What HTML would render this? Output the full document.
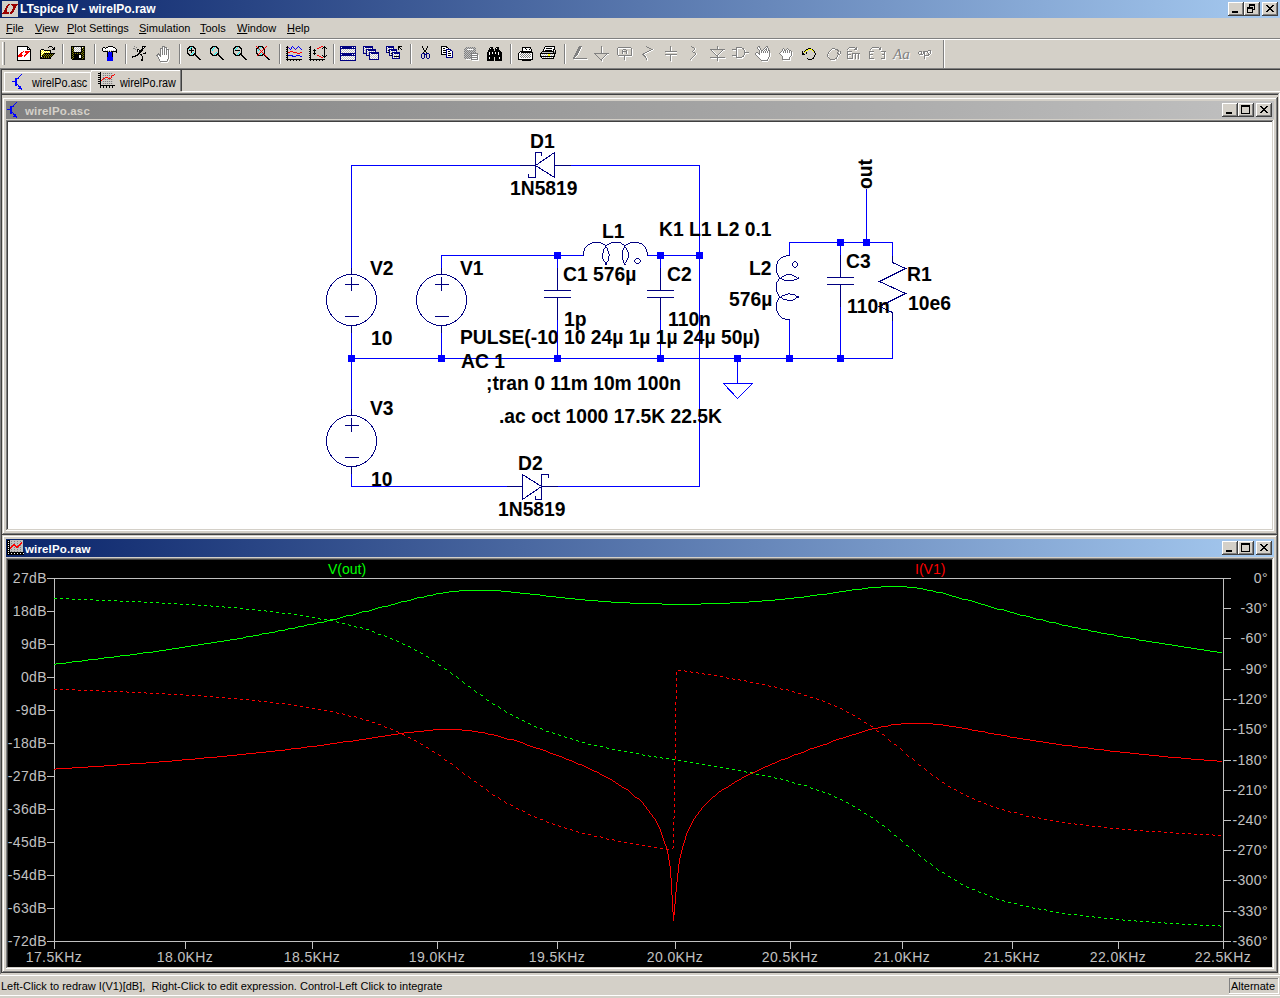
<!DOCTYPE html><html><head><meta charset="utf-8"><style>
html,body{margin:0;padding:0;width:1280px;height:998px;overflow:hidden;background:#D4D0C8;font-family:"Liberation Sans", sans-serif;}
.t{position:absolute;white-space:pre;line-height:1;font-family:"Liberation Sans", sans-serif;}
svg{overflow:visible}
</style></head><body><div style="position:absolute;left:0px;top:0px;width:1280px;height:18px;background:linear-gradient(to right,#0A246A,#A6CAF0);"></div>
<svg style="position:absolute;left:2px;top:1px" width="16" height="16" shape-rendering="crispEdges"><rect width="16" height="16" fill="#D4D0C8"/><path d="M6 3h1v1h-1zM7 3h1v1h-1zM9 3h1v1h-1zM10 3h1v1h-1zM11 3h1v1h-1zM12 3h1v1h-1zM13 3h1v1h-1zM14 3h1v1h-1zM15 3h1v1h-1zM5 4h1v1h-1zM6 4h1v1h-1zM10 4h1v1h-1zM11 4h1v1h-1zM12 4h1v1h-1zM13 4h1v1h-1zM14 4h1v1h-1zM4 5h1v1h-1zM5 5h1v1h-1zM11 5h1v1h-1zM12 5h1v1h-1zM13 5h1v1h-1zM4 6h1v1h-1zM5 6h1v1h-1zM11 6h1v1h-1zM12 6h1v1h-1zM13 6h1v1h-1zM3 7h1v1h-1zM4 7h1v1h-1zM11 7h1v1h-1zM12 7h1v1h-1zM3 8h1v1h-1zM4 8h1v1h-1zM10 8h1v1h-1zM11 8h1v1h-1zM12 8h1v1h-1zM2 9h1v1h-1zM3 9h1v1h-1zM4 9h1v1h-1zM10 9h1v1h-1zM11 9h1v1h-1zM2 10h1v1h-1zM3 10h1v1h-1zM4 10h1v1h-1zM9 10h1v1h-1zM10 10h1v1h-1zM11 10h1v1h-1zM1 11h1v1h-1zM2 11h1v1h-1zM3 11h1v1h-1zM4 11h1v1h-1zM5 11h1v1h-1zM6 11h1v1h-1zM8 11h1v1h-1zM9 11h1v1h-1zM10 11h1v1h-1zM0 12h1v1h-1zM1 12h1v1h-1zM2 12h1v1h-1zM3 12h1v1h-1zM4 12h1v1h-1zM5 12h1v1h-1zM6 12h1v1h-1zM8 12h1v1h-1zM9 12h1v1h-1z" fill="#9A0000"/></svg>
<div class="t" style="left:20px;top:3px;font-size:12px;color:#fff;font-weight:bold;">LTspice IV - wirelPo.raw</div>
<div style="position:absolute;left:1228px;top:2px;width:16px;height:14px;background:#D4D0C8;"></div>
<div style="position:absolute;left:1228px;top:2px;width:16px;height:1px;background:#fff;"></div>
<div style="position:absolute;left:1228px;top:2px;width:1px;height:14px;background:#fff;"></div>
<div style="position:absolute;left:1228px;top:15px;width:16px;height:1px;background:#404040;"></div>
<div style="position:absolute;left:1243px;top:2px;width:1px;height:14px;background:#404040;"></div>
<div style="position:absolute;left:1229px;top:14px;width:14px;height:1px;background:#808080;"></div>
<div style="position:absolute;left:1242px;top:3px;width:1px;height:12px;background:#808080;"></div>
<div style="position:absolute;left:1232px;top:11px;width:6px;height:2px;background:#000;"></div>
<div style="position:absolute;left:1244px;top:2px;width:16px;height:14px;background:#D4D0C8;"></div>
<div style="position:absolute;left:1244px;top:2px;width:16px;height:1px;background:#fff;"></div>
<div style="position:absolute;left:1244px;top:2px;width:1px;height:14px;background:#fff;"></div>
<div style="position:absolute;left:1244px;top:15px;width:16px;height:1px;background:#404040;"></div>
<div style="position:absolute;left:1259px;top:2px;width:1px;height:14px;background:#404040;"></div>
<div style="position:absolute;left:1245px;top:14px;width:14px;height:1px;background:#808080;"></div>
<div style="position:absolute;left:1258px;top:3px;width:1px;height:12px;background:#808080;"></div>
<div style="position:absolute;left:1249px;top:4px;width:6px;height:6px;background:none;border:1px solid #000;border-top-width:2px;box-sizing:border-box"></div>
<div style="position:absolute;left:1247px;top:7px;width:6px;height:6px;background:#D4D0C8;border:1px solid #000;border-top-width:2px;box-sizing:border-box"></div>
<div style="position:absolute;left:1262px;top:2px;width:16px;height:14px;background:#D4D0C8;"></div>
<div style="position:absolute;left:1262px;top:2px;width:16px;height:1px;background:#fff;"></div>
<div style="position:absolute;left:1262px;top:2px;width:1px;height:14px;background:#fff;"></div>
<div style="position:absolute;left:1262px;top:15px;width:16px;height:1px;background:#404040;"></div>
<div style="position:absolute;left:1277px;top:2px;width:1px;height:14px;background:#404040;"></div>
<div style="position:absolute;left:1263px;top:14px;width:14px;height:1px;background:#808080;"></div>
<div style="position:absolute;left:1276px;top:3px;width:1px;height:12px;background:#808080;"></div>
<svg style="position:absolute;left:1266px;top:5px" width="8" height="7" shape-rendering="crispEdges"><path d="M0 0h1v1h-1zM1 0h1v1h-1zM6 0h1v1h-1zM7 0h1v1h-1zM1 1h1v1h-1zM2 1h1v1h-1zM5 1h1v1h-1zM6 1h1v1h-1zM2 2h1v1h-1zM3 2h1v1h-1zM4 2h1v1h-1zM5 2h1v1h-1zM3 3h1v1h-1zM4 3h1v1h-1zM2 4h1v1h-1zM3 4h1v1h-1zM4 4h1v1h-1zM5 4h1v1h-1zM1 5h1v1h-1zM2 5h1v1h-1zM5 5h1v1h-1zM6 5h1v1h-1zM0 6h1v1h-1zM1 6h1v1h-1zM6 6h1v1h-1zM7 6h1v1h-1z" fill="#000"/></svg>
<div class="t" style="left:6px;top:23px;font-size:11px;color:#000;font-weight:normal;"><u>F</u>ile</div>
<div class="t" style="left:35px;top:23px;font-size:11px;color:#000;font-weight:normal;"><u>V</u>iew</div>
<div class="t" style="left:67px;top:23px;font-size:11px;color:#000;font-weight:normal;"><u>P</u>lot Settings</div>
<div class="t" style="left:139px;top:23px;font-size:11px;color:#000;font-weight:normal;"><u>S</u>imulation</div>
<div class="t" style="left:200px;top:23px;font-size:11px;color:#000;font-weight:normal;"><u>T</u>ools</div>
<div class="t" style="left:237px;top:23px;font-size:11px;color:#000;font-weight:normal;"><u>W</u>indow</div>
<div class="t" style="left:287px;top:23px;font-size:11px;color:#000;font-weight:normal;"><u>H</u>elp</div>
<div style="position:absolute;left:0px;top:38px;width:1280px;height:1px;background:#808080;"></div>
<div style="position:absolute;left:0px;top:39px;width:1280px;height:1px;background:#fff;"></div>
<div style="position:absolute;left:2px;top:42px;width:1px;height:23px;background:#fff;"></div>
<div style="position:absolute;left:4px;top:42px;width:1px;height:23px;background:#808080;"></div>
<div style="position:absolute;left:62px;top:44px;width:1px;height:20px;background:#808080;"></div>
<div style="position:absolute;left:63px;top:44px;width:1px;height:20px;background:#fff;"></div>
<div style="position:absolute;left:94px;top:44px;width:1px;height:20px;background:#808080;"></div>
<div style="position:absolute;left:95px;top:44px;width:1px;height:20px;background:#fff;"></div>
<div style="position:absolute;left:125px;top:44px;width:1px;height:20px;background:#808080;"></div>
<div style="position:absolute;left:126px;top:44px;width:1px;height:20px;background:#fff;"></div>
<div style="position:absolute;left:179px;top:44px;width:1px;height:20px;background:#808080;"></div>
<div style="position:absolute;left:180px;top:44px;width:1px;height:20px;background:#fff;"></div>
<div style="position:absolute;left:279px;top:44px;width:1px;height:20px;background:#808080;"></div>
<div style="position:absolute;left:280px;top:44px;width:1px;height:20px;background:#fff;"></div>
<div style="position:absolute;left:333px;top:44px;width:1px;height:20px;background:#808080;"></div>
<div style="position:absolute;left:334px;top:44px;width:1px;height:20px;background:#fff;"></div>
<div style="position:absolute;left:410px;top:44px;width:1px;height:20px;background:#808080;"></div>
<div style="position:absolute;left:411px;top:44px;width:1px;height:20px;background:#fff;"></div>
<div style="position:absolute;left:510px;top:44px;width:1px;height:20px;background:#808080;"></div>
<div style="position:absolute;left:511px;top:44px;width:1px;height:20px;background:#fff;"></div>
<div style="position:absolute;left:564px;top:44px;width:1px;height:20px;background:#808080;"></div>
<div style="position:absolute;left:565px;top:44px;width:1px;height:20px;background:#fff;"></div>
<div style="position:absolute;left:943px;top:40px;width:1px;height:28px;background:#808080;"></div>
<div style="position:absolute;left:944px;top:40px;width:1px;height:28px;background:#fff;"></div>
<svg style="position:absolute;left:0;top:0" width="1280" height="70" shape-rendering="crispEdges"><path d="M17 46h1v1h-1zM18 46h1v1h-1zM19 46h1v1h-1zM20 46h1v1h-1zM21 46h1v1h-1zM22 46h1v1h-1zM23 46h1v1h-1zM24 46h1v1h-1zM25 46h1v1h-1zM26 46h1v1h-1zM27 46h1v1h-1zM17 47h1v1h-1zM27 47h1v1h-1zM28 47h1v1h-1zM17 48h1v1h-1zM27 48h1v1h-1zM29 48h1v1h-1zM17 49h1v1h-1zM27 49h1v1h-1zM28 49h1v1h-1zM29 49h1v1h-1zM30 49h1v1h-1zM17 50h1v1h-1zM30 50h1v1h-1zM17 51h1v1h-1zM30 51h1v1h-1zM17 52h1v1h-1zM30 52h1v1h-1zM17 53h1v1h-1zM30 53h1v1h-1zM17 54h1v1h-1zM30 54h1v1h-1zM17 55h1v1h-1zM30 55h1v1h-1zM17 56h1v1h-1zM30 56h1v1h-1zM17 57h1v1h-1zM30 57h1v1h-1zM17 58h1v1h-1zM30 58h1v1h-1zM17 59h1v1h-1zM30 59h1v1h-1zM17 60h1v1h-1zM18 60h1v1h-1zM19 60h1v1h-1zM20 60h1v1h-1zM21 60h1v1h-1zM22 60h1v1h-1zM23 60h1v1h-1zM24 60h1v1h-1zM25 60h1v1h-1zM26 60h1v1h-1zM27 60h1v1h-1zM28 60h1v1h-1zM29 60h1v1h-1zM30 60h1v1h-1z" fill="#000000"/></svg>
<svg style="position:absolute;left:0;top:0" width="1280" height="70" shape-rendering="crispEdges"><path d="M18 47h1v1h-1zM19 47h1v1h-1zM20 47h1v1h-1zM21 47h1v1h-1zM22 47h1v1h-1zM23 47h1v1h-1zM24 47h1v1h-1zM25 47h1v1h-1zM26 47h1v1h-1zM18 48h1v1h-1zM19 48h1v1h-1zM20 48h1v1h-1zM21 48h1v1h-1zM22 48h1v1h-1zM23 48h1v1h-1zM24 48h1v1h-1zM25 48h1v1h-1zM26 48h1v1h-1zM28 48h1v1h-1zM18 49h1v1h-1zM19 49h1v1h-1zM20 49h1v1h-1zM21 49h1v1h-1zM22 49h1v1h-1zM23 49h1v1h-1zM24 49h1v1h-1zM25 49h1v1h-1zM26 49h1v1h-1zM18 50h1v1h-1zM19 50h1v1h-1zM20 50h1v1h-1zM21 50h1v1h-1zM22 50h1v1h-1zM23 50h1v1h-1zM24 50h1v1h-1zM25 50h1v1h-1zM26 50h1v1h-1zM27 50h1v1h-1zM28 50h1v1h-1zM29 50h1v1h-1zM18 51h1v1h-1zM19 51h1v1h-1zM20 51h1v1h-1zM21 51h1v1h-1zM22 51h1v1h-1zM24 51h1v1h-1zM18 52h1v1h-1zM19 52h1v1h-1zM20 52h1v1h-1zM23 52h1v1h-1zM24 52h1v1h-1zM29 52h1v1h-1zM18 53h1v1h-1zM19 53h1v1h-1zM22 53h1v1h-1zM23 53h1v1h-1zM24 53h1v1h-1zM25 53h1v1h-1zM28 53h1v1h-1zM29 53h1v1h-1zM18 54h1v1h-1zM22 54h1v1h-1zM23 54h1v1h-1zM24 54h1v1h-1zM27 54h1v1h-1zM28 54h1v1h-1zM29 54h1v1h-1zM23 55h1v1h-1zM26 55h1v1h-1zM27 55h1v1h-1zM28 55h1v1h-1zM29 55h1v1h-1zM22 56h1v1h-1zM23 56h1v1h-1zM25 56h1v1h-1zM26 56h1v1h-1zM27 56h1v1h-1zM28 56h1v1h-1zM29 56h1v1h-1zM18 57h1v1h-1zM19 57h1v1h-1zM20 57h1v1h-1zM21 57h1v1h-1zM22 57h1v1h-1zM23 57h1v1h-1zM24 57h1v1h-1zM25 57h1v1h-1zM26 57h1v1h-1zM27 57h1v1h-1zM28 57h1v1h-1zM29 57h1v1h-1zM18 58h1v1h-1zM19 58h1v1h-1zM20 58h1v1h-1zM21 58h1v1h-1zM22 58h1v1h-1zM23 58h1v1h-1zM24 58h1v1h-1zM25 58h1v1h-1zM26 58h1v1h-1zM27 58h1v1h-1zM28 58h1v1h-1zM29 58h1v1h-1zM18 59h1v1h-1zM19 59h1v1h-1zM20 59h1v1h-1zM21 59h1v1h-1zM22 59h1v1h-1zM23 59h1v1h-1zM24 59h1v1h-1zM25 59h1v1h-1zM26 59h1v1h-1zM27 59h1v1h-1zM28 59h1v1h-1zM29 59h1v1h-1z" fill="#FFFFFF"/></svg>
<svg style="position:absolute;left:0;top:0" width="1280" height="70" shape-rendering="crispEdges"><path d="M23 51h1v1h-1zM25 51h1v1h-1zM26 51h1v1h-1zM27 51h1v1h-1zM28 51h1v1h-1zM29 51h1v1h-1zM21 52h1v1h-1zM22 52h1v1h-1zM25 52h1v1h-1zM26 52h1v1h-1zM27 52h1v1h-1zM28 52h1v1h-1zM20 53h1v1h-1zM21 53h1v1h-1zM26 53h1v1h-1zM27 53h1v1h-1zM19 54h1v1h-1zM20 54h1v1h-1zM21 54h1v1h-1zM25 54h1v1h-1zM26 54h1v1h-1zM18 55h1v1h-1zM19 55h1v1h-1zM20 55h1v1h-1zM21 55h1v1h-1zM22 55h1v1h-1zM24 55h1v1h-1zM25 55h1v1h-1zM18 56h1v1h-1zM19 56h1v1h-1zM20 56h1v1h-1zM21 56h1v1h-1zM24 56h1v1h-1z" fill="#FF0000"/></svg>
<svg style="position:absolute;left:0;top:0" width="1280" height="70" shape-rendering="crispEdges"><path d="M49 46h1v1h-1zM50 46h1v1h-1zM51 46h1v1h-1zM48 47h1v1h-1zM52 47h1v1h-1zM54 47h1v1h-1zM53 48h1v1h-1zM54 48h1v1h-1zM41 49h1v1h-1zM42 49h1v1h-1zM43 49h1v1h-1zM52 49h1v1h-1zM53 49h1v1h-1zM54 49h1v1h-1zM40 50h1v1h-1zM44 50h1v1h-1zM45 50h1v1h-1zM46 50h1v1h-1zM47 50h1v1h-1zM48 50h1v1h-1zM49 50h1v1h-1zM50 50h1v1h-1zM40 51h1v1h-1zM50 51h1v1h-1zM40 52h1v1h-1zM50 52h1v1h-1zM40 53h1v1h-1zM44 53h1v1h-1zM45 53h1v1h-1zM46 53h1v1h-1zM47 53h1v1h-1zM48 53h1v1h-1zM49 53h1v1h-1zM50 53h1v1h-1zM51 53h1v1h-1zM52 53h1v1h-1zM53 53h1v1h-1zM54 53h1v1h-1zM40 54h1v1h-1zM43 54h1v1h-1zM45 54h1v1h-1zM47 54h1v1h-1zM49 54h1v1h-1zM51 54h1v1h-1zM53 54h1v1h-1zM40 55h1v1h-1zM42 55h1v1h-1zM44 55h1v1h-1zM46 55h1v1h-1zM48 55h1v1h-1zM50 55h1v1h-1zM52 55h1v1h-1zM40 56h1v1h-1zM42 56h1v1h-1zM43 56h1v1h-1zM45 56h1v1h-1zM47 56h1v1h-1zM49 56h1v1h-1zM51 56h1v1h-1zM40 57h1v1h-1zM41 57h1v1h-1zM43 57h1v1h-1zM45 57h1v1h-1zM47 57h1v1h-1zM49 57h1v1h-1zM50 57h1v1h-1zM40 58h1v1h-1zM41 58h1v1h-1zM42 58h1v1h-1zM43 58h1v1h-1zM44 58h1v1h-1zM45 58h1v1h-1zM46 58h1v1h-1zM47 58h1v1h-1zM48 58h1v1h-1zM49 58h1v1h-1zM50 58h1v1h-1z" fill="#000000"/></svg>
<svg style="position:absolute;left:0;top:0" width="1280" height="70" shape-rendering="crispEdges"><path d="M41 50h1v1h-1zM43 50h1v1h-1zM42 51h1v1h-1zM44 51h1v1h-1zM46 51h1v1h-1zM48 51h1v1h-1zM41 52h1v1h-1zM43 52h1v1h-1zM45 52h1v1h-1zM47 52h1v1h-1zM49 52h1v1h-1zM42 53h1v1h-1zM41 54h1v1h-1zM41 56h1v1h-1z" fill="#FFFFFF"/></svg>
<svg style="position:absolute;left:0;top:0" width="1280" height="70" shape-rendering="crispEdges"><path d="M42 50h1v1h-1zM41 51h1v1h-1zM43 51h1v1h-1zM45 51h1v1h-1zM47 51h1v1h-1zM49 51h1v1h-1zM42 52h1v1h-1zM44 52h1v1h-1zM46 52h1v1h-1zM48 52h1v1h-1zM41 53h1v1h-1zM43 53h1v1h-1zM42 54h1v1h-1zM41 55h1v1h-1z" fill="#FFFF00"/></svg>
<svg style="position:absolute;left:0;top:0" width="1280" height="70" shape-rendering="crispEdges"><path d="M44 54h1v1h-1zM46 54h1v1h-1zM48 54h1v1h-1zM50 54h1v1h-1zM52 54h1v1h-1zM43 55h1v1h-1zM45 55h1v1h-1zM47 55h1v1h-1zM49 55h1v1h-1zM51 55h1v1h-1zM44 56h1v1h-1zM46 56h1v1h-1zM48 56h1v1h-1zM50 56h1v1h-1zM42 57h1v1h-1zM44 57h1v1h-1zM46 57h1v1h-1zM48 57h1v1h-1z" fill="#808000"/></svg>
<svg style="position:absolute;left:0;top:0" width="1280" height="70" shape-rendering="crispEdges"><path d="M71 46h1v1h-1zM72 46h1v1h-1zM73 46h1v1h-1zM74 46h1v1h-1zM75 46h1v1h-1zM76 46h1v1h-1zM77 46h1v1h-1zM78 46h1v1h-1zM79 46h1v1h-1zM80 46h1v1h-1zM81 46h1v1h-1zM82 46h1v1h-1zM83 46h1v1h-1zM84 46h1v1h-1zM71 47h1v1h-1zM73 47h1v1h-1zM81 47h1v1h-1zM84 47h1v1h-1zM71 48h1v1h-1zM73 48h1v1h-1zM81 48h1v1h-1zM83 48h1v1h-1zM84 48h1v1h-1zM71 49h1v1h-1zM72 49h1v1h-1zM81 49h1v1h-1zM82 49h1v1h-1zM84 49h1v1h-1zM71 50h1v1h-1zM73 50h1v1h-1zM81 50h1v1h-1zM83 50h1v1h-1zM84 50h1v1h-1zM71 51h1v1h-1zM72 51h1v1h-1zM81 51h1v1h-1zM82 51h1v1h-1zM84 51h1v1h-1zM71 52h1v1h-1zM73 52h1v1h-1zM74 52h1v1h-1zM75 52h1v1h-1zM76 52h1v1h-1zM77 52h1v1h-1zM78 52h1v1h-1zM79 52h1v1h-1zM80 52h1v1h-1zM81 52h1v1h-1zM83 52h1v1h-1zM84 52h1v1h-1zM71 53h1v1h-1zM72 53h1v1h-1zM74 53h1v1h-1zM76 53h1v1h-1zM78 53h1v1h-1zM80 53h1v1h-1zM82 53h1v1h-1zM84 53h1v1h-1zM71 54h1v1h-1zM73 54h1v1h-1zM74 54h1v1h-1zM75 54h1v1h-1zM76 54h1v1h-1zM77 54h1v1h-1zM78 54h1v1h-1zM79 54h1v1h-1zM80 54h1v1h-1zM81 54h1v1h-1zM83 54h1v1h-1zM84 54h1v1h-1zM71 55h1v1h-1zM72 55h1v1h-1zM74 55h1v1h-1zM75 55h1v1h-1zM76 55h1v1h-1zM77 55h1v1h-1zM78 55h1v1h-1zM81 55h1v1h-1zM82 55h1v1h-1zM84 55h1v1h-1zM71 56h1v1h-1zM73 56h1v1h-1zM74 56h1v1h-1zM75 56h1v1h-1zM76 56h1v1h-1zM77 56h1v1h-1zM78 56h1v1h-1zM81 56h1v1h-1zM83 56h1v1h-1zM84 56h1v1h-1zM71 57h1v1h-1zM72 57h1v1h-1zM74 57h1v1h-1zM75 57h1v1h-1zM76 57h1v1h-1zM77 57h1v1h-1zM78 57h1v1h-1zM81 57h1v1h-1zM82 57h1v1h-1zM84 57h1v1h-1zM71 58h1v1h-1zM73 58h1v1h-1zM74 58h1v1h-1zM75 58h1v1h-1zM76 58h1v1h-1zM77 58h1v1h-1zM78 58h1v1h-1zM79 58h1v1h-1zM80 58h1v1h-1zM81 58h1v1h-1zM83 58h1v1h-1zM84 58h1v1h-1zM72 59h1v1h-1zM73 59h1v1h-1zM74 59h1v1h-1zM75 59h1v1h-1zM76 59h1v1h-1zM77 59h1v1h-1zM78 59h1v1h-1zM79 59h1v1h-1zM80 59h1v1h-1zM81 59h1v1h-1zM82 59h1v1h-1zM83 59h1v1h-1zM84 59h1v1h-1z" fill="#000000"/></svg>
<svg style="position:absolute;left:0;top:0" width="1280" height="70" shape-rendering="crispEdges"><path d="M72 47h1v1h-1zM83 47h1v1h-1zM72 48h1v1h-1zM82 48h1v1h-1zM73 49h1v1h-1zM83 49h1v1h-1zM72 50h1v1h-1zM82 50h1v1h-1zM73 51h1v1h-1zM83 51h1v1h-1zM72 52h1v1h-1zM82 52h1v1h-1zM73 53h1v1h-1zM75 53h1v1h-1zM77 53h1v1h-1zM79 53h1v1h-1zM81 53h1v1h-1zM83 53h1v1h-1zM72 54h1v1h-1zM82 54h1v1h-1zM73 55h1v1h-1zM83 55h1v1h-1zM72 56h1v1h-1zM82 56h1v1h-1zM73 57h1v1h-1zM83 57h1v1h-1zM72 58h1v1h-1zM82 58h1v1h-1z" fill="#808000"/></svg>
<svg style="position:absolute;left:0;top:0" width="1280" height="70" shape-rendering="crispEdges"><path d="M74 47h1v1h-1zM76 47h1v1h-1zM78 47h1v1h-1zM80 47h1v1h-1zM75 48h1v1h-1zM77 48h1v1h-1zM79 48h1v1h-1zM74 49h1v1h-1zM76 49h1v1h-1zM78 49h1v1h-1zM80 49h1v1h-1zM75 50h1v1h-1zM77 50h1v1h-1zM79 50h1v1h-1zM74 51h1v1h-1zM76 51h1v1h-1zM78 51h1v1h-1zM80 51h1v1h-1z" fill="#C0C0C0"/></svg>
<svg style="position:absolute;left:0;top:0" width="1280" height="70" shape-rendering="crispEdges"><path d="M75 47h1v1h-1zM77 47h1v1h-1zM79 47h1v1h-1zM82 47h1v1h-1zM74 48h1v1h-1zM76 48h1v1h-1zM78 48h1v1h-1zM80 48h1v1h-1zM75 49h1v1h-1zM77 49h1v1h-1zM79 49h1v1h-1zM74 50h1v1h-1zM76 50h1v1h-1zM78 50h1v1h-1zM80 50h1v1h-1zM75 51h1v1h-1zM77 51h1v1h-1zM79 51h1v1h-1zM79 55h1v1h-1zM80 55h1v1h-1zM79 56h1v1h-1zM80 56h1v1h-1zM79 57h1v1h-1zM80 57h1v1h-1z" fill="#FFFFFF"/></svg>
<svg style="position:absolute;left:0;top:0" width="1280" height="70" shape-rendering="crispEdges"><path d="M108 46h1v1h-1zM109 46h1v1h-1zM110 46h1v1h-1zM111 46h1v1h-1zM112 46h1v1h-1zM103 47h1v1h-1zM104 47h1v1h-1zM106 47h1v1h-1zM107 47h1v1h-1zM113 47h1v1h-1zM114 47h1v1h-1zM102 48h1v1h-1zM105 48h1v1h-1zM115 48h1v1h-1zM102 49h1v1h-1zM116 49h1v1h-1zM102 50h1v1h-1zM116 50h1v1h-1zM103 51h1v1h-1zM104 51h1v1h-1zM105 51h1v1h-1zM106 51h1v1h-1zM107 51h1v1h-1zM109 51h1v1h-1zM111 51h1v1h-1zM112 51h1v1h-1zM113 51h1v1h-1zM114 51h1v1h-1zM115 51h1v1h-1zM116 51h1v1h-1zM107 52h1v1h-1zM112 52h1v1h-1zM116 52h1v1h-1zM107 53h1v1h-1zM112 53h1v1h-1zM107 54h1v1h-1zM112 54h1v1h-1zM107 55h1v1h-1zM112 55h1v1h-1zM107 56h1v1h-1zM112 56h1v1h-1z" fill="#000000"/></svg>
<svg style="position:absolute;left:0;top:0" width="1280" height="70" shape-rendering="crispEdges"><path d="M108 47h1v1h-1zM109 47h1v1h-1zM110 47h1v1h-1zM111 47h1v1h-1zM112 47h1v1h-1zM103 48h1v1h-1zM104 48h1v1h-1zM106 48h1v1h-1zM107 48h1v1h-1zM108 48h1v1h-1zM109 48h1v1h-1zM110 48h1v1h-1zM111 48h1v1h-1zM112 48h1v1h-1zM113 48h1v1h-1zM114 48h1v1h-1zM103 49h1v1h-1zM104 49h1v1h-1zM105 49h1v1h-1zM106 49h1v1h-1zM107 49h1v1h-1zM108 49h1v1h-1zM109 49h1v1h-1zM110 49h1v1h-1zM111 49h1v1h-1zM112 49h1v1h-1zM113 49h1v1h-1zM114 49h1v1h-1zM115 49h1v1h-1zM103 50h1v1h-1zM104 50h1v1h-1zM106 50h1v1h-1zM108 50h1v1h-1zM110 50h1v1h-1zM112 50h1v1h-1zM114 50h1v1h-1z" fill="#FFFFFF"/></svg>
<svg style="position:absolute;left:0;top:0" width="1280" height="70" shape-rendering="crispEdges"><path d="M105 50h1v1h-1zM107 50h1v1h-1zM109 50h1v1h-1zM111 50h1v1h-1zM113 50h1v1h-1zM115 50h1v1h-1zM108 51h1v1h-1zM110 51h1v1h-1z" fill="#C0C0C0"/></svg>
<svg style="position:absolute;left:0;top:0" width="1280" height="70" shape-rendering="crispEdges"><path d="M108 52h1v1h-1zM109 52h1v1h-1zM110 52h1v1h-1zM111 52h1v1h-1zM108 53h1v1h-1zM109 53h1v1h-1zM110 53h1v1h-1zM111 53h1v1h-1zM108 54h1v1h-1zM109 54h1v1h-1zM110 54h1v1h-1zM111 54h1v1h-1zM108 55h1v1h-1zM109 55h1v1h-1zM110 55h1v1h-1zM111 55h1v1h-1zM108 56h1v1h-1zM109 56h1v1h-1zM110 56h1v1h-1zM111 56h1v1h-1zM107 57h1v1h-1zM108 57h1v1h-1zM109 57h1v1h-1zM110 57h1v1h-1zM111 57h1v1h-1zM112 57h1v1h-1zM107 58h1v1h-1zM108 58h1v1h-1zM109 58h1v1h-1zM110 58h1v1h-1zM111 58h1v1h-1zM112 58h1v1h-1zM107 59h1v1h-1zM108 59h1v1h-1zM109 59h1v1h-1zM110 59h1v1h-1zM111 59h1v1h-1zM112 59h1v1h-1zM107 60h1v1h-1zM108 60h1v1h-1zM109 60h1v1h-1zM110 60h1v1h-1zM111 60h1v1h-1zM112 60h1v1h-1z" fill="#0000FF"/></svg>
<svg style="position:absolute;left:0;top:0" width="1280" height="70" shape-rendering="crispEdges"><path d="M134 46h1v1h-1zM136 47h1v1h-1zM133 48h1v1h-1zM134 48h1v1h-1zM135 49h1v1h-1z" fill="#808080"/></svg>
<svg style="position:absolute;left:0;top:0" width="1280" height="70" shape-rendering="crispEdges"><path d="M142 46h1v1h-1zM143 46h1v1h-1zM144 46h1v1h-1zM145 46h1v1h-1zM142 47h1v1h-1zM144 47h1v1h-1zM142 48h1v1h-1zM143 48h1v1h-1zM137 49h1v1h-1zM138 49h1v1h-1zM141 49h1v1h-1zM142 49h1v1h-1zM137 50h1v1h-1zM139 50h1v1h-1zM140 50h1v1h-1zM141 50h1v1h-1zM142 50h1v1h-1zM137 51h1v1h-1zM139 51h1v1h-1zM140 51h1v1h-1zM141 51h1v1h-1zM139 52h1v1h-1zM140 52h1v1h-1zM145 52h1v1h-1zM138 53h1v1h-1zM139 53h1v1h-1zM143 53h1v1h-1zM144 53h1v1h-1zM145 53h1v1h-1zM137 54h1v1h-1zM138 54h1v1h-1zM140 54h1v1h-1zM141 54h1v1h-1zM135 55h1v1h-1zM136 55h1v1h-1zM137 55h1v1h-1zM141 55h1v1h-1zM132 56h1v1h-1zM133 56h1v1h-1zM134 56h1v1h-1zM135 56h1v1h-1zM142 56h1v1h-1zM132 57h1v1h-1zM142 57h1v1h-1zM142 58h1v1h-1zM141 59h1v1h-1zM142 59h1v1h-1zM141 60h1v1h-1zM142 60h1v1h-1z" fill="#000000"/></svg>
<svg style="position:absolute;left:0;top:0" width="1280" height="70" shape-rendering="crispEdges"><path d="M143 47h1v1h-1zM138 50h1v1h-1z" fill="#FFFFFF"/></svg>
<svg style="position:absolute;left:0;top:0" width="1280" height="70" shape-rendering="crispEdges"><path d="M189 46h1v1h-1zM190 46h1v1h-1zM191 46h1v1h-1zM192 46h1v1h-1zM193 46h1v1h-1zM188 47h1v1h-1zM189 47h1v1h-1zM193 47h1v1h-1zM194 47h1v1h-1zM187 48h1v1h-1zM188 48h1v1h-1zM191 48h1v1h-1zM194 48h1v1h-1zM195 48h1v1h-1zM187 49h1v1h-1zM191 49h1v1h-1zM195 49h1v1h-1zM187 50h1v1h-1zM189 50h1v1h-1zM190 50h1v1h-1zM191 50h1v1h-1zM192 50h1v1h-1zM193 50h1v1h-1zM195 50h1v1h-1zM187 51h1v1h-1zM191 51h1v1h-1zM195 51h1v1h-1zM187 52h1v1h-1zM191 52h1v1h-1zM195 52h1v1h-1zM187 53h1v1h-1zM188 53h1v1h-1zM194 53h1v1h-1zM195 53h1v1h-1zM188 54h1v1h-1zM189 54h1v1h-1zM193 54h1v1h-1zM194 54h1v1h-1zM195 54h1v1h-1zM189 55h1v1h-1zM190 55h1v1h-1zM191 55h1v1h-1zM192 55h1v1h-1zM193 55h1v1h-1zM195 55h1v1h-1zM196 55h1v1h-1zM196 56h1v1h-1zM197 56h1v1h-1zM197 57h1v1h-1zM198 57h1v1h-1zM198 58h1v1h-1zM199 58h1v1h-1zM199 59h1v1h-1zM200 59h1v1h-1z" fill="#000000"/></svg>
<svg style="position:absolute;left:0;top:0" width="1280" height="70" shape-rendering="crispEdges"><path d="M191 47h1v1h-1zM190 48h1v1h-1zM189 49h1v1h-1zM193 52h1v1h-1zM192 53h1v1h-1zM191 54h1v1h-1z" fill="#00FFFF"/></svg>
<svg style="position:absolute;left:0;top:0" width="1280" height="70" shape-rendering="crispEdges"><path d="M212 46h1v1h-1zM213 46h1v1h-1zM214 46h1v1h-1zM215 46h1v1h-1zM216 46h1v1h-1zM211 47h1v1h-1zM212 47h1v1h-1zM216 47h1v1h-1zM217 47h1v1h-1zM210 48h1v1h-1zM211 48h1v1h-1zM217 48h1v1h-1zM218 48h1v1h-1zM210 49h1v1h-1zM218 49h1v1h-1zM210 50h1v1h-1zM218 50h1v1h-1zM210 51h1v1h-1zM218 51h1v1h-1zM210 52h1v1h-1zM218 52h1v1h-1zM210 53h1v1h-1zM211 53h1v1h-1zM217 53h1v1h-1zM218 53h1v1h-1zM211 54h1v1h-1zM212 54h1v1h-1zM216 54h1v1h-1zM217 54h1v1h-1zM218 54h1v1h-1zM212 55h1v1h-1zM213 55h1v1h-1zM214 55h1v1h-1zM215 55h1v1h-1zM216 55h1v1h-1zM218 55h1v1h-1zM219 55h1v1h-1zM219 56h1v1h-1zM220 56h1v1h-1zM220 57h1v1h-1zM221 57h1v1h-1zM221 58h1v1h-1zM222 58h1v1h-1zM222 59h1v1h-1zM223 59h1v1h-1z" fill="#000000"/></svg>
<svg style="position:absolute;left:0;top:0" width="1280" height="70" shape-rendering="crispEdges"><path d="M214 47h1v1h-1zM213 48h1v1h-1zM212 49h1v1h-1zM212 50h1v1h-1zM216 52h1v1h-1zM215 53h1v1h-1zM214 54h1v1h-1z" fill="#00FFFF"/></svg>
<svg style="position:absolute;left:0;top:0" width="1280" height="70" shape-rendering="crispEdges"><path d="M235 46h1v1h-1zM236 46h1v1h-1zM237 46h1v1h-1zM238 46h1v1h-1zM239 46h1v1h-1zM234 47h1v1h-1zM235 47h1v1h-1zM239 47h1v1h-1zM240 47h1v1h-1zM233 48h1v1h-1zM234 48h1v1h-1zM240 48h1v1h-1zM241 48h1v1h-1zM233 49h1v1h-1zM241 49h1v1h-1zM233 50h1v1h-1zM235 50h1v1h-1zM236 50h1v1h-1zM237 50h1v1h-1zM238 50h1v1h-1zM239 50h1v1h-1zM241 50h1v1h-1zM233 51h1v1h-1zM241 51h1v1h-1zM233 52h1v1h-1zM241 52h1v1h-1zM233 53h1v1h-1zM234 53h1v1h-1zM240 53h1v1h-1zM241 53h1v1h-1zM234 54h1v1h-1zM235 54h1v1h-1zM239 54h1v1h-1zM240 54h1v1h-1zM241 54h1v1h-1zM235 55h1v1h-1zM236 55h1v1h-1zM237 55h1v1h-1zM238 55h1v1h-1zM239 55h1v1h-1zM241 55h1v1h-1zM242 55h1v1h-1zM242 56h1v1h-1zM243 56h1v1h-1zM243 57h1v1h-1zM244 57h1v1h-1zM244 58h1v1h-1zM245 58h1v1h-1zM245 59h1v1h-1zM246 59h1v1h-1z" fill="#000000"/></svg>
<svg style="position:absolute;left:0;top:0" width="1280" height="70" shape-rendering="crispEdges"><path d="M237 47h1v1h-1zM236 48h1v1h-1zM235 49h1v1h-1zM239 52h1v1h-1zM238 53h1v1h-1zM237 54h1v1h-1z" fill="#00FFFF"/></svg>
<svg style="position:absolute;left:0;top:0" width="1280" height="70" shape-rendering="crispEdges"><path d="M256 46h1v1h-1zM266 46h1v1h-1zM257 47h1v1h-1zM265 47h1v1h-1zM258 48h1v1h-1zM264 48h1v1h-1zM259 49h1v1h-1zM263 49h1v1h-1zM260 50h1v1h-1zM262 50h1v1h-1zM261 51h1v1h-1zM260 52h1v1h-1zM262 52h1v1h-1zM259 53h1v1h-1zM263 53h1v1h-1zM258 54h1v1h-1zM264 54h1v1h-1zM257 55h1v1h-1zM265 55h1v1h-1zM266 56h1v1h-1z" fill="#FF0000"/></svg>
<svg style="position:absolute;left:0;top:0" width="1280" height="70" shape-rendering="crispEdges"><path d="M258 46h1v1h-1zM259 46h1v1h-1zM260 46h1v1h-1zM261 46h1v1h-1zM262 46h1v1h-1zM258 47h1v1h-1zM262 47h1v1h-1zM263 47h1v1h-1zM256 48h1v1h-1zM257 48h1v1h-1zM263 48h1v1h-1zM256 49h1v1h-1zM264 49h1v1h-1zM256 50h1v1h-1zM264 50h1v1h-1zM256 51h1v1h-1zM264 51h1v1h-1zM256 52h1v1h-1zM264 52h1v1h-1zM256 53h1v1h-1zM257 53h1v1h-1zM264 53h1v1h-1zM257 54h1v1h-1zM262 54h1v1h-1zM263 54h1v1h-1zM258 55h1v1h-1zM259 55h1v1h-1zM260 55h1v1h-1zM261 55h1v1h-1zM262 55h1v1h-1zM264 55h1v1h-1zM265 56h1v1h-1zM266 57h1v1h-1zM267 57h1v1h-1zM267 58h1v1h-1zM268 58h1v1h-1zM268 59h1v1h-1zM269 59h1v1h-1z" fill="#000000"/></svg>
<svg style="position:absolute;left:0;top:0" width="1280" height="70" shape-rendering="crispEdges"><path d="M260 47h1v1h-1zM259 48h1v1h-1zM258 49h1v1h-1zM258 50h1v1h-1zM261 53h1v1h-1zM260 54h1v1h-1z" fill="#00FFFF"/></svg>
<svg style="position:absolute;left:0;top:0" width="1280" height="70" shape-rendering="crispEdges"><path d="M287 46h1v1h-1zM286 47h1v1h-1zM287 47h1v1h-1zM287 48h1v1h-1zM286 49h1v1h-1zM287 49h1v1h-1zM287 50h1v1h-1zM286 51h1v1h-1zM287 51h1v1h-1zM287 52h1v1h-1zM286 53h1v1h-1zM287 53h1v1h-1zM287 54h1v1h-1zM286 55h1v1h-1zM287 55h1v1h-1zM287 56h1v1h-1zM286 57h1v1h-1zM287 57h1v1h-1zM287 58h1v1h-1zM286 59h1v1h-1zM287 59h1v1h-1zM288 59h1v1h-1zM289 59h1v1h-1zM290 59h1v1h-1zM291 59h1v1h-1zM292 59h1v1h-1zM293 59h1v1h-1zM294 59h1v1h-1zM295 59h1v1h-1zM296 59h1v1h-1zM297 59h1v1h-1zM298 59h1v1h-1zM299 59h1v1h-1zM300 59h1v1h-1zM301 59h1v1h-1zM287 60h1v1h-1zM290 60h1v1h-1zM293 60h1v1h-1zM296 60h1v1h-1zM299 60h1v1h-1z" fill="#000000"/></svg>
<svg style="position:absolute;left:0;top:0" width="1280" height="70" shape-rendering="crispEdges"><path d="M292 46h1v1h-1zM298 46h1v1h-1zM291 47h1v1h-1zM293 47h1v1h-1zM297 47h1v1h-1zM299 47h1v1h-1zM289 48h1v1h-1zM291 48h1v1h-1zM294 48h1v1h-1zM296 48h1v1h-1zM300 48h1v1h-1zM290 49h1v1h-1zM301 49h1v1h-1zM288 55h1v1h-1zM289 55h1v1h-1zM290 55h1v1h-1zM291 55h1v1h-1zM292 55h1v1h-1zM296 55h1v1h-1zM297 55h1v1h-1zM298 55h1v1h-1zM299 55h1v1h-1zM292 56h1v1h-1zM293 56h1v1h-1zM294 56h1v1h-1zM295 56h1v1h-1zM300 56h1v1h-1zM301 56h1v1h-1z" fill="#0000FF"/></svg>
<svg style="position:absolute;left:0;top:0" width="1280" height="70" shape-rendering="crispEdges"><path d="M288 47h1v1h-1zM295 49h1v1h-1z" fill="#800080"/></svg>
<svg style="position:absolute;left:0;top:0" width="1280" height="70" shape-rendering="crispEdges"><path d="M290 51h1v1h-1zM291 51h1v1h-1zM292 51h1v1h-1zM288 52h1v1h-1zM289 52h1v1h-1zM293 52h1v1h-1zM294 52h1v1h-1zM295 52h1v1h-1zM296 52h1v1h-1zM300 52h1v1h-1zM301 52h1v1h-1zM297 53h1v1h-1zM298 53h1v1h-1zM299 53h1v1h-1z" fill="#FF0000"/></svg>
<svg style="position:absolute;left:0;top:0" width="1280" height="70" shape-rendering="crispEdges"><path d="M310 46h1v1h-1zM324 46h1v1h-1zM309 47h1v1h-1zM310 47h1v1h-1zM323 47h1v1h-1zM324 47h1v1h-1zM325 47h1v1h-1zM310 48h1v1h-1zM322 48h1v1h-1zM324 48h1v1h-1zM326 48h1v1h-1zM309 49h1v1h-1zM310 49h1v1h-1zM314 49h1v1h-1zM324 49h1v1h-1zM310 50h1v1h-1zM313 50h1v1h-1zM314 50h1v1h-1zM315 50h1v1h-1zM324 50h1v1h-1zM309 51h1v1h-1zM310 51h1v1h-1zM314 51h1v1h-1zM324 51h1v1h-1zM310 52h1v1h-1zM314 52h1v1h-1zM324 52h1v1h-1zM309 53h1v1h-1zM310 53h1v1h-1zM313 53h1v1h-1zM314 53h1v1h-1zM315 53h1v1h-1zM324 53h1v1h-1zM310 54h1v1h-1zM314 54h1v1h-1zM324 54h1v1h-1zM309 55h1v1h-1zM310 55h1v1h-1zM322 55h1v1h-1zM324 55h1v1h-1zM326 55h1v1h-1zM310 56h1v1h-1zM323 56h1v1h-1zM324 56h1v1h-1zM325 56h1v1h-1zM309 57h1v1h-1zM310 57h1v1h-1zM324 57h1v1h-1zM310 58h1v1h-1zM309 59h1v1h-1zM310 59h1v1h-1zM311 59h1v1h-1zM312 59h1v1h-1zM313 59h1v1h-1zM314 59h1v1h-1zM315 59h1v1h-1zM316 59h1v1h-1zM317 59h1v1h-1zM318 59h1v1h-1zM319 59h1v1h-1zM320 59h1v1h-1zM321 59h1v1h-1zM322 59h1v1h-1zM323 59h1v1h-1zM324 59h1v1h-1zM310 60h1v1h-1zM313 60h1v1h-1zM316 60h1v1h-1zM319 60h1v1h-1zM322 60h1v1h-1z" fill="#000000"/></svg>
<svg style="position:absolute;left:0;top:0" width="1280" height="70" shape-rendering="crispEdges"><path d="M321 46h1v1h-1zM322 46h1v1h-1zM319 47h1v1h-1zM320 47h1v1h-1zM317 48h1v1h-1zM318 48h1v1h-1zM317 55h1v1h-1zM318 55h1v1h-1zM319 56h1v1h-1zM320 56h1v1h-1zM321 57h1v1h-1zM322 57h1v1h-1z" fill="#FF0000"/></svg>
<svg style="position:absolute;left:0;top:0" width="1280" height="70" shape-rendering="crispEdges"><path d="M340 46h1v1h-1zM341 46h1v1h-1zM342 46h1v1h-1zM343 46h1v1h-1zM344 46h1v1h-1zM345 46h1v1h-1zM346 46h1v1h-1zM347 46h1v1h-1zM348 46h1v1h-1zM349 46h1v1h-1zM350 46h1v1h-1zM351 46h1v1h-1zM352 46h1v1h-1zM353 46h1v1h-1zM354 46h1v1h-1zM355 46h1v1h-1zM340 47h1v1h-1zM342 47h1v1h-1zM343 47h1v1h-1zM344 47h1v1h-1zM345 47h1v1h-1zM346 47h1v1h-1zM347 47h1v1h-1zM348 47h1v1h-1zM349 47h1v1h-1zM350 47h1v1h-1zM351 47h1v1h-1zM353 47h1v1h-1zM355 47h1v1h-1zM340 48h1v1h-1zM341 48h1v1h-1zM342 48h1v1h-1zM343 48h1v1h-1zM344 48h1v1h-1zM345 48h1v1h-1zM346 48h1v1h-1zM347 48h1v1h-1zM348 48h1v1h-1zM349 48h1v1h-1zM350 48h1v1h-1zM351 48h1v1h-1zM352 48h1v1h-1zM353 48h1v1h-1zM354 48h1v1h-1zM355 48h1v1h-1zM340 49h1v1h-1zM355 49h1v1h-1zM340 50h1v1h-1zM355 50h1v1h-1zM340 51h1v1h-1zM355 51h1v1h-1zM340 52h1v1h-1zM355 52h1v1h-1zM340 53h1v1h-1zM341 53h1v1h-1zM342 53h1v1h-1zM343 53h1v1h-1zM344 53h1v1h-1zM345 53h1v1h-1zM346 53h1v1h-1zM347 53h1v1h-1zM348 53h1v1h-1zM349 53h1v1h-1zM350 53h1v1h-1zM351 53h1v1h-1zM352 53h1v1h-1zM353 53h1v1h-1zM354 53h1v1h-1zM355 53h1v1h-1zM340 54h1v1h-1zM342 54h1v1h-1zM343 54h1v1h-1zM344 54h1v1h-1zM345 54h1v1h-1zM346 54h1v1h-1zM347 54h1v1h-1zM348 54h1v1h-1zM349 54h1v1h-1zM350 54h1v1h-1zM351 54h1v1h-1zM353 54h1v1h-1zM355 54h1v1h-1zM340 55h1v1h-1zM341 55h1v1h-1zM342 55h1v1h-1zM343 55h1v1h-1zM344 55h1v1h-1zM345 55h1v1h-1zM346 55h1v1h-1zM347 55h1v1h-1zM348 55h1v1h-1zM349 55h1v1h-1zM350 55h1v1h-1zM351 55h1v1h-1zM352 55h1v1h-1zM353 55h1v1h-1zM354 55h1v1h-1zM355 55h1v1h-1zM340 56h1v1h-1zM355 56h1v1h-1zM340 57h1v1h-1zM355 57h1v1h-1zM340 58h1v1h-1zM355 58h1v1h-1zM340 59h1v1h-1zM355 59h1v1h-1zM340 60h1v1h-1zM341 60h1v1h-1zM342 60h1v1h-1zM343 60h1v1h-1zM344 60h1v1h-1zM345 60h1v1h-1zM346 60h1v1h-1zM347 60h1v1h-1zM348 60h1v1h-1zM349 60h1v1h-1zM350 60h1v1h-1zM351 60h1v1h-1zM352 60h1v1h-1zM353 60h1v1h-1zM354 60h1v1h-1zM355 60h1v1h-1z" fill="#000080"/></svg>
<svg style="position:absolute;left:0;top:0" width="1280" height="70" shape-rendering="crispEdges"><path d="M341 47h1v1h-1zM352 47h1v1h-1zM354 47h1v1h-1zM342 49h1v1h-1zM344 49h1v1h-1zM346 49h1v1h-1zM348 49h1v1h-1zM350 49h1v1h-1zM352 49h1v1h-1zM354 49h1v1h-1zM341 50h1v1h-1zM343 50h1v1h-1zM345 50h1v1h-1zM347 50h1v1h-1zM349 50h1v1h-1zM351 50h1v1h-1zM353 50h1v1h-1zM342 51h1v1h-1zM344 51h1v1h-1zM346 51h1v1h-1zM348 51h1v1h-1zM350 51h1v1h-1zM352 51h1v1h-1zM354 51h1v1h-1zM341 52h1v1h-1zM343 52h1v1h-1zM345 52h1v1h-1zM347 52h1v1h-1zM349 52h1v1h-1zM351 52h1v1h-1zM353 52h1v1h-1zM341 54h1v1h-1zM352 54h1v1h-1zM354 54h1v1h-1zM342 56h1v1h-1zM344 56h1v1h-1zM346 56h1v1h-1zM348 56h1v1h-1zM350 56h1v1h-1zM352 56h1v1h-1zM354 56h1v1h-1zM341 57h1v1h-1zM343 57h1v1h-1zM345 57h1v1h-1zM347 57h1v1h-1zM349 57h1v1h-1zM351 57h1v1h-1zM353 57h1v1h-1zM342 58h1v1h-1zM344 58h1v1h-1zM346 58h1v1h-1zM348 58h1v1h-1zM350 58h1v1h-1zM352 58h1v1h-1zM354 58h1v1h-1zM341 59h1v1h-1zM343 59h1v1h-1zM345 59h1v1h-1zM347 59h1v1h-1zM349 59h1v1h-1zM351 59h1v1h-1zM353 59h1v1h-1z" fill="#FFFFFF"/></svg>
<svg style="position:absolute;left:0;top:0" width="1280" height="70" shape-rendering="crispEdges"><path d="M341 49h1v1h-1zM343 49h1v1h-1zM345 49h1v1h-1zM347 49h1v1h-1zM349 49h1v1h-1zM351 49h1v1h-1zM353 49h1v1h-1zM342 50h1v1h-1zM344 50h1v1h-1zM346 50h1v1h-1zM348 50h1v1h-1zM350 50h1v1h-1zM352 50h1v1h-1zM354 50h1v1h-1zM341 51h1v1h-1zM343 51h1v1h-1zM345 51h1v1h-1zM347 51h1v1h-1zM349 51h1v1h-1zM351 51h1v1h-1zM353 51h1v1h-1zM342 52h1v1h-1zM344 52h1v1h-1zM346 52h1v1h-1zM348 52h1v1h-1zM350 52h1v1h-1zM352 52h1v1h-1zM354 52h1v1h-1zM341 56h1v1h-1zM343 56h1v1h-1zM345 56h1v1h-1zM347 56h1v1h-1zM349 56h1v1h-1zM351 56h1v1h-1zM353 56h1v1h-1zM342 57h1v1h-1zM344 57h1v1h-1zM346 57h1v1h-1zM348 57h1v1h-1zM350 57h1v1h-1zM352 57h1v1h-1zM354 57h1v1h-1zM341 58h1v1h-1zM343 58h1v1h-1zM345 58h1v1h-1zM347 58h1v1h-1zM349 58h1v1h-1zM351 58h1v1h-1zM353 58h1v1h-1zM342 59h1v1h-1zM344 59h1v1h-1zM346 59h1v1h-1zM348 59h1v1h-1zM350 59h1v1h-1zM352 59h1v1h-1zM354 59h1v1h-1z" fill="#C0C0C0"/></svg>
<svg style="position:absolute;left:0;top:0" width="1280" height="70" shape-rendering="crispEdges"><path d="M363 46h1v1h-1zM364 46h1v1h-1zM365 46h1v1h-1zM366 46h1v1h-1zM367 46h1v1h-1zM368 46h1v1h-1zM369 46h1v1h-1zM370 46h1v1h-1zM371 46h1v1h-1zM372 46h1v1h-1zM363 47h1v1h-1zM365 47h1v1h-1zM366 47h1v1h-1zM367 47h1v1h-1zM368 47h1v1h-1zM369 47h1v1h-1zM370 47h1v1h-1zM371 47h1v1h-1zM372 47h1v1h-1zM363 48h1v1h-1zM372 48h1v1h-1zM363 49h1v1h-1zM366 49h1v1h-1zM367 49h1v1h-1zM368 49h1v1h-1zM369 49h1v1h-1zM370 49h1v1h-1zM371 49h1v1h-1zM372 49h1v1h-1zM373 49h1v1h-1zM374 49h1v1h-1zM375 49h1v1h-1zM363 50h1v1h-1zM366 50h1v1h-1zM368 50h1v1h-1zM369 50h1v1h-1zM370 50h1v1h-1zM371 50h1v1h-1zM372 50h1v1h-1zM373 50h1v1h-1zM374 50h1v1h-1zM375 50h1v1h-1zM363 51h1v1h-1zM366 51h1v1h-1zM375 51h1v1h-1zM363 52h1v1h-1zM366 52h1v1h-1zM369 52h1v1h-1zM370 52h1v1h-1zM371 52h1v1h-1zM372 52h1v1h-1zM373 52h1v1h-1zM374 52h1v1h-1zM375 52h1v1h-1zM376 52h1v1h-1zM377 52h1v1h-1zM378 52h1v1h-1zM363 53h1v1h-1zM364 53h1v1h-1zM365 53h1v1h-1zM366 53h1v1h-1zM369 53h1v1h-1zM371 53h1v1h-1zM372 53h1v1h-1zM373 53h1v1h-1zM374 53h1v1h-1zM375 53h1v1h-1zM376 53h1v1h-1zM377 53h1v1h-1zM378 53h1v1h-1zM366 54h1v1h-1zM369 54h1v1h-1zM378 54h1v1h-1zM366 55h1v1h-1zM367 55h1v1h-1zM368 55h1v1h-1zM369 55h1v1h-1zM378 55h1v1h-1zM369 56h1v1h-1zM378 56h1v1h-1zM369 57h1v1h-1zM378 57h1v1h-1zM369 58h1v1h-1zM378 58h1v1h-1zM369 59h1v1h-1zM370 59h1v1h-1zM371 59h1v1h-1zM372 59h1v1h-1zM373 59h1v1h-1zM374 59h1v1h-1zM375 59h1v1h-1zM376 59h1v1h-1zM377 59h1v1h-1zM378 59h1v1h-1z" fill="#000080"/></svg>
<svg style="position:absolute;left:0;top:0" width="1280" height="70" shape-rendering="crispEdges"><path d="M364 47h1v1h-1zM365 48h1v1h-1zM367 48h1v1h-1zM369 48h1v1h-1zM371 48h1v1h-1zM364 49h1v1h-1zM367 50h1v1h-1zM364 51h1v1h-1zM368 51h1v1h-1zM370 51h1v1h-1zM372 51h1v1h-1zM374 51h1v1h-1zM367 52h1v1h-1zM370 53h1v1h-1zM367 54h1v1h-1zM371 54h1v1h-1zM373 54h1v1h-1zM375 54h1v1h-1zM377 54h1v1h-1zM370 55h1v1h-1zM372 55h1v1h-1zM374 55h1v1h-1zM376 55h1v1h-1zM371 56h1v1h-1zM373 56h1v1h-1zM375 56h1v1h-1zM377 56h1v1h-1zM370 57h1v1h-1zM372 57h1v1h-1zM374 57h1v1h-1zM376 57h1v1h-1zM371 58h1v1h-1zM373 58h1v1h-1zM375 58h1v1h-1zM377 58h1v1h-1z" fill="#FFFFFF"/></svg>
<svg style="position:absolute;left:0;top:0" width="1280" height="70" shape-rendering="crispEdges"><path d="M364 48h1v1h-1zM366 48h1v1h-1zM368 48h1v1h-1zM370 48h1v1h-1zM365 49h1v1h-1zM364 50h1v1h-1zM365 50h1v1h-1zM365 51h1v1h-1zM367 51h1v1h-1zM369 51h1v1h-1zM371 51h1v1h-1zM373 51h1v1h-1zM364 52h1v1h-1zM365 52h1v1h-1zM368 52h1v1h-1zM367 53h1v1h-1zM368 53h1v1h-1zM368 54h1v1h-1zM370 54h1v1h-1zM372 54h1v1h-1zM374 54h1v1h-1zM376 54h1v1h-1zM371 55h1v1h-1zM373 55h1v1h-1zM375 55h1v1h-1zM377 55h1v1h-1zM370 56h1v1h-1zM372 56h1v1h-1zM374 56h1v1h-1zM376 56h1v1h-1zM371 57h1v1h-1zM373 57h1v1h-1zM375 57h1v1h-1zM377 57h1v1h-1zM370 58h1v1h-1zM372 58h1v1h-1zM374 58h1v1h-1zM376 58h1v1h-1z" fill="#C0C0C0"/></svg>
<svg style="position:absolute;left:0;top:0" width="1280" height="70" shape-rendering="crispEdges"><path d="M386 46h1v1h-1zM387 46h1v1h-1zM388 46h1v1h-1zM389 46h1v1h-1zM390 46h1v1h-1zM391 46h1v1h-1zM392 46h1v1h-1zM393 46h1v1h-1zM386 47h1v1h-1zM388 47h1v1h-1zM389 47h1v1h-1zM390 47h1v1h-1zM391 47h1v1h-1zM392 47h1v1h-1zM393 47h1v1h-1zM386 48h1v1h-1zM393 48h1v1h-1zM386 49h1v1h-1zM389 49h1v1h-1zM390 49h1v1h-1zM391 49h1v1h-1zM392 49h1v1h-1zM393 49h1v1h-1zM394 49h1v1h-1zM395 49h1v1h-1zM396 49h1v1h-1zM386 50h1v1h-1zM389 50h1v1h-1zM391 50h1v1h-1zM392 50h1v1h-1zM393 50h1v1h-1zM394 50h1v1h-1zM395 50h1v1h-1zM396 50h1v1h-1zM386 51h1v1h-1zM389 51h1v1h-1zM396 51h1v1h-1zM386 52h1v1h-1zM387 52h1v1h-1zM389 52h1v1h-1zM392 52h1v1h-1zM393 52h1v1h-1zM394 52h1v1h-1zM395 52h1v1h-1zM396 52h1v1h-1zM397 52h1v1h-1zM398 52h1v1h-1zM399 52h1v1h-1zM389 53h1v1h-1zM392 53h1v1h-1zM394 53h1v1h-1zM395 53h1v1h-1zM396 53h1v1h-1zM397 53h1v1h-1zM398 53h1v1h-1zM399 53h1v1h-1zM389 54h1v1h-1zM392 54h1v1h-1zM399 54h1v1h-1zM389 55h1v1h-1zM390 55h1v1h-1zM392 55h1v1h-1zM399 55h1v1h-1zM392 56h1v1h-1zM399 56h1v1h-1zM392 57h1v1h-1zM399 57h1v1h-1zM392 58h1v1h-1zM393 58h1v1h-1zM394 58h1v1h-1zM395 58h1v1h-1zM396 58h1v1h-1zM397 58h1v1h-1zM398 58h1v1h-1zM399 58h1v1h-1z" fill="#000080"/></svg>
<svg style="position:absolute;left:0;top:0" width="1280" height="70" shape-rendering="crispEdges"><path d="M398 46h1v1h-1zM399 46h1v1h-1zM400 46h1v1h-1zM401 46h1v1h-1zM398 47h1v1h-1zM399 47h1v1h-1zM398 48h1v1h-1zM400 48h1v1h-1zM398 49h1v1h-1zM401 49h1v1h-1zM388 50h1v1h-1zM388 52h1v1h-1zM391 53h1v1h-1zM391 55h1v1h-1zM394 56h1v1h-1zM395 56h1v1h-1zM396 56h1v1h-1zM397 56h1v1h-1zM398 56h1v1h-1z" fill="#000000"/></svg>
<svg style="position:absolute;left:0;top:0" width="1280" height="70" shape-rendering="crispEdges"><path d="M387 47h1v1h-1zM388 48h1v1h-1zM390 48h1v1h-1zM392 48h1v1h-1zM387 49h1v1h-1zM390 50h1v1h-1zM387 51h1v1h-1zM391 51h1v1h-1zM393 51h1v1h-1zM395 51h1v1h-1zM390 52h1v1h-1zM393 53h1v1h-1zM390 54h1v1h-1zM394 54h1v1h-1zM396 54h1v1h-1zM398 54h1v1h-1zM393 55h1v1h-1zM395 55h1v1h-1zM397 55h1v1h-1zM393 57h1v1h-1zM395 57h1v1h-1zM397 57h1v1h-1z" fill="#FFFFFF"/></svg>
<svg style="position:absolute;left:0;top:0" width="1280" height="70" shape-rendering="crispEdges"><path d="M387 48h1v1h-1zM389 48h1v1h-1zM391 48h1v1h-1zM388 49h1v1h-1zM387 50h1v1h-1zM388 51h1v1h-1zM390 51h1v1h-1zM392 51h1v1h-1zM394 51h1v1h-1zM391 52h1v1h-1zM390 53h1v1h-1zM391 54h1v1h-1zM393 54h1v1h-1zM395 54h1v1h-1zM397 54h1v1h-1zM394 55h1v1h-1zM396 55h1v1h-1zM398 55h1v1h-1zM393 56h1v1h-1zM394 57h1v1h-1zM396 57h1v1h-1zM398 57h1v1h-1z" fill="#C0C0C0"/></svg>
<svg style="position:absolute;left:0;top:0" width="1280" height="70" shape-rendering="crispEdges"><path d="M422 46h1v1h-1zM427 46h1v1h-1zM422 47h1v1h-1zM427 47h1v1h-1zM423 48h1v1h-1zM426 48h1v1h-1zM423 49h1v1h-1zM426 49h1v1h-1zM424 50h1v1h-1zM425 50h1v1h-1zM424 51h1v1h-1zM425 51h1v1h-1zM423 52h1v1h-1zM426 52h1v1h-1z" fill="#000000"/></svg>
<svg style="position:absolute;left:0;top:0" width="1280" height="70" shape-rendering="crispEdges"><path d="M422 53h1v1h-1zM423 53h1v1h-1zM424 53h1v1h-1zM426 53h1v1h-1zM427 53h1v1h-1zM428 53h1v1h-1zM421 54h1v1h-1zM424 54h1v1h-1zM425 54h1v1h-1zM426 54h1v1h-1zM429 54h1v1h-1zM421 55h1v1h-1zM424 55h1v1h-1zM426 55h1v1h-1zM429 55h1v1h-1zM421 56h1v1h-1zM424 56h1v1h-1zM426 56h1v1h-1zM429 56h1v1h-1zM421 57h1v1h-1zM424 57h1v1h-1zM426 57h1v1h-1zM429 57h1v1h-1zM422 58h1v1h-1zM423 58h1v1h-1zM427 58h1v1h-1zM428 58h1v1h-1z" fill="#000080"/></svg>
<svg style="position:absolute;left:0;top:0" width="1280" height="70" shape-rendering="crispEdges"><path d="M441 46h1v1h-1zM442 46h1v1h-1zM443 46h1v1h-1zM444 46h1v1h-1zM445 46h1v1h-1zM446 46h1v1h-1zM441 47h1v1h-1zM446 47h1v1h-1zM447 47h1v1h-1zM441 48h1v1h-1zM443 48h1v1h-1zM444 48h1v1h-1zM448 48h1v1h-1zM441 49h1v1h-1zM441 50h1v1h-1zM443 50h1v1h-1zM444 50h1v1h-1zM445 50h1v1h-1zM441 51h1v1h-1zM448 51h1v1h-1zM449 51h1v1h-1zM441 52h1v1h-1zM443 52h1v1h-1zM444 52h1v1h-1zM445 52h1v1h-1zM441 53h1v1h-1zM448 53h1v1h-1zM449 53h1v1h-1zM450 53h1v1h-1zM441 54h1v1h-1zM442 54h1v1h-1zM443 54h1v1h-1zM444 54h1v1h-1zM445 54h1v1h-1zM448 55h1v1h-1zM449 55h1v1h-1zM450 55h1v1h-1z" fill="#000000"/></svg>
<svg style="position:absolute;left:0;top:0" width="1280" height="70" shape-rendering="crispEdges"><path d="M442 47h1v1h-1zM443 47h1v1h-1zM444 47h1v1h-1zM445 47h1v1h-1zM442 48h1v1h-1zM445 48h1v1h-1zM446 48h1v1h-1zM447 48h1v1h-1zM442 49h1v1h-1zM443 49h1v1h-1zM444 49h1v1h-1zM445 49h1v1h-1zM442 50h1v1h-1zM447 50h1v1h-1zM448 50h1v1h-1zM449 50h1v1h-1zM442 51h1v1h-1zM443 51h1v1h-1zM444 51h1v1h-1zM445 51h1v1h-1zM447 51h1v1h-1zM450 51h1v1h-1zM451 51h1v1h-1zM442 52h1v1h-1zM447 52h1v1h-1zM448 52h1v1h-1zM449 52h1v1h-1zM450 52h1v1h-1zM451 52h1v1h-1zM442 53h1v1h-1zM443 53h1v1h-1zM444 53h1v1h-1zM445 53h1v1h-1zM447 53h1v1h-1zM451 53h1v1h-1zM447 54h1v1h-1zM448 54h1v1h-1zM449 54h1v1h-1zM450 54h1v1h-1zM451 54h1v1h-1zM447 55h1v1h-1zM451 55h1v1h-1zM447 56h1v1h-1zM448 56h1v1h-1zM449 56h1v1h-1zM450 56h1v1h-1zM451 56h1v1h-1z" fill="#FFFFFF"/></svg>
<svg style="position:absolute;left:0;top:0" width="1280" height="70" shape-rendering="crispEdges"><path d="M446 49h1v1h-1zM447 49h1v1h-1zM448 49h1v1h-1zM449 49h1v1h-1zM450 49h1v1h-1zM446 50h1v1h-1zM450 50h1v1h-1zM451 50h1v1h-1zM446 51h1v1h-1zM452 51h1v1h-1zM446 52h1v1h-1zM452 52h1v1h-1zM446 53h1v1h-1zM452 53h1v1h-1zM446 54h1v1h-1zM452 54h1v1h-1zM446 55h1v1h-1zM452 55h1v1h-1zM446 56h1v1h-1zM452 56h1v1h-1zM446 57h1v1h-1zM447 57h1v1h-1zM448 57h1v1h-1zM449 57h1v1h-1zM450 57h1v1h-1zM451 57h1v1h-1zM452 57h1v1h-1z" fill="#000080"/></svg>
<svg style="position:absolute;left:0;top:0" width="1280" height="70" shape-rendering="crispEdges"><path d="M466 47h1v1h-1zM468 47h1v1h-1zM470 47h1v1h-1zM472 47h1v1h-1zM474 47h1v1h-1zM465 48h1v1h-1zM467 48h1v1h-1zM469 48h1v1h-1zM471 48h1v1h-1zM473 48h1v1h-1zM475 48h1v1h-1zM464 49h1v1h-1zM466 49h1v1h-1zM474 49h1v1h-1zM465 50h1v1h-1zM467 50h1v1h-1zM469 50h1v1h-1zM471 50h1v1h-1zM473 50h1v1h-1zM475 50h1v1h-1zM464 51h1v1h-1zM466 51h1v1h-1zM468 51h1v1h-1zM470 51h1v1h-1zM472 51h1v1h-1zM474 51h1v1h-1zM465 52h1v1h-1zM467 52h1v1h-1zM469 52h1v1h-1zM471 52h1v1h-1zM473 52h1v1h-1zM475 52h1v1h-1zM464 53h1v1h-1zM466 53h1v1h-1zM468 53h1v1h-1zM470 53h1v1h-1zM471 53h1v1h-1zM472 53h1v1h-1zM473 53h1v1h-1zM474 53h1v1h-1zM475 53h1v1h-1zM476 53h1v1h-1zM477 53h1v1h-1zM465 54h1v1h-1zM467 54h1v1h-1zM469 54h1v1h-1zM471 54h1v1h-1zM477 54h1v1h-1zM464 55h1v1h-1zM466 55h1v1h-1zM468 55h1v1h-1zM470 55h1v1h-1zM471 55h1v1h-1zM472 55h1v1h-1zM473 55h1v1h-1zM474 55h1v1h-1zM475 55h1v1h-1zM476 55h1v1h-1zM477 55h1v1h-1zM465 56h1v1h-1zM467 56h1v1h-1zM469 56h1v1h-1zM471 56h1v1h-1zM477 56h1v1h-1zM464 57h1v1h-1zM466 57h1v1h-1zM468 57h1v1h-1zM470 57h1v1h-1zM471 57h1v1h-1zM472 57h1v1h-1zM473 57h1v1h-1zM474 57h1v1h-1zM475 57h1v1h-1zM476 57h1v1h-1zM477 57h1v1h-1zM465 58h1v1h-1zM467 58h1v1h-1zM469 58h1v1h-1zM471 58h1v1h-1zM477 58h1v1h-1zM471 59h1v1h-1zM472 59h1v1h-1zM473 59h1v1h-1zM474 59h1v1h-1zM475 59h1v1h-1zM476 59h1v1h-1zM477 59h1v1h-1z" fill="#808080"/></svg>
<svg style="position:absolute;left:0;top:0" width="1280" height="70" shape-rendering="crispEdges"><path d="M467 47h1v1h-1zM469 47h1v1h-1zM471 47h1v1h-1zM473 47h1v1h-1zM466 48h1v1h-1zM468 48h1v1h-1zM470 48h1v1h-1zM472 48h1v1h-1zM474 48h1v1h-1zM465 49h1v1h-1zM473 49h1v1h-1zM475 49h1v1h-1zM464 50h1v1h-1zM466 50h1v1h-1zM468 50h1v1h-1zM470 50h1v1h-1zM472 50h1v1h-1zM474 50h1v1h-1zM465 51h1v1h-1zM467 51h1v1h-1zM469 51h1v1h-1zM471 51h1v1h-1zM473 51h1v1h-1zM475 51h1v1h-1zM464 52h1v1h-1zM466 52h1v1h-1zM468 52h1v1h-1zM470 52h1v1h-1zM472 52h1v1h-1zM474 52h1v1h-1zM465 53h1v1h-1zM467 53h1v1h-1zM469 53h1v1h-1zM464 54h1v1h-1zM466 54h1v1h-1zM468 54h1v1h-1zM470 54h1v1h-1zM465 55h1v1h-1zM467 55h1v1h-1zM469 55h1v1h-1zM464 56h1v1h-1zM466 56h1v1h-1zM468 56h1v1h-1zM470 56h1v1h-1zM465 57h1v1h-1zM467 57h1v1h-1zM469 57h1v1h-1zM464 58h1v1h-1zM466 58h1v1h-1zM468 58h1v1h-1zM470 58h1v1h-1z" fill="#C0C0C0"/></svg>
<svg style="position:absolute;left:0;top:0" width="1280" height="70" shape-rendering="crispEdges"><path d="M467 49h1v1h-1zM468 49h1v1h-1zM469 49h1v1h-1zM470 49h1v1h-1zM471 49h1v1h-1zM472 49h1v1h-1zM472 54h1v1h-1zM473 54h1v1h-1zM474 54h1v1h-1zM475 54h1v1h-1zM476 54h1v1h-1zM478 55h1v1h-1zM472 56h1v1h-1zM473 56h1v1h-1zM474 56h1v1h-1zM475 56h1v1h-1zM476 56h1v1h-1zM478 56h1v1h-1zM478 57h1v1h-1zM472 58h1v1h-1zM473 58h1v1h-1zM474 58h1v1h-1zM475 58h1v1h-1zM476 58h1v1h-1zM478 58h1v1h-1zM466 59h1v1h-1zM467 59h1v1h-1zM468 59h1v1h-1zM469 59h1v1h-1zM470 59h1v1h-1zM478 59h1v1h-1zM472 60h1v1h-1zM473 60h1v1h-1zM474 60h1v1h-1zM475 60h1v1h-1zM476 60h1v1h-1zM477 60h1v1h-1zM478 60h1v1h-1z" fill="#FFFFFF"/></svg>
<svg style="position:absolute;left:0;top:0" width="1280" height="70" shape-rendering="crispEdges"><path d="M490 47h1v1h-1zM491 47h1v1h-1zM492 47h1v1h-1zM496 47h1v1h-1zM497 47h1v1h-1zM498 47h1v1h-1zM489 48h1v1h-1zM491 48h1v1h-1zM492 48h1v1h-1zM495 48h1v1h-1zM497 48h1v1h-1zM498 48h1v1h-1zM489 49h1v1h-1zM490 49h1v1h-1zM491 49h1v1h-1zM492 49h1v1h-1zM493 49h1v1h-1zM495 49h1v1h-1zM496 49h1v1h-1zM497 49h1v1h-1zM498 49h1v1h-1zM488 50h1v1h-1zM489 50h1v1h-1zM490 50h1v1h-1zM491 50h1v1h-1zM492 50h1v1h-1zM493 50h1v1h-1zM495 50h1v1h-1zM496 50h1v1h-1zM497 50h1v1h-1zM498 50h1v1h-1zM499 50h1v1h-1zM488 51h1v1h-1zM489 51h1v1h-1zM490 51h1v1h-1zM491 51h1v1h-1zM492 51h1v1h-1zM493 51h1v1h-1zM494 51h1v1h-1zM495 51h1v1h-1zM496 51h1v1h-1zM497 51h1v1h-1zM498 51h1v1h-1zM499 51h1v1h-1zM500 51h1v1h-1zM487 52h1v1h-1zM488 52h1v1h-1zM490 52h1v1h-1zM491 52h1v1h-1zM493 52h1v1h-1zM494 52h1v1h-1zM496 52h1v1h-1zM497 52h1v1h-1zM499 52h1v1h-1zM500 52h1v1h-1zM501 52h1v1h-1zM487 53h1v1h-1zM488 53h1v1h-1zM490 53h1v1h-1zM491 53h1v1h-1zM493 53h1v1h-1zM494 53h1v1h-1zM496 53h1v1h-1zM497 53h1v1h-1zM499 53h1v1h-1zM500 53h1v1h-1zM501 53h1v1h-1zM487 54h1v1h-1zM488 54h1v1h-1zM490 54h1v1h-1zM491 54h1v1h-1zM492 54h1v1h-1zM493 54h1v1h-1zM494 54h1v1h-1zM495 54h1v1h-1zM496 54h1v1h-1zM497 54h1v1h-1zM499 54h1v1h-1zM500 54h1v1h-1zM501 54h1v1h-1zM487 55h1v1h-1zM488 55h1v1h-1zM489 55h1v1h-1zM490 55h1v1h-1zM491 55h1v1h-1zM492 55h1v1h-1zM493 55h1v1h-1zM494 55h1v1h-1zM495 55h1v1h-1zM496 55h1v1h-1zM497 55h1v1h-1zM498 55h1v1h-1zM499 55h1v1h-1zM500 55h1v1h-1zM501 55h1v1h-1zM487 56h1v1h-1zM488 56h1v1h-1zM489 56h1v1h-1zM490 56h1v1h-1zM491 56h1v1h-1zM492 56h1v1h-1zM493 56h1v1h-1zM494 56h1v1h-1zM495 56h1v1h-1zM496 56h1v1h-1zM497 56h1v1h-1zM498 56h1v1h-1zM499 56h1v1h-1zM500 56h1v1h-1zM501 56h1v1h-1zM487 57h1v1h-1zM488 57h1v1h-1zM490 57h1v1h-1zM491 57h1v1h-1zM492 57h1v1h-1zM493 57h1v1h-1zM495 57h1v1h-1zM496 57h1v1h-1zM497 57h1v1h-1zM498 57h1v1h-1zM500 57h1v1h-1zM501 57h1v1h-1zM487 58h1v1h-1zM488 58h1v1h-1zM490 58h1v1h-1zM491 58h1v1h-1zM492 58h1v1h-1zM493 58h1v1h-1zM495 58h1v1h-1zM496 58h1v1h-1zM497 58h1v1h-1zM498 58h1v1h-1zM500 58h1v1h-1zM501 58h1v1h-1zM487 59h1v1h-1zM488 59h1v1h-1zM489 59h1v1h-1zM490 59h1v1h-1zM491 59h1v1h-1zM492 59h1v1h-1zM493 59h1v1h-1zM495 59h1v1h-1zM496 59h1v1h-1zM497 59h1v1h-1zM498 59h1v1h-1zM499 59h1v1h-1zM500 59h1v1h-1zM501 59h1v1h-1zM487 60h1v1h-1zM488 60h1v1h-1zM489 60h1v1h-1zM490 60h1v1h-1zM491 60h1v1h-1zM492 60h1v1h-1zM493 60h1v1h-1zM495 60h1v1h-1zM496 60h1v1h-1zM497 60h1v1h-1zM498 60h1v1h-1zM499 60h1v1h-1zM500 60h1v1h-1zM501 60h1v1h-1z" fill="#000000"/></svg>
<svg style="position:absolute;left:0;top:0" width="1280" height="70" shape-rendering="crispEdges"><path d="M490 48h1v1h-1zM496 48h1v1h-1zM489 52h1v1h-1zM492 52h1v1h-1zM495 52h1v1h-1zM498 52h1v1h-1zM489 53h1v1h-1zM492 53h1v1h-1zM495 53h1v1h-1zM498 53h1v1h-1zM489 54h1v1h-1zM498 54h1v1h-1zM489 57h1v1h-1zM499 57h1v1h-1zM489 58h1v1h-1zM499 58h1v1h-1z" fill="#FFFFFF"/></svg>
<svg style="position:absolute;left:0;top:0" width="1280" height="70" shape-rendering="crispEdges"><path d="M522 47h1v1h-1zM523 47h1v1h-1zM524 47h1v1h-1zM525 47h1v1h-1zM526 47h1v1h-1zM527 47h1v1h-1zM528 47h1v1h-1zM529 47h1v1h-1zM530 47h1v1h-1zM522 48h1v1h-1zM525 48h1v1h-1zM530 48h1v1h-1zM522 49h1v1h-1zM526 49h1v1h-1zM529 49h1v1h-1zM531 49h1v1h-1zM522 50h1v1h-1zM531 50h1v1h-1zM520 51h1v1h-1zM521 51h1v1h-1zM522 51h1v1h-1zM523 51h1v1h-1zM524 51h1v1h-1zM525 51h1v1h-1zM526 51h1v1h-1zM527 51h1v1h-1zM528 51h1v1h-1zM529 51h1v1h-1zM530 51h1v1h-1zM531 51h1v1h-1zM519 52h1v1h-1zM521 52h1v1h-1zM522 52h1v1h-1zM523 52h1v1h-1zM524 52h1v1h-1zM525 52h1v1h-1zM526 52h1v1h-1zM527 52h1v1h-1zM528 52h1v1h-1zM529 52h1v1h-1zM530 52h1v1h-1zM531 52h1v1h-1zM532 52h1v1h-1zM518 53h1v1h-1zM532 53h1v1h-1zM518 54h1v1h-1zM532 54h1v1h-1zM518 55h1v1h-1zM532 55h1v1h-1zM518 56h1v1h-1zM532 56h1v1h-1zM518 57h1v1h-1zM532 57h1v1h-1zM518 58h1v1h-1zM532 58h1v1h-1zM518 59h1v1h-1zM519 59h1v1h-1zM520 59h1v1h-1zM521 59h1v1h-1zM522 59h1v1h-1zM523 59h1v1h-1zM524 59h1v1h-1zM525 59h1v1h-1zM526 59h1v1h-1zM527 59h1v1h-1zM528 59h1v1h-1zM529 59h1v1h-1zM530 59h1v1h-1zM531 59h1v1h-1zM532 59h1v1h-1zM522 60h1v1h-1zM523 60h1v1h-1zM524 60h1v1h-1zM525 60h1v1h-1zM526 60h1v1h-1zM527 60h1v1h-1zM528 60h1v1h-1zM529 60h1v1h-1zM530 60h1v1h-1z" fill="#000000"/></svg>
<svg style="position:absolute;left:0;top:0" width="1280" height="70" shape-rendering="crispEdges"><path d="M523 48h1v1h-1zM524 48h1v1h-1zM526 48h1v1h-1zM527 48h1v1h-1zM528 48h1v1h-1zM529 48h1v1h-1zM523 49h1v1h-1zM524 49h1v1h-1zM525 49h1v1h-1zM527 49h1v1h-1zM528 49h1v1h-1zM530 49h1v1h-1zM523 50h1v1h-1zM524 50h1v1h-1zM525 50h1v1h-1zM526 50h1v1h-1zM527 50h1v1h-1zM528 50h1v1h-1zM529 50h1v1h-1zM530 50h1v1h-1zM520 52h1v1h-1zM519 53h1v1h-1zM520 53h1v1h-1zM522 53h1v1h-1zM524 53h1v1h-1zM526 53h1v1h-1zM528 53h1v1h-1zM530 53h1v1h-1zM531 53h1v1h-1zM519 54h1v1h-1zM521 54h1v1h-1zM523 54h1v1h-1zM525 54h1v1h-1zM527 54h1v1h-1zM529 54h1v1h-1zM531 54h1v1h-1zM519 55h1v1h-1zM520 55h1v1h-1zM522 55h1v1h-1zM524 55h1v1h-1zM526 55h1v1h-1zM528 55h1v1h-1zM530 55h1v1h-1zM531 55h1v1h-1zM519 56h1v1h-1zM521 56h1v1h-1zM523 56h1v1h-1zM525 56h1v1h-1zM527 56h1v1h-1zM529 56h1v1h-1zM531 56h1v1h-1zM519 57h1v1h-1zM520 57h1v1h-1zM522 57h1v1h-1zM524 57h1v1h-1zM526 57h1v1h-1zM528 57h1v1h-1zM530 57h1v1h-1zM531 57h1v1h-1zM519 58h1v1h-1zM520 58h1v1h-1zM521 58h1v1h-1zM522 58h1v1h-1zM523 58h1v1h-1zM524 58h1v1h-1zM525 58h1v1h-1zM526 58h1v1h-1zM527 58h1v1h-1zM528 58h1v1h-1zM529 58h1v1h-1zM530 58h1v1h-1zM531 58h1v1h-1z" fill="#FFFFFF"/></svg>
<svg style="position:absolute;left:0;top:0" width="1280" height="70" shape-rendering="crispEdges"><path d="M521 53h1v1h-1zM523 53h1v1h-1zM525 53h1v1h-1zM527 53h1v1h-1zM529 53h1v1h-1zM520 54h1v1h-1zM522 54h1v1h-1zM524 54h1v1h-1zM526 54h1v1h-1zM528 54h1v1h-1zM530 54h1v1h-1zM521 55h1v1h-1zM523 55h1v1h-1zM525 55h1v1h-1zM527 55h1v1h-1zM529 55h1v1h-1zM520 56h1v1h-1zM522 56h1v1h-1zM524 56h1v1h-1zM526 56h1v1h-1zM528 56h1v1h-1zM530 56h1v1h-1zM521 57h1v1h-1zM523 57h1v1h-1zM525 57h1v1h-1zM527 57h1v1h-1zM529 57h1v1h-1z" fill="#808080"/></svg>
<svg style="position:absolute;left:0;top:0" width="1280" height="70" shape-rendering="crispEdges"><path d="M545 46h1v1h-1zM546 46h1v1h-1zM547 46h1v1h-1zM548 46h1v1h-1zM549 46h1v1h-1zM550 46h1v1h-1zM551 46h1v1h-1zM552 46h1v1h-1zM553 46h1v1h-1zM554 46h1v1h-1zM544 47h1v1h-1zM554 47h1v1h-1zM544 48h1v1h-1zM546 48h1v1h-1zM547 48h1v1h-1zM548 48h1v1h-1zM549 48h1v1h-1zM550 48h1v1h-1zM551 48h1v1h-1zM554 48h1v1h-1zM543 49h1v1h-1zM553 49h1v1h-1zM554 49h1v1h-1zM543 50h1v1h-1zM545 50h1v1h-1zM546 50h1v1h-1zM547 50h1v1h-1zM548 50h1v1h-1zM549 50h1v1h-1zM550 50h1v1h-1zM551 50h1v1h-1zM553 50h1v1h-1zM555 50h1v1h-1zM542 51h1v1h-1zM543 51h1v1h-1zM544 51h1v1h-1zM545 51h1v1h-1zM546 51h1v1h-1zM547 51h1v1h-1zM548 51h1v1h-1zM549 51h1v1h-1zM550 51h1v1h-1zM551 51h1v1h-1zM552 51h1v1h-1zM553 51h1v1h-1zM555 51h1v1h-1zM541 52h1v1h-1zM553 52h1v1h-1zM555 52h1v1h-1zM540 53h1v1h-1zM541 53h1v1h-1zM542 53h1v1h-1zM543 53h1v1h-1zM544 53h1v1h-1zM545 53h1v1h-1zM546 53h1v1h-1zM547 53h1v1h-1zM548 53h1v1h-1zM549 53h1v1h-1zM550 53h1v1h-1zM551 53h1v1h-1zM552 53h1v1h-1zM553 53h1v1h-1zM554 53h1v1h-1zM555 53h1v1h-1zM540 54h1v1h-1zM554 54h1v1h-1zM540 55h1v1h-1zM554 55h1v1h-1zM540 56h1v1h-1zM541 56h1v1h-1zM542 56h1v1h-1zM543 56h1v1h-1zM544 56h1v1h-1zM545 56h1v1h-1zM546 56h1v1h-1zM547 56h1v1h-1zM548 56h1v1h-1zM549 56h1v1h-1zM550 56h1v1h-1zM551 56h1v1h-1zM552 56h1v1h-1zM553 56h1v1h-1zM554 56h1v1h-1zM541 57h1v1h-1zM553 57h1v1h-1zM542 58h1v1h-1zM543 58h1v1h-1zM544 58h1v1h-1zM545 58h1v1h-1zM546 58h1v1h-1zM547 58h1v1h-1zM548 58h1v1h-1zM549 58h1v1h-1zM550 58h1v1h-1zM551 58h1v1h-1zM552 58h1v1h-1zM553 58h1v1h-1z" fill="#000000"/></svg>
<svg style="position:absolute;left:0;top:0" width="1280" height="70" shape-rendering="crispEdges"><path d="M545 47h1v1h-1zM546 47h1v1h-1zM547 47h1v1h-1zM548 47h1v1h-1zM549 47h1v1h-1zM550 47h1v1h-1zM551 47h1v1h-1zM552 47h1v1h-1zM553 47h1v1h-1zM545 48h1v1h-1zM552 48h1v1h-1zM553 48h1v1h-1zM544 49h1v1h-1zM545 49h1v1h-1zM546 49h1v1h-1zM547 49h1v1h-1zM548 49h1v1h-1zM549 49h1v1h-1zM550 49h1v1h-1zM551 49h1v1h-1zM552 49h1v1h-1zM544 50h1v1h-1zM552 50h1v1h-1zM554 50h1v1h-1zM541 54h1v1h-1zM543 54h1v1h-1zM545 54h1v1h-1zM547 54h1v1h-1zM551 54h1v1h-1zM553 54h1v1h-1zM542 55h1v1h-1zM544 55h1v1h-1zM546 55h1v1h-1zM550 55h1v1h-1zM552 55h1v1h-1zM542 57h1v1h-1zM544 57h1v1h-1zM546 57h1v1h-1zM548 57h1v1h-1zM550 57h1v1h-1zM552 57h1v1h-1z" fill="#FFFFFF"/></svg>
<svg style="position:absolute;left:0;top:0" width="1280" height="70" shape-rendering="crispEdges"><path d="M554 51h1v1h-1zM542 52h1v1h-1zM543 52h1v1h-1zM544 52h1v1h-1zM545 52h1v1h-1zM546 52h1v1h-1zM547 52h1v1h-1zM548 52h1v1h-1zM549 52h1v1h-1zM550 52h1v1h-1zM551 52h1v1h-1zM552 52h1v1h-1zM542 54h1v1h-1zM544 54h1v1h-1zM546 54h1v1h-1zM550 54h1v1h-1zM552 54h1v1h-1zM541 55h1v1h-1zM543 55h1v1h-1zM545 55h1v1h-1zM547 55h1v1h-1zM551 55h1v1h-1zM553 55h1v1h-1zM543 57h1v1h-1zM545 57h1v1h-1zM547 57h1v1h-1zM549 57h1v1h-1zM551 57h1v1h-1z" fill="#C0C0C0"/></svg>
<svg style="position:absolute;left:0;top:0" width="1280" height="70" shape-rendering="crispEdges"><path d="M554 52h1v1h-1z" fill="#808080"/></svg>
<svg style="position:absolute;left:0;top:0" width="1280" height="70" shape-rendering="crispEdges"><path d="M548 54h1v1h-1zM549 54h1v1h-1zM548 55h1v1h-1zM549 55h1v1h-1z" fill="#FFFF00"/></svg>
<svg style="position:absolute;left:0;top:0" width="1280" height="70" shape-rendering="crispEdges"><path d="M758 46h1v1h-1zM759 46h1v1h-1zM766 46h1v1h-1zM767 46h1v1h-1zM757 47h1v1h-1zM759 47h1v1h-1zM765 47h1v1h-1zM767 47h1v1h-1zM757 48h1v1h-1zM760 48h1v1h-1zM764 48h1v1h-1zM766 48h1v1h-1zM768 48h1v1h-1zM758 49h1v1h-1zM760 49h1v1h-1zM763 49h1v1h-1zM765 49h1v1h-1zM766 49h1v1h-1zM768 49h1v1h-1zM759 50h1v1h-1zM761 50h1v1h-1zM762 50h1v1h-1zM764 50h1v1h-1zM766 50h1v1h-1zM768 50h1v1h-1zM769 50h1v1h-1zM759 51h1v1h-1zM761 51h1v1h-1zM763 51h1v1h-1zM765 51h1v1h-1zM767 51h1v1h-1zM769 51h1v1h-1zM756 52h1v1h-1zM757 52h1v1h-1zM759 52h1v1h-1zM761 52h1v1h-1zM763 52h1v1h-1zM765 52h1v1h-1zM767 52h1v1h-1zM769 52h1v1h-1zM755 53h1v1h-1zM758 53h1v1h-1zM759 53h1v1h-1zM769 53h1v1h-1zM755 54h1v1h-1zM759 54h1v1h-1zM769 54h1v1h-1zM756 55h1v1h-1zM769 55h1v1h-1zM757 56h1v1h-1zM769 56h1v1h-1zM758 57h1v1h-1zM768 57h1v1h-1zM759 58h1v1h-1zM768 58h1v1h-1zM760 59h1v1h-1zM767 59h1v1h-1zM761 60h1v1h-1zM762 60h1v1h-1zM763 60h1v1h-1zM764 60h1v1h-1zM765 60h1v1h-1zM766 60h1v1h-1zM767 60h1v1h-1z" fill="#808080"/></svg>
<svg style="position:absolute;left:0;top:0" width="1280" height="70" shape-rendering="crispEdges"><path d="M758 47h1v1h-1zM766 47h1v1h-1zM758 48h1v1h-1zM759 48h1v1h-1zM765 48h1v1h-1zM767 48h1v1h-1zM759 49h1v1h-1zM764 49h1v1h-1zM767 49h1v1h-1zM760 50h1v1h-1zM763 50h1v1h-1zM765 50h1v1h-1zM767 50h1v1h-1zM760 51h1v1h-1zM762 51h1v1h-1zM764 51h1v1h-1zM766 51h1v1h-1zM768 51h1v1h-1zM760 52h1v1h-1zM762 52h1v1h-1zM764 52h1v1h-1zM766 52h1v1h-1zM768 52h1v1h-1zM756 53h1v1h-1zM757 53h1v1h-1zM760 53h1v1h-1zM761 53h1v1h-1zM762 53h1v1h-1zM763 53h1v1h-1zM764 53h1v1h-1zM765 53h1v1h-1zM766 53h1v1h-1zM767 53h1v1h-1zM768 53h1v1h-1zM770 53h1v1h-1zM756 54h1v1h-1zM757 54h1v1h-1zM758 54h1v1h-1zM760 54h1v1h-1zM761 54h1v1h-1zM762 54h1v1h-1zM763 54h1v1h-1zM764 54h1v1h-1zM765 54h1v1h-1zM766 54h1v1h-1zM767 54h1v1h-1zM768 54h1v1h-1zM770 54h1v1h-1zM757 55h1v1h-1zM758 55h1v1h-1zM759 55h1v1h-1zM760 55h1v1h-1zM761 55h1v1h-1zM762 55h1v1h-1zM763 55h1v1h-1zM764 55h1v1h-1zM765 55h1v1h-1zM766 55h1v1h-1zM767 55h1v1h-1zM768 55h1v1h-1zM770 55h1v1h-1zM758 56h1v1h-1zM759 56h1v1h-1zM760 56h1v1h-1zM761 56h1v1h-1zM762 56h1v1h-1zM763 56h1v1h-1zM764 56h1v1h-1zM765 56h1v1h-1zM766 56h1v1h-1zM767 56h1v1h-1zM768 56h1v1h-1zM770 56h1v1h-1zM759 57h1v1h-1zM760 57h1v1h-1zM761 57h1v1h-1zM762 57h1v1h-1zM763 57h1v1h-1zM764 57h1v1h-1zM765 57h1v1h-1zM766 57h1v1h-1zM767 57h1v1h-1zM769 57h1v1h-1zM760 58h1v1h-1zM761 58h1v1h-1zM762 58h1v1h-1zM763 58h1v1h-1zM764 58h1v1h-1zM765 58h1v1h-1zM766 58h1v1h-1zM767 58h1v1h-1zM769 58h1v1h-1zM761 59h1v1h-1zM762 59h1v1h-1zM763 59h1v1h-1zM764 59h1v1h-1zM765 59h1v1h-1zM766 59h1v1h-1zM768 59h1v1h-1zM768 60h1v1h-1zM762 61h1v1h-1zM763 61h1v1h-1zM764 61h1v1h-1zM765 61h1v1h-1zM766 61h1v1h-1zM767 61h1v1h-1z" fill="#FFFFFF"/></svg>
<svg style="position:absolute;left:0;top:0" width="1280" height="70" shape-rendering="crispEdges"><path d="M783 48h1v1h-1zM787 48h1v1h-1zM782 49h1v1h-1zM784 49h1v1h-1zM786 49h1v1h-1zM788 49h1v1h-1zM782 50h1v1h-1zM784 50h1v1h-1zM785 50h1v1h-1zM787 50h1v1h-1zM789 50h1v1h-1zM790 50h1v1h-1zM781 51h1v1h-1zM783 51h1v1h-1zM785 51h1v1h-1zM787 51h1v1h-1zM789 51h1v1h-1zM791 51h1v1h-1zM780 52h1v1h-1zM783 52h1v1h-1zM785 52h1v1h-1zM787 52h1v1h-1zM789 52h1v1h-1zM791 52h1v1h-1zM779 53h1v1h-1zM791 53h1v1h-1zM780 54h1v1h-1zM791 54h1v1h-1zM781 55h1v1h-1zM791 55h1v1h-1zM782 56h1v1h-1zM790 56h1v1h-1zM782 57h1v1h-1zM789 57h1v1h-1zM782 58h1v1h-1zM789 58h1v1h-1zM782 59h1v1h-1zM783 59h1v1h-1zM784 59h1v1h-1zM785 59h1v1h-1zM786 59h1v1h-1zM787 59h1v1h-1zM788 59h1v1h-1zM789 59h1v1h-1z" fill="#808080"/></svg>
<svg style="position:absolute;left:0;top:0" width="1280" height="70" shape-rendering="crispEdges"><path d="M783 49h1v1h-1zM787 49h1v1h-1zM783 50h1v1h-1zM786 50h1v1h-1zM788 50h1v1h-1zM782 51h1v1h-1zM784 51h1v1h-1zM786 51h1v1h-1zM788 51h1v1h-1zM790 51h1v1h-1zM781 52h1v1h-1zM782 52h1v1h-1zM784 52h1v1h-1zM786 52h1v1h-1zM788 52h1v1h-1zM790 52h1v1h-1zM792 52h1v1h-1zM780 53h1v1h-1zM781 53h1v1h-1zM782 53h1v1h-1zM783 53h1v1h-1zM784 53h1v1h-1zM785 53h1v1h-1zM786 53h1v1h-1zM787 53h1v1h-1zM788 53h1v1h-1zM789 53h1v1h-1zM790 53h1v1h-1zM792 53h1v1h-1zM781 54h1v1h-1zM782 54h1v1h-1zM783 54h1v1h-1zM784 54h1v1h-1zM785 54h1v1h-1zM786 54h1v1h-1zM787 54h1v1h-1zM788 54h1v1h-1zM789 54h1v1h-1zM790 54h1v1h-1zM792 54h1v1h-1zM782 55h1v1h-1zM783 55h1v1h-1zM784 55h1v1h-1zM785 55h1v1h-1zM786 55h1v1h-1zM787 55h1v1h-1zM788 55h1v1h-1zM789 55h1v1h-1zM790 55h1v1h-1zM792 55h1v1h-1zM783 56h1v1h-1zM784 56h1v1h-1zM785 56h1v1h-1zM786 56h1v1h-1zM787 56h1v1h-1zM788 56h1v1h-1zM789 56h1v1h-1zM791 56h1v1h-1zM783 57h1v1h-1zM784 57h1v1h-1zM785 57h1v1h-1zM786 57h1v1h-1zM787 57h1v1h-1zM788 57h1v1h-1zM790 57h1v1h-1zM783 58h1v1h-1zM784 58h1v1h-1zM785 58h1v1h-1zM786 58h1v1h-1zM787 58h1v1h-1zM788 58h1v1h-1zM790 58h1v1h-1zM790 59h1v1h-1zM783 60h1v1h-1zM784 60h1v1h-1zM785 60h1v1h-1zM786 60h1v1h-1zM787 60h1v1h-1zM788 60h1v1h-1zM789 60h1v1h-1zM790 60h1v1h-1z" fill="#FFFFFF"/></svg>
<svg style="position:absolute;left:0;top:0" width="1280" height="70" shape-rendering="crispEdges"><path d="M808 48h1v1h-1zM809 48h1v1h-1zM810 48h1v1h-1zM806 49h1v1h-1zM807 49h1v1h-1zM812 49h1v1h-1zM805 50h1v1h-1zM813 50h1v1h-1zM802 51h1v1h-1zM804 51h1v1h-1zM814 51h1v1h-1zM802 52h1v1h-1zM806 52h1v1h-1zM814 52h1v1h-1zM802 53h1v1h-1zM803 53h1v1h-1zM806 53h1v1h-1zM815 53h1v1h-1zM802 54h1v1h-1zM803 54h1v1h-1zM804 54h1v1h-1zM815 54h1v1h-1zM814 55h1v1h-1zM814 56h1v1h-1zM813 57h1v1h-1zM807 58h1v1h-1zM812 58h1v1h-1zM813 58h1v1h-1zM808 59h1v1h-1zM809 59h1v1h-1zM810 59h1v1h-1zM811 59h1v1h-1z" fill="#000000"/></svg>
<svg style="position:absolute;left:0;top:0" width="1280" height="70" shape-rendering="crispEdges"><path d="M808 49h1v1h-1zM809 49h1v1h-1zM810 49h1v1h-1zM811 49h1v1h-1zM806 50h1v1h-1zM807 50h1v1h-1zM812 50h1v1h-1zM805 51h1v1h-1zM813 51h1v1h-1zM804 52h1v1h-1z" fill="#FFFF00"/></svg>
<svg style="position:absolute;left:0;top:0" width="1280" height="70" shape-rendering="crispEdges"><path d="M832 48h1v1h-1zM833 48h1v1h-1zM834 48h1v1h-1zM831 49h1v1h-1zM835 49h1v1h-1zM836 49h1v1h-1zM837 49h1v1h-1zM830 50h1v1h-1zM837 50h1v1h-1zM838 50h1v1h-1zM829 51h1v1h-1zM838 51h1v1h-1zM840 51h1v1h-1zM828 52h1v1h-1zM837 52h1v1h-1zM840 52h1v1h-1zM828 53h1v1h-1zM837 53h1v1h-1zM838 53h1v1h-1zM840 53h1v1h-1zM827 54h1v1h-1zM838 54h1v1h-1zM839 54h1v1h-1zM827 55h1v1h-1zM837 55h1v1h-1zM827 56h1v1h-1zM837 56h1v1h-1zM828 57h1v1h-1zM836 57h1v1h-1zM829 58h1v1h-1zM835 58h1v1h-1zM836 58h1v1h-1zM830 59h1v1h-1zM831 59h1v1h-1zM832 59h1v1h-1zM833 59h1v1h-1zM834 59h1v1h-1z" fill="#808080"/></svg>
<svg style="position:absolute;left:0;top:0" width="1280" height="70" shape-rendering="crispEdges"><path d="M832 49h1v1h-1zM833 49h1v1h-1zM834 49h1v1h-1zM831 50h1v1h-1zM830 51h1v1h-1zM829 52h1v1h-1zM839 52h1v1h-1zM839 53h1v1h-1zM828 54h1v1h-1zM840 54h1v1h-1zM838 55h1v1h-1zM828 56h1v1h-1zM838 56h1v1h-1zM837 57h1v1h-1zM837 58h1v1h-1zM835 59h1v1h-1zM831 60h1v1h-1zM832 60h1v1h-1zM833 60h1v1h-1zM834 60h1v1h-1zM835 60h1v1h-1z" fill="#FFFFFF"/></svg>
<svg style="position:absolute;left:0;top:0" width="1280" height="70" shape-rendering="crispEdges"><path d="M579 46h1v1h-1zM580 46h1v1h-1zM581 46h1v1h-1zM578 47h1v1h-1zM579 47h1v1h-1zM580 47h1v1h-1zM578 48h1v1h-1zM579 48h1v1h-1zM580 48h1v1h-1zM577 49h1v1h-1zM578 49h1v1h-1zM579 49h1v1h-1zM577 50h1v1h-1zM578 50h1v1h-1zM579 50h1v1h-1zM576 51h1v1h-1zM577 51h1v1h-1zM578 51h1v1h-1zM576 52h1v1h-1zM577 52h1v1h-1zM578 52h1v1h-1zM575 53h1v1h-1zM576 53h1v1h-1zM577 53h1v1h-1zM575 54h1v1h-1zM576 54h1v1h-1zM577 54h1v1h-1zM574 55h1v1h-1zM575 55h1v1h-1zM576 55h1v1h-1zM574 56h1v1h-1zM575 56h1v1h-1zM573 57h1v1h-1zM574 57h1v1h-1zM573 58h1v1h-1zM574 58h1v1h-1zM575 58h1v1h-1zM576 58h1v1h-1zM577 58h1v1h-1zM578 58h1v1h-1zM579 58h1v1h-1zM580 58h1v1h-1zM581 58h1v1h-1zM582 58h1v1h-1zM583 58h1v1h-1zM584 58h1v1h-1zM585 58h1v1h-1zM586 58h1v1h-1z" fill="#808080"/></svg>
<svg style="position:absolute;left:0;top:0" width="1280" height="70" shape-rendering="crispEdges"><path d="M581 47h1v1h-1zM581 48h1v1h-1zM580 49h1v1h-1zM580 50h1v1h-1zM579 51h1v1h-1zM579 52h1v1h-1zM578 53h1v1h-1zM578 54h1v1h-1zM577 55h1v1h-1zM576 56h1v1h-1zM575 57h1v1h-1zM574 59h1v1h-1zM575 59h1v1h-1zM576 59h1v1h-1zM577 59h1v1h-1zM578 59h1v1h-1zM579 59h1v1h-1zM580 59h1v1h-1zM581 59h1v1h-1zM582 59h1v1h-1zM583 59h1v1h-1zM584 59h1v1h-1zM585 59h1v1h-1zM586 59h1v1h-1zM587 59h1v1h-1z" fill="#FFFFFF"/></svg>
<svg style="position:absolute;left:0;top:0" width="1280" height="70" shape-rendering="crispEdges"><path d="M601 46h1v1h-1zM601 47h1v1h-1zM601 48h1v1h-1zM601 49h1v1h-1zM601 50h1v1h-1zM601 51h1v1h-1zM601 52h1v1h-1zM594 53h1v1h-1zM595 53h1v1h-1zM596 53h1v1h-1zM597 53h1v1h-1zM598 53h1v1h-1zM599 53h1v1h-1zM600 53h1v1h-1zM601 53h1v1h-1zM602 53h1v1h-1zM603 53h1v1h-1zM604 53h1v1h-1zM605 53h1v1h-1zM606 53h1v1h-1zM607 53h1v1h-1zM608 53h1v1h-1zM595 54h1v1h-1zM606 54h1v1h-1zM596 55h1v1h-1zM605 55h1v1h-1zM597 56h1v1h-1zM604 56h1v1h-1zM598 57h1v1h-1zM603 57h1v1h-1zM599 58h1v1h-1zM602 58h1v1h-1zM600 59h1v1h-1zM601 59h1v1h-1zM601 60h1v1h-1z" fill="#808080"/></svg>
<svg style="position:absolute;left:0;top:0" width="1280" height="70" shape-rendering="crispEdges"><path d="M602 47h1v1h-1zM602 48h1v1h-1zM602 49h1v1h-1zM602 50h1v1h-1zM602 51h1v1h-1zM602 52h1v1h-1zM607 54h1v1h-1zM608 54h1v1h-1zM606 55h1v1h-1zM605 56h1v1h-1zM604 57h1v1h-1zM603 58h1v1h-1zM602 59h1v1h-1zM602 60h1v1h-1zM602 61h1v1h-1z" fill="#FFFFFF"/></svg>
<svg style="position:absolute;left:0;top:0" width="1280" height="70" shape-rendering="crispEdges"><path d="M618 47h1v1h-1zM619 47h1v1h-1zM620 47h1v1h-1zM621 47h1v1h-1zM622 47h1v1h-1zM623 47h1v1h-1zM624 47h1v1h-1zM625 47h1v1h-1zM626 47h1v1h-1zM627 47h1v1h-1zM628 47h1v1h-1zM629 47h1v1h-1zM630 47h1v1h-1zM617 48h1v1h-1zM631 48h1v1h-1zM617 49h1v1h-1zM623 49h1v1h-1zM624 49h1v1h-1zM625 49h1v1h-1zM631 49h1v1h-1zM617 50h1v1h-1zM622 50h1v1h-1zM626 50h1v1h-1zM631 50h1v1h-1zM617 51h1v1h-1zM622 51h1v1h-1zM623 51h1v1h-1zM624 51h1v1h-1zM625 51h1v1h-1zM626 51h1v1h-1zM631 51h1v1h-1zM617 52h1v1h-1zM622 52h1v1h-1zM626 52h1v1h-1zM631 52h1v1h-1zM617 53h1v1h-1zM622 53h1v1h-1zM626 53h1v1h-1zM631 53h1v1h-1zM617 54h1v1h-1zM631 54h1v1h-1zM618 55h1v1h-1zM619 55h1v1h-1zM620 55h1v1h-1zM621 55h1v1h-1zM622 55h1v1h-1zM623 55h1v1h-1zM624 55h1v1h-1zM625 55h1v1h-1zM626 55h1v1h-1zM627 55h1v1h-1zM628 55h1v1h-1zM629 55h1v1h-1zM630 55h1v1h-1zM631 55h1v1h-1zM624 56h1v1h-1zM624 57h1v1h-1zM624 58h1v1h-1zM624 59h1v1h-1z" fill="#808080"/></svg>
<svg style="position:absolute;left:0;top:0" width="1280" height="70" shape-rendering="crispEdges"><path d="M618 48h1v1h-1zM619 48h1v1h-1zM620 48h1v1h-1zM621 48h1v1h-1zM622 48h1v1h-1zM623 48h1v1h-1zM624 48h1v1h-1zM625 48h1v1h-1zM626 48h1v1h-1zM627 48h1v1h-1zM628 48h1v1h-1zM629 48h1v1h-1zM630 48h1v1h-1zM618 49h1v1h-1zM632 49h1v1h-1zM618 50h1v1h-1zM623 50h1v1h-1zM632 50h1v1h-1zM618 51h1v1h-1zM627 51h1v1h-1zM632 51h1v1h-1zM618 52h1v1h-1zM623 52h1v1h-1zM627 52h1v1h-1zM632 52h1v1h-1zM618 53h1v1h-1zM623 53h1v1h-1zM627 53h1v1h-1zM632 53h1v1h-1zM618 54h1v1h-1zM632 54h1v1h-1zM632 55h1v1h-1zM619 56h1v1h-1zM620 56h1v1h-1zM621 56h1v1h-1zM622 56h1v1h-1zM623 56h1v1h-1zM625 56h1v1h-1zM626 56h1v1h-1zM627 56h1v1h-1zM628 56h1v1h-1zM629 56h1v1h-1zM630 56h1v1h-1zM631 56h1v1h-1zM625 57h1v1h-1zM625 58h1v1h-1zM625 59h1v1h-1zM625 60h1v1h-1z" fill="#FFFFFF"/></svg>
<svg style="position:absolute;left:0;top:0" width="1280" height="70" shape-rendering="crispEdges"><path d="M646 46h1v1h-1zM647 47h1v1h-1zM648 47h1v1h-1zM649 48h1v1h-1zM650 48h1v1h-1zM651 49h1v1h-1zM652 49h1v1h-1zM649 50h1v1h-1zM650 50h1v1h-1zM647 51h1v1h-1zM648 51h1v1h-1zM645 52h1v1h-1zM646 52h1v1h-1zM643 53h1v1h-1zM644 53h1v1h-1zM642 54h1v1h-1zM643 54h1v1h-1zM643 55h1v1h-1zM644 55h1v1h-1zM644 56h1v1h-1zM645 56h1v1h-1zM645 57h1v1h-1zM646 58h1v1h-1zM646 59h1v1h-1z" fill="#808080"/></svg>
<svg style="position:absolute;left:0;top:0" width="1280" height="70" shape-rendering="crispEdges"><path d="M653 49h1v1h-1zM651 50h1v1h-1zM652 50h1v1h-1zM649 51h1v1h-1zM650 51h1v1h-1zM647 52h1v1h-1zM648 52h1v1h-1zM645 53h1v1h-1zM646 53h1v1h-1zM644 54h1v1h-1zM645 55h1v1h-1zM646 56h1v1h-1zM646 57h1v1h-1zM647 58h1v1h-1zM647 59h1v1h-1zM647 60h1v1h-1z" fill="#FFFFFF"/></svg>
<svg style="position:absolute;left:0;top:0" width="1280" height="70" shape-rendering="crispEdges"><path d="M670 46h1v1h-1zM670 47h1v1h-1zM670 48h1v1h-1zM670 49h1v1h-1zM670 50h1v1h-1zM665 51h1v1h-1zM666 51h1v1h-1zM667 51h1v1h-1zM668 51h1v1h-1zM669 51h1v1h-1zM670 51h1v1h-1zM671 51h1v1h-1zM672 51h1v1h-1zM673 51h1v1h-1zM674 51h1v1h-1zM675 51h1v1h-1zM676 51h1v1h-1zM665 54h1v1h-1zM666 54h1v1h-1zM667 54h1v1h-1zM668 54h1v1h-1zM669 54h1v1h-1zM670 54h1v1h-1zM671 54h1v1h-1zM672 54h1v1h-1zM673 54h1v1h-1zM674 54h1v1h-1zM675 54h1v1h-1zM676 54h1v1h-1zM670 55h1v1h-1zM670 56h1v1h-1zM670 57h1v1h-1zM670 58h1v1h-1zM670 59h1v1h-1zM670 60h1v1h-1z" fill="#808080"/></svg>
<svg style="position:absolute;left:0;top:0" width="1280" height="70" shape-rendering="crispEdges"><path d="M671 47h1v1h-1zM671 48h1v1h-1zM671 49h1v1h-1zM671 50h1v1h-1zM666 52h1v1h-1zM667 52h1v1h-1zM668 52h1v1h-1zM669 52h1v1h-1zM670 52h1v1h-1zM671 52h1v1h-1zM672 52h1v1h-1zM673 52h1v1h-1zM674 52h1v1h-1zM675 52h1v1h-1zM676 52h1v1h-1zM666 55h1v1h-1zM667 55h1v1h-1zM668 55h1v1h-1zM669 55h1v1h-1zM671 55h1v1h-1zM672 55h1v1h-1zM673 55h1v1h-1zM674 55h1v1h-1zM675 55h1v1h-1zM676 55h1v1h-1zM671 56h1v1h-1zM671 57h1v1h-1zM671 58h1v1h-1zM671 59h1v1h-1zM671 60h1v1h-1zM671 61h1v1h-1z" fill="#FFFFFF"/></svg>
<svg style="position:absolute;left:0;top:0" width="1280" height="70" shape-rendering="crispEdges"><path d="M691 46h1v1h-1zM692 47h1v1h-1zM693 47h1v1h-1zM694 48h1v1h-1zM694 49h1v1h-1zM693 50h1v1h-1zM692 51h1v1h-1zM693 52h1v1h-1zM694 52h1v1h-1zM695 53h1v1h-1zM695 54h1v1h-1zM694 55h1v1h-1zM693 56h1v1h-1zM692 57h1v1h-1zM691 58h1v1h-1zM690 59h1v1h-1z" fill="#808080"/></svg>
<svg style="position:absolute;left:0;top:0" width="1280" height="70" shape-rendering="crispEdges"><path d="M695 48h1v1h-1zM695 49h1v1h-1zM694 50h1v1h-1zM693 51h1v1h-1zM696 53h1v1h-1zM696 54h1v1h-1zM695 55h1v1h-1zM694 56h1v1h-1zM693 57h1v1h-1zM692 58h1v1h-1zM691 59h1v1h-1zM691 60h1v1h-1z" fill="#FFFFFF"/></svg>
<svg style="position:absolute;left:0;top:0" width="1280" height="70" shape-rendering="crispEdges"><path d="M717 46h1v1h-1zM717 47h1v1h-1zM717 48h1v1h-1zM710 49h1v1h-1zM711 49h1v1h-1zM712 49h1v1h-1zM713 49h1v1h-1zM714 49h1v1h-1zM715 49h1v1h-1zM716 49h1v1h-1zM717 49h1v1h-1zM718 49h1v1h-1zM719 49h1v1h-1zM720 49h1v1h-1zM721 49h1v1h-1zM722 49h1v1h-1zM723 49h1v1h-1zM724 49h1v1h-1zM711 50h1v1h-1zM722 50h1v1h-1zM712 51h1v1h-1zM721 51h1v1h-1zM713 52h1v1h-1zM720 52h1v1h-1zM714 53h1v1h-1zM719 53h1v1h-1zM715 54h1v1h-1zM718 54h1v1h-1zM716 55h1v1h-1zM717 55h1v1h-1zM717 56h1v1h-1zM710 57h1v1h-1zM711 57h1v1h-1zM712 57h1v1h-1zM713 57h1v1h-1zM714 57h1v1h-1zM715 57h1v1h-1zM716 57h1v1h-1zM717 57h1v1h-1zM718 57h1v1h-1zM719 57h1v1h-1zM720 57h1v1h-1zM721 57h1v1h-1zM722 57h1v1h-1zM723 57h1v1h-1zM724 57h1v1h-1zM717 58h1v1h-1zM717 59h1v1h-1zM717 60h1v1h-1z" fill="#808080"/></svg>
<svg style="position:absolute;left:0;top:0" width="1280" height="70" shape-rendering="crispEdges"><path d="M718 47h1v1h-1zM718 48h1v1h-1zM712 50h1v1h-1zM723 50h1v1h-1zM724 50h1v1h-1zM713 51h1v1h-1zM722 51h1v1h-1zM714 52h1v1h-1zM721 52h1v1h-1zM715 53h1v1h-1zM720 53h1v1h-1zM716 54h1v1h-1zM719 54h1v1h-1zM718 55h1v1h-1zM718 56h1v1h-1zM711 58h1v1h-1zM712 58h1v1h-1zM713 58h1v1h-1zM714 58h1v1h-1zM715 58h1v1h-1zM716 58h1v1h-1zM718 58h1v1h-1zM719 58h1v1h-1zM720 58h1v1h-1zM721 58h1v1h-1zM722 58h1v1h-1zM723 58h1v1h-1zM724 58h1v1h-1zM725 58h1v1h-1zM718 59h1v1h-1zM718 60h1v1h-1zM718 61h1v1h-1z" fill="#FFFFFF"/></svg>
<svg style="position:absolute;left:0;top:0" width="1280" height="70" shape-rendering="crispEdges"><path d="M736 47h1v1h-1zM737 47h1v1h-1zM738 47h1v1h-1zM739 47h1v1h-1zM740 47h1v1h-1zM741 47h1v1h-1zM736 48h1v1h-1zM742 48h1v1h-1zM743 48h1v1h-1zM732 49h1v1h-1zM733 49h1v1h-1zM734 49h1v1h-1zM735 49h1v1h-1zM736 49h1v1h-1zM743 49h1v1h-1zM736 50h1v1h-1zM744 50h1v1h-1zM736 51h1v1h-1zM744 51h1v1h-1zM736 52h1v1h-1zM744 52h1v1h-1zM745 52h1v1h-1zM746 52h1v1h-1zM747 52h1v1h-1zM748 52h1v1h-1zM736 53h1v1h-1zM744 53h1v1h-1zM736 54h1v1h-1zM744 54h1v1h-1zM732 55h1v1h-1zM733 55h1v1h-1zM734 55h1v1h-1zM735 55h1v1h-1zM736 55h1v1h-1zM743 55h1v1h-1zM736 56h1v1h-1zM742 56h1v1h-1zM743 56h1v1h-1zM736 57h1v1h-1zM737 57h1v1h-1zM738 57h1v1h-1zM739 57h1v1h-1zM740 57h1v1h-1zM741 57h1v1h-1z" fill="#808080"/></svg>
<svg style="position:absolute;left:0;top:0" width="1280" height="70" shape-rendering="crispEdges"><path d="M737 48h1v1h-1zM738 48h1v1h-1zM739 48h1v1h-1zM740 48h1v1h-1zM741 48h1v1h-1zM737 49h1v1h-1zM744 49h1v1h-1zM733 50h1v1h-1zM734 50h1v1h-1zM735 50h1v1h-1zM737 50h1v1h-1zM745 50h1v1h-1zM737 51h1v1h-1zM745 51h1v1h-1zM737 52h1v1h-1zM737 53h1v1h-1zM745 53h1v1h-1zM746 53h1v1h-1zM747 53h1v1h-1zM748 53h1v1h-1zM737 54h1v1h-1zM745 54h1v1h-1zM737 55h1v1h-1zM744 55h1v1h-1zM733 56h1v1h-1zM734 56h1v1h-1zM735 56h1v1h-1zM737 56h1v1h-1zM744 56h1v1h-1zM742 57h1v1h-1zM743 57h1v1h-1zM737 58h1v1h-1zM738 58h1v1h-1zM739 58h1v1h-1zM740 58h1v1h-1zM741 58h1v1h-1zM742 58h1v1h-1z" fill="#FFFFFF"/></svg>
<svg style="position:absolute;left:0;top:0" width="1280" height="70" shape-rendering="crispEdges"><path d="M849 47h1v1h-1zM850 47h1v1h-1zM851 47h1v1h-1zM852 47h1v1h-1zM853 47h1v1h-1zM854 47h1v1h-1zM856 47h1v1h-1zM848 48h1v1h-1zM855 48h1v1h-1zM856 48h1v1h-1zM847 49h1v1h-1zM854 49h1v1h-1zM855 49h1v1h-1zM856 49h1v1h-1zM847 51h1v1h-1zM848 51h1v1h-1zM849 51h1v1h-1zM850 51h1v1h-1zM851 51h1v1h-1zM847 52h1v1h-1zM847 53h1v1h-1zM852 53h1v1h-1zM853 53h1v1h-1zM854 53h1v1h-1zM855 53h1v1h-1zM856 53h1v1h-1zM857 53h1v1h-1zM858 53h1v1h-1zM859 53h1v1h-1zM847 54h1v1h-1zM848 54h1v1h-1zM849 54h1v1h-1zM850 54h1v1h-1zM852 54h1v1h-1zM855 54h1v1h-1zM858 54h1v1h-1zM847 55h1v1h-1zM852 55h1v1h-1zM855 55h1v1h-1zM858 55h1v1h-1zM847 56h1v1h-1zM852 56h1v1h-1zM855 56h1v1h-1zM858 56h1v1h-1zM847 57h1v1h-1zM852 57h1v1h-1zM855 57h1v1h-1zM858 57h1v1h-1zM847 58h1v1h-1zM848 58h1v1h-1zM849 58h1v1h-1zM850 58h1v1h-1zM851 58h1v1h-1zM852 58h1v1h-1zM855 58h1v1h-1zM858 58h1v1h-1z" fill="#808080"/></svg>
<svg style="position:absolute;left:0;top:0" width="1280" height="70" shape-rendering="crispEdges"><path d="M849 48h1v1h-1zM850 48h1v1h-1zM851 48h1v1h-1zM852 48h1v1h-1zM853 48h1v1h-1zM854 48h1v1h-1zM857 48h1v1h-1zM848 49h1v1h-1zM857 49h1v1h-1zM848 50h1v1h-1zM855 50h1v1h-1zM856 50h1v1h-1zM848 52h1v1h-1zM849 52h1v1h-1zM850 52h1v1h-1zM851 52h1v1h-1zM848 53h1v1h-1zM853 54h1v1h-1zM854 54h1v1h-1zM856 54h1v1h-1zM857 54h1v1h-1zM859 54h1v1h-1zM848 55h1v1h-1zM849 55h1v1h-1zM850 55h1v1h-1zM853 55h1v1h-1zM856 55h1v1h-1zM859 55h1v1h-1zM848 56h1v1h-1zM853 56h1v1h-1zM856 56h1v1h-1zM859 56h1v1h-1zM848 57h1v1h-1zM853 57h1v1h-1zM856 57h1v1h-1zM859 57h1v1h-1zM853 58h1v1h-1zM856 58h1v1h-1zM859 58h1v1h-1zM848 59h1v1h-1zM849 59h1v1h-1zM850 59h1v1h-1zM851 59h1v1h-1zM852 59h1v1h-1zM853 59h1v1h-1zM856 59h1v1h-1zM859 59h1v1h-1z" fill="#FFFFFF"/></svg>
<svg style="position:absolute;left:0;top:0" width="1280" height="70" shape-rendering="crispEdges"><path d="M872 47h1v1h-1zM873 47h1v1h-1zM874 47h1v1h-1zM875 47h1v1h-1zM876 47h1v1h-1zM877 47h1v1h-1zM878 47h1v1h-1zM880 47h1v1h-1zM871 48h1v1h-1zM879 48h1v1h-1zM880 48h1v1h-1zM870 49h1v1h-1zM879 49h1v1h-1zM880 49h1v1h-1zM869 51h1v1h-1zM870 51h1v1h-1zM871 51h1v1h-1zM872 51h1v1h-1zM873 51h1v1h-1zM881 51h1v1h-1zM882 51h1v1h-1zM883 51h1v1h-1zM884 51h1v1h-1zM885 51h1v1h-1zM869 52h1v1h-1zM884 52h1v1h-1zM869 53h1v1h-1zM884 53h1v1h-1zM869 54h1v1h-1zM870 54h1v1h-1zM871 54h1v1h-1zM872 54h1v1h-1zM882 54h1v1h-1zM883 54h1v1h-1zM884 54h1v1h-1zM869 55h1v1h-1zM884 55h1v1h-1zM869 56h1v1h-1zM884 56h1v1h-1zM869 57h1v1h-1zM884 57h1v1h-1zM869 58h1v1h-1zM870 58h1v1h-1zM871 58h1v1h-1zM872 58h1v1h-1zM873 58h1v1h-1zM881 58h1v1h-1zM882 58h1v1h-1zM883 58h1v1h-1zM884 58h1v1h-1z" fill="#808080"/></svg>
<svg style="position:absolute;left:0;top:0" width="1280" height="70" shape-rendering="crispEdges"><path d="M872 48h1v1h-1zM873 48h1v1h-1zM874 48h1v1h-1zM875 48h1v1h-1zM876 48h1v1h-1zM877 48h1v1h-1zM878 48h1v1h-1zM881 48h1v1h-1zM871 49h1v1h-1zM881 49h1v1h-1zM871 50h1v1h-1zM880 50h1v1h-1zM881 50h1v1h-1zM870 52h1v1h-1zM871 52h1v1h-1zM872 52h1v1h-1zM873 52h1v1h-1zM881 52h1v1h-1zM882 52h1v1h-1zM883 52h1v1h-1zM885 52h1v1h-1zM870 53h1v1h-1zM885 53h1v1h-1zM885 54h1v1h-1zM870 55h1v1h-1zM871 55h1v1h-1zM872 55h1v1h-1zM882 55h1v1h-1zM883 55h1v1h-1zM885 55h1v1h-1zM870 56h1v1h-1zM885 56h1v1h-1zM870 57h1v1h-1zM885 57h1v1h-1zM885 58h1v1h-1zM870 59h1v1h-1zM871 59h1v1h-1zM872 59h1v1h-1zM873 59h1v1h-1zM874 59h1v1h-1zM882 59h1v1h-1zM883 59h1v1h-1zM884 59h1v1h-1zM885 59h1v1h-1z" fill="#FFFFFF"/></svg>
<svg style="position:absolute;left:0;top:0" width="1280" height="70" shape-rendering="crispEdges"><path d="M928 50h1v1h-1zM929 50h1v1h-1zM930 50h1v1h-1zM919 51h1v1h-1zM920 51h1v1h-1zM921 51h1v1h-1zM923 51h1v1h-1zM924 51h1v1h-1zM925 51h1v1h-1zM926 51h1v1h-1zM927 51h1v1h-1zM930 51h1v1h-1zM918 52h1v1h-1zM921 52h1v1h-1zM923 52h1v1h-1zM924 52h1v1h-1zM927 52h1v1h-1zM930 52h1v1h-1zM918 53h1v1h-1zM921 53h1v1h-1zM923 53h1v1h-1zM924 53h1v1h-1zM928 53h1v1h-1zM930 53h1v1h-1zM919 54h1v1h-1zM920 54h1v1h-1zM921 54h1v1h-1zM922 54h1v1h-1zM924 54h1v1h-1zM928 54h1v1h-1zM929 54h1v1h-1zM924 55h1v1h-1zM925 55h1v1h-1zM926 55h1v1h-1zM927 55h1v1h-1zM928 55h1v1h-1zM924 56h1v1h-1zM924 57h1v1h-1zM924 58h1v1h-1z" fill="#808080"/></svg>
<svg style="position:absolute;left:0;top:0" width="1280" height="70" shape-rendering="crispEdges"><path d="M928 51h1v1h-1zM929 51h1v1h-1zM931 51h1v1h-1zM919 52h1v1h-1zM920 52h1v1h-1zM922 52h1v1h-1zM925 52h1v1h-1zM926 52h1v1h-1zM928 52h1v1h-1zM931 52h1v1h-1zM919 53h1v1h-1zM922 53h1v1h-1zM925 53h1v1h-1zM929 53h1v1h-1zM931 53h1v1h-1zM923 54h1v1h-1zM925 54h1v1h-1zM930 54h1v1h-1zM920 55h1v1h-1zM921 55h1v1h-1zM922 55h1v1h-1zM923 55h1v1h-1zM929 55h1v1h-1zM925 56h1v1h-1zM926 56h1v1h-1zM927 56h1v1h-1zM928 56h1v1h-1zM925 57h1v1h-1zM925 58h1v1h-1zM925 59h1v1h-1z" fill="#FFFFFF"/></svg>
<svg style="position:absolute;left:157px;top:47px" width="16" height="16"><path d="M4.5 15.5l-3.5-6 1.5-1.5 2 2.5v-8.5h2v7-8.5h2v8.5-7.5h2v7.5-5.5h2v8.5l-2 4z" fill="none" stroke="#FFFFFF" shape-rendering="crispEdges"/></svg>
<svg style="position:absolute;left:156px;top:46px" width="16" height="16"><path d="M4.5 15.5l-3.5-6 1.5-1.5 2 2.5v-8.5h2v7-8.5h2v8.5-7.5h2v7.5-5.5h2v8.5l-2 4z" fill="#fff" stroke="#808080" shape-rendering="crispEdges"/></svg>
<div class="t" style="left:893px;top:47px;font-size:15px;color:#808080;font-style:italic;font-family:'Liberation Serif',serif;text-shadow:1px 1px 0 #fff">Aa</div>
<div style="position:absolute;left:0px;top:68px;width:1280px;height:1px;background:#808080;"></div>
<div style="position:absolute;left:0px;top:69px;width:1280px;height:1px;background:#404040;"></div>
<div style="position:absolute;left:0px;top:91px;width:91px;height:1px;background:#fff;"></div>
<div style="position:absolute;left:182px;top:91px;width:1098px;height:1px;background:#fff;"></div>
<div style="position:absolute;left:4px;top:72px;width:87px;height:1px;background:#fff;"></div>
<div style="position:absolute;left:4px;top:72px;width:1px;height:20px;background:#fff;"></div>
<div style="position:absolute;left:4px;top:91px;width:87px;height:1px;background:#fff;"></div>
<div style="position:absolute;left:90px;top:72px;width:1px;height:20px;background:#fff;"></div>
<svg style="position:absolute;left:12px;top:74px" width="16" height="17"><path d="M9 0h1v1h-1zM8 1h1v1h-1zM7 2h1v1h-1zM6 3h1v1h-1zM3 4h1v1h-1zM4 4h1v1h-1zM5 4h1v1h-1zM6 4h1v1h-1zM3 5h1v1h-1zM4 5h1v1h-1zM3 6h1v1h-1zM4 6h1v1h-1zM0 7h1v1h-1zM1 7h1v1h-1zM2 7h1v1h-1zM3 7h1v1h-1zM4 7h1v1h-1zM3 8h1v1h-1zM4 8h1v1h-1zM3 9h1v1h-1zM4 9h1v1h-1zM3 10h1v1h-1zM4 10h1v1h-1zM5 10h1v1h-1zM3 11h1v1h-1zM4 11h1v1h-1zM6 11h1v1h-1zM6 12h1v1h-1zM7 12h1v1h-1zM8 12h1v1h-1zM7 13h1v1h-1zM8 13h1v1h-1zM6 14h1v1h-1zM7 14h1v1h-1zM8 14h1v1h-1zM9 14h1v1h-1zM9 15h1v1h-1z" fill="#0000FF" shape-rendering="crispEdges"/></svg>
<div class="t" style="left:32px;top:77px;font-size:12px;color:#000;font-weight:normal;transform:scaleX(0.9);transform-origin:0 0">wirelPo.asc</div>
<div style="position:absolute;left:91px;top:70px;width:89px;height:1px;background:#fff;"></div>
<div style="position:absolute;left:91px;top:71px;width:1px;height:1px;background:#fff;"></div>
<div style="position:absolute;left:180px;top:70px;width:1px;height:21px;background:#808080;"></div>
<div style="position:absolute;left:181px;top:70px;width:1px;height:21px;background:#404040;"></div>
<svg style="position:absolute;left:98px;top:72px" width="17" height="16"><path d="M2 0h1v1h-1zM0 1h1v1h-1zM1 1h1v1h-1zM2 1h1v1h-1zM2 2h1v1h-1zM0 3h1v1h-1zM1 3h1v1h-1zM2 3h1v1h-1zM2 4h1v1h-1zM0 5h1v1h-1zM1 5h1v1h-1zM2 5h1v1h-1zM2 6h1v1h-1zM0 7h1v1h-1zM1 7h1v1h-1zM2 7h1v1h-1zM2 8h1v1h-1zM0 9h1v1h-1zM1 9h1v1h-1zM2 9h1v1h-1zM2 10h1v1h-1zM0 11h1v1h-1zM1 11h1v1h-1zM2 11h1v1h-1zM2 12h1v1h-1zM2 13h1v1h-1zM3 13h1v1h-1zM4 13h1v1h-1zM5 13h1v1h-1zM6 13h1v1h-1zM7 13h1v1h-1zM8 13h1v1h-1zM9 13h1v1h-1zM10 13h1v1h-1zM11 13h1v1h-1zM12 13h1v1h-1zM13 13h1v1h-1zM14 13h1v1h-1zM15 13h1v1h-1zM16 13h1v1h-1zM2 14h1v1h-1zM5 14h1v1h-1zM8 14h1v1h-1zM11 14h1v1h-1zM14 14h1v1h-1zM2 15h1v1h-1zM5 15h1v1h-1zM8 15h1v1h-1zM11 15h1v1h-1zM14 15h1v1h-1z" fill="#000000" shape-rendering="crispEdges"/><path d="M4 1h1v1h-1zM6 1h1v1h-1zM8 1h1v1h-1zM10 1h1v1h-1zM12 1h1v1h-1zM14 1h1v1h-1zM4 3h1v1h-1zM6 3h1v1h-1zM8 3h1v1h-1zM10 3h1v1h-1zM12 3h1v1h-1zM4 5h1v1h-1zM6 5h1v1h-1zM10 5h1v1h-1zM12 5h1v1h-1zM14 5h1v1h-1zM6 7h1v1h-1zM8 7h1v1h-1zM10 7h1v1h-1zM12 7h1v1h-1zM14 7h1v1h-1zM4 9h1v1h-1zM6 9h1v1h-1zM8 9h1v1h-1zM10 9h1v1h-1zM12 9h1v1h-1zM14 9h1v1h-1zM4 11h1v1h-1zM6 11h1v1h-1zM8 11h1v1h-1zM10 11h1v1h-1zM12 11h1v1h-1zM14 11h1v1h-1z" fill="#C0C0C0" shape-rendering="crispEdges"/><path d="M5 1h1v1h-1zM7 1h1v1h-1zM9 1h1v1h-1zM11 1h1v1h-1zM13 1h1v1h-1zM5 3h1v1h-1zM7 3h1v1h-1zM9 3h1v1h-1zM11 3h1v1h-1zM13 3h1v1h-1zM5 5h1v1h-1zM11 5h1v1h-1zM5 7h1v1h-1zM7 7h1v1h-1zM9 7h1v1h-1zM11 7h1v1h-1zM13 7h1v1h-1zM5 9h1v1h-1zM7 9h1v1h-1zM9 9h1v1h-1zM11 9h1v1h-1zM13 9h1v1h-1zM5 11h1v1h-1zM7 11h1v1h-1zM9 11h1v1h-1zM11 11h1v1h-1zM13 11h1v1h-1z" fill="#808080" shape-rendering="crispEdges"/><path d="M16 2h1v1h-1zM14 3h1v1h-1zM15 3h1v1h-1zM13 4h1v1h-1zM7 5h1v1h-1zM8 5h1v1h-1zM9 5h1v1h-1zM13 5h1v1h-1zM5 6h1v1h-1zM6 6h1v1h-1zM10 6h1v1h-1zM11 6h1v1h-1zM12 6h1v1h-1zM4 7h1v1h-1zM3 8h1v1h-1z" fill="#FF0000" shape-rendering="crispEdges"/></svg>
<div class="t" style="left:120px;top:77px;font-size:12px;color:#000;font-weight:normal;transform:scaleX(0.9);transform-origin:0 0">wirelPo.raw</div>
<div style="position:absolute;left:0px;top:93px;width:1280px;height:1px;background:#808080;"></div>
<div style="position:absolute;left:0px;top:94px;width:1280px;height:1px;background:#404040;"></div>
<div style="position:absolute;left:0px;top:68px;width:1px;height:906px;background:#808080;"></div>
<div style="position:absolute;left:1px;top:69px;width:1px;height:904px;background:#404040;"></div>
<div style="position:absolute;left:1278px;top:94px;width:1px;height:880px;background:#D4D0C8;"></div>
<div style="position:absolute;left:1279px;top:93px;width:1px;height:881px;background:#fff;"></div>
<div style="position:absolute;left:2px;top:97px;width:1276px;height:438px;background:#D4D0C8;"></div>
<div style="position:absolute;left:2px;top:97px;width:1276px;height:1px;background:#D4D0C8;"></div>
<div style="position:absolute;left:2px;top:97px;width:1px;height:438px;background:#D4D0C8;"></div>
<div style="position:absolute;left:3px;top:98px;width:1274px;height:1px;background:#fff;"></div>
<div style="position:absolute;left:3px;top:98px;width:1px;height:436px;background:#fff;"></div>
<div style="position:absolute;left:2px;top:534px;width:1276px;height:1px;background:#404040;"></div>
<div style="position:absolute;left:1277px;top:97px;width:1px;height:438px;background:#404040;"></div>
<div style="position:absolute;left:3px;top:533px;width:1274px;height:1px;background:#808080;"></div>
<div style="position:absolute;left:1276px;top:98px;width:1px;height:436px;background:#808080;"></div>
<div style="position:absolute;left:6px;top:101px;width:1268px;height:18px;background:linear-gradient(to right,#808080,#C0C0C0);"></div>
<svg style="position:absolute;left:7px;top:102px" width="18" height="17"><path d="M9 0h1v1h-1zM8 1h1v1h-1zM7 2h1v1h-1zM6 3h1v1h-1zM3 4h1v1h-1zM4 4h1v1h-1zM5 4h1v1h-1zM6 4h1v1h-1zM3 5h1v1h-1zM4 5h1v1h-1zM3 6h1v1h-1zM4 6h1v1h-1zM0 7h1v1h-1zM1 7h1v1h-1zM2 7h1v1h-1zM3 7h1v1h-1zM4 7h1v1h-1zM3 8h1v1h-1zM4 8h1v1h-1zM3 9h1v1h-1zM4 9h1v1h-1zM3 10h1v1h-1zM4 10h1v1h-1zM5 10h1v1h-1zM3 11h1v1h-1zM4 11h1v1h-1zM6 11h1v1h-1zM6 12h1v1h-1zM7 12h1v1h-1zM8 12h1v1h-1zM7 13h1v1h-1zM8 13h1v1h-1zM6 14h1v1h-1zM7 14h1v1h-1zM8 14h1v1h-1zM9 14h1v1h-1zM9 15h1v1h-1z" fill="#0000FF" shape-rendering="crispEdges"/></svg>
<div class="t" style="left:25px;top:106px;font-size:11.5px;color:#D4D0C8;font-weight:bold;letter-spacing:0.15px">wirelPo.asc</div>
<div style="position:absolute;left:1222px;top:103px;width:16px;height:14px;background:#D4D0C8;"></div>
<div style="position:absolute;left:1222px;top:103px;width:16px;height:1px;background:#fff;"></div>
<div style="position:absolute;left:1222px;top:103px;width:1px;height:14px;background:#fff;"></div>
<div style="position:absolute;left:1222px;top:116px;width:16px;height:1px;background:#404040;"></div>
<div style="position:absolute;left:1237px;top:103px;width:1px;height:14px;background:#404040;"></div>
<div style="position:absolute;left:1223px;top:115px;width:14px;height:1px;background:#808080;"></div>
<div style="position:absolute;left:1236px;top:104px;width:1px;height:12px;background:#808080;"></div>
<div style="position:absolute;left:1226px;top:112px;width:6px;height:2px;background:#000;"></div>
<div style="position:absolute;left:1238px;top:103px;width:16px;height:14px;background:#D4D0C8;"></div>
<div style="position:absolute;left:1238px;top:103px;width:16px;height:1px;background:#fff;"></div>
<div style="position:absolute;left:1238px;top:103px;width:1px;height:14px;background:#fff;"></div>
<div style="position:absolute;left:1238px;top:116px;width:16px;height:1px;background:#404040;"></div>
<div style="position:absolute;left:1253px;top:103px;width:1px;height:14px;background:#404040;"></div>
<div style="position:absolute;left:1239px;top:115px;width:14px;height:1px;background:#808080;"></div>
<div style="position:absolute;left:1252px;top:104px;width:1px;height:12px;background:#808080;"></div>
<div style="position:absolute;left:1241px;top:105px;width:9px;height:9px;background:none;border:1px solid #000;border-top-width:2px;box-sizing:border-box"></div>
<div style="position:absolute;left:1256px;top:103px;width:16px;height:14px;background:#D4D0C8;"></div>
<div style="position:absolute;left:1256px;top:103px;width:16px;height:1px;background:#fff;"></div>
<div style="position:absolute;left:1256px;top:103px;width:1px;height:14px;background:#fff;"></div>
<div style="position:absolute;left:1256px;top:116px;width:16px;height:1px;background:#404040;"></div>
<div style="position:absolute;left:1271px;top:103px;width:1px;height:14px;background:#404040;"></div>
<div style="position:absolute;left:1257px;top:115px;width:14px;height:1px;background:#808080;"></div>
<div style="position:absolute;left:1270px;top:104px;width:1px;height:12px;background:#808080;"></div>
<svg style="position:absolute;left:1260px;top:106px" width="8" height="7" shape-rendering="crispEdges"><path d="M0 0h1v1h-1zM1 0h1v1h-1zM6 0h1v1h-1zM7 0h1v1h-1zM1 1h1v1h-1zM2 1h1v1h-1zM5 1h1v1h-1zM6 1h1v1h-1zM2 2h1v1h-1zM3 2h1v1h-1zM4 2h1v1h-1zM5 2h1v1h-1zM3 3h1v1h-1zM4 3h1v1h-1zM2 4h1v1h-1zM3 4h1v1h-1zM4 4h1v1h-1zM5 4h1v1h-1zM1 5h1v1h-1zM2 5h1v1h-1zM5 5h1v1h-1zM6 5h1v1h-1zM0 6h1v1h-1zM1 6h1v1h-1zM6 6h1v1h-1zM7 6h1v1h-1z" fill="#000"/></svg>
<div style="position:absolute;left:6px;top:120px;width:1268px;height:1px;background:#808080;"></div>
<div style="position:absolute;left:6px;top:120px;width:1px;height:411px;background:#808080;"></div>
<div style="position:absolute;left:7px;top:121px;width:1266px;height:1px;background:#404040;"></div>
<div style="position:absolute;left:7px;top:121px;width:1px;height:409px;background:#404040;"></div>
<div style="position:absolute;left:6px;top:530px;width:1268px;height:1px;background:#fff;"></div>
<div style="position:absolute;left:1273px;top:120px;width:1px;height:411px;background:#fff;"></div>
<div style="position:absolute;left:7px;top:529px;width:1266px;height:1px;background:#D4D0C8;"></div>
<div style="position:absolute;left:1272px;top:121px;width:1px;height:409px;background:#D4D0C8;"></div>
<div style="position:absolute;left:8px;top:122px;width:1264px;height:407px;background:#fff;"></div>
<svg style="position:absolute;left:0;top:0" width="1280" height="998" shape-rendering="crispEdges">
<path d="M351.5 268.5 L351.5 165.5 L520.5 165.5" stroke="#0000FF" stroke-width="1" fill="none" stroke-linecap="square"/>
<path d="M570.5 165.5 L699.5 165.5 L699.5 486.5 L557.5 486.5" stroke="#0000FF" stroke-width="1" fill="none" stroke-linecap="square"/>
<path d="M507.5 486.5 L351.5 486.5 L351.5 473.5" stroke="#0000FF" stroke-width="1" fill="none" stroke-linecap="square"/>
<path d="M351.5 332.5 L351.5 409.5" stroke="#0000FF" stroke-width="1" fill="none" stroke-linecap="square"/>
<path d="M441.5 268.5 L441.5 255.5 L583.5 255.5" stroke="#0000FF" stroke-width="1" fill="none" stroke-linecap="square"/>
<path d="M557.5 255.5 L557.5 268.5" stroke="#0000FF" stroke-width="1" fill="none" stroke-linecap="square"/>
<path d="M660.5 255.5 L660.5 268.5" stroke="#0000FF" stroke-width="1" fill="none" stroke-linecap="square"/>
<path d="M647.5 255.5 L699.5 255.5" stroke="#0000FF" stroke-width="1" fill="none" stroke-linecap="square"/>
<path d="M441.5 332.5 L441.5 358.5" stroke="#0000FF" stroke-width="1" fill="none" stroke-linecap="square"/>
<path d="M351.5 358.5 L892.5 358.5 L892.5 320.5" stroke="#0000FF" stroke-width="1" fill="none" stroke-linecap="square"/>
<path d="M557.5 320.5 L557.5 358.5" stroke="#0000FF" stroke-width="1" fill="none" stroke-linecap="square"/>
<path d="M660.5 320.5 L660.5 358.5" stroke="#0000FF" stroke-width="1" fill="none" stroke-linecap="square"/>
<path d="M789.5 255.5 L789.5 242.5 L892.5 242.5 L892.5 256.5" stroke="#0000FF" stroke-width="1" fill="none" stroke-linecap="square"/>
<path d="M789.5 319.5 L789.5 358.5" stroke="#0000FF" stroke-width="1" fill="none" stroke-linecap="square"/>
<path d="M840.5 242.5 L840.5 255.5" stroke="#0000FF" stroke-width="1" fill="none" stroke-linecap="square"/>
<path d="M840.5 306.5 L840.5 358.5" stroke="#0000FF" stroke-width="1" fill="none" stroke-linecap="square"/>
<path d="M866.5 189.5 L866.5 242.5" stroke="#0000FF" stroke-width="1" fill="none" stroke-linecap="square"/>
<path d="M737.5 358.5 L737.5 383.5" stroke="#0000FF" stroke-width="1" fill="none" stroke-linecap="square"/>
<path d="M723.5 383.5 L752.5 383.5" stroke="#0000FF" stroke-width="1" fill="none" stroke-linecap="square"/>
<path d="M723.5 383.5 L737.5 398.5 L752.5 383.5" stroke="#0000FF" stroke-width="1" fill="none" stroke-linecap="square"/>
<rect x="348" y="355" width="7" height="7" fill="#0000FF"/>
<rect x="438" y="355" width="7" height="7" fill="#0000FF"/>
<rect x="554" y="252" width="7" height="7" fill="#0000FF"/>
<rect x="657" y="252" width="7" height="7" fill="#0000FF"/>
<rect x="696" y="252" width="7" height="7" fill="#0000FF"/>
<rect x="554" y="355" width="7" height="7" fill="#0000FF"/>
<rect x="657" y="355" width="7" height="7" fill="#0000FF"/>
<rect x="734" y="355" width="7" height="7" fill="#0000FF"/>
<rect x="786" y="355" width="7" height="7" fill="#0000FF"/>
<rect x="837" y="355" width="7" height="7" fill="#0000FF"/>
<rect x="837" y="239" width="7" height="7" fill="#0000FF"/>
<rect x="863" y="239" width="7" height="7" fill="#0000FF"/>
<ellipse cx="351.5" cy="300" rx="25" ry="25.5" stroke="#000080" fill="none"/>
<path d="M351.5 268.5 L351.5 274.5" stroke="#000080" stroke-width="1" fill="none" stroke-linecap="square"/>
<path d="M351.5 326.5 L351.5 332.5" stroke="#000080" stroke-width="1" fill="none" stroke-linecap="square"/>
<path d="M345.5 284.5 L358.5 284.5" stroke="#000080" stroke-width="1" fill="none" stroke-linecap="square"/>
<path d="M351.5 277.5 L351.5 290.5" stroke="#000080" stroke-width="1" fill="none" stroke-linecap="square"/>
<path d="M345.5 316.5 L358.5 316.5" stroke="#000080" stroke-width="1" fill="none" stroke-linecap="square"/>
<ellipse cx="441.5" cy="300" rx="25" ry="25.5" stroke="#000080" fill="none"/>
<path d="M441.5 268.5 L441.5 274.5" stroke="#000080" stroke-width="1" fill="none" stroke-linecap="square"/>
<path d="M441.5 326.5 L441.5 332.5" stroke="#000080" stroke-width="1" fill="none" stroke-linecap="square"/>
<path d="M435.5 284.5 L448.5 284.5" stroke="#000080" stroke-width="1" fill="none" stroke-linecap="square"/>
<path d="M441.5 277.5 L441.5 290.5" stroke="#000080" stroke-width="1" fill="none" stroke-linecap="square"/>
<path d="M435.5 316.5 L448.5 316.5" stroke="#000080" stroke-width="1" fill="none" stroke-linecap="square"/>
<ellipse cx="351.5" cy="441" rx="25" ry="25.5" stroke="#000080" fill="none"/>
<path d="M351.5 409.5 L351.5 415.5" stroke="#000080" stroke-width="1" fill="none" stroke-linecap="square"/>
<path d="M351.5 467.5 L351.5 473.5" stroke="#000080" stroke-width="1" fill="none" stroke-linecap="square"/>
<path d="M345.5 425.5 L358.5 425.5" stroke="#000080" stroke-width="1" fill="none" stroke-linecap="square"/>
<path d="M351.5 418.5 L351.5 431.5" stroke="#000080" stroke-width="1" fill="none" stroke-linecap="square"/>
<path d="M345.5 457.5 L358.5 457.5" stroke="#000080" stroke-width="1" fill="none" stroke-linecap="square"/>
<path d="M544.5 290.5 L570.5 290.5" stroke="#000080" stroke-width="1" fill="none" stroke-linecap="square"/>
<path d="M544.5 297.5 L570.5 297.5" stroke="#000080" stroke-width="1" fill="none" stroke-linecap="square"/>
<path d="M557.5 268.5 L557.5 290.5" stroke="#000080" stroke-width="1" fill="none" stroke-linecap="square"/>
<path d="M557.5 297.5 L557.5 319.5" stroke="#000080" stroke-width="1" fill="none" stroke-linecap="square"/>
<path d="M647.5 290.5 L673.5 290.5" stroke="#000080" stroke-width="1" fill="none" stroke-linecap="square"/>
<path d="M647.5 297.5 L673.5 297.5" stroke="#000080" stroke-width="1" fill="none" stroke-linecap="square"/>
<path d="M660.5 268.5 L660.5 290.5" stroke="#000080" stroke-width="1" fill="none" stroke-linecap="square"/>
<path d="M660.5 297.5 L660.5 319.5" stroke="#000080" stroke-width="1" fill="none" stroke-linecap="square"/>
<path d="M827.5 277.5 L853.5 277.5" stroke="#000080" stroke-width="1" fill="none" stroke-linecap="square"/>
<path d="M827.5 284.5 L853.5 284.5" stroke="#000080" stroke-width="1" fill="none" stroke-linecap="square"/>
<path d="M840.5 255.5 L840.5 277.5" stroke="#000080" stroke-width="1" fill="none" stroke-linecap="square"/>
<path d="M840.5 284.5 L840.5 306.5" stroke="#000080" stroke-width="1" fill="none" stroke-linecap="square"/>
<path d="M520.5 165.5 L535.5 165.5" stroke="#000080" stroke-width="1" fill="none" stroke-linecap="square"/>
<path d="M554.5 165.5 L570.5 165.5" stroke="#000080" stroke-width="1" fill="none" stroke-linecap="square"/>
<path d="M535.5 165.5 L554.5 152.5 L554.5 177.5 L535.5 165.5" stroke="#000080" stroke-width="1" fill="none" stroke-linecap="square"/>
<path d="M541.5 155.5 L541.5 152.5 L535.5 152.5 L535.5 177.5 L528.5 177.5 L528.5 174.5" stroke="#000080" stroke-width="1" fill="none" stroke-linecap="square"/>
<path d="M507.5 486.5 L522.5 486.5" stroke="#000080" stroke-width="1" fill="none" stroke-linecap="square"/>
<path d="M541.5 486.5 L557.5 486.5" stroke="#000080" stroke-width="1" fill="none" stroke-linecap="square"/>
<path d="M541.5 486.5 L522.5 474.5 L522.5 499.5 L541.5 486.5" stroke="#000080" stroke-width="1" fill="none" stroke-linecap="square"/>
<path d="M535.5 496.5 L535.5 499.5 L541.5 499.5 L541.5 474.5 L548.5 474.5 L548.5 477.5" stroke="#000080" stroke-width="1" fill="none" stroke-linecap="square"/>
<path d="M892.5 256.5 L892.5 262.5 L905.5 268.5 L879.5 281.5 L905.5 293.5 L879.5 306.5 L892.5 312.5 L892.5 320.5" stroke="#000080" stroke-width="1" fill="none" stroke-linecap="square"/>
<path d="M592 242h9v1h-9zM611 242h10v1h-10zM630 242h9v1h-9zM590 243h2v1h-2zM601 243h2v1h-2zM609 243h2v1h-2zM621 243h1v1h-1zM628 243h2v1h-2zM639 243h3v1h-3zM588 244h2v1h-2zM603 244h2v1h-2zM607 244h2v1h-2zM622 244h2v1h-2zM626 244h2v1h-2zM642 244h1v1h-1zM587 245h1v1h-1zM605 245h2v1h-2zM624 245h2v1h-2zM643 245h1v1h-1zM586 246h1v1h-1zM605 246h1v1h-1zM624 246h1v1h-1zM644 246h1v1h-1zM585 247h1v1h-1zM605 247h2v1h-2zM624 247h2v1h-2zM645 247h1v1h-1zM584 248h1v1h-1zM604 248h1v1h-1zM607 248h1v1h-1zM623 248h1v1h-1zM626 248h1v1h-1zM645 248h1v1h-1zM584 249h1v1h-1zM603 249h1v1h-1zM607 249h1v1h-1zM623 249h1v1h-1zM626 249h1v1h-1zM646 249h1v1h-1zM584 250h1v1h-1zM603 250h1v1h-1zM607 250h1v1h-1zM622 250h1v1h-1zM627 250h1v1h-1zM646 250h1v1h-1zM583 251h1v1h-1zM603 251h1v1h-1zM608 251h1v1h-1zM622 251h1v1h-1zM627 251h1v1h-1zM646 251h1v1h-1zM583 252h1v1h-1zM603 252h1v1h-1zM608 252h1v1h-1zM622 252h1v1h-1zM628 252h1v1h-1zM647 252h1v1h-1zM583 253h1v1h-1zM602 253h1v1h-1zM608 253h1v1h-1zM622 253h1v1h-1zM628 253h1v1h-1zM647 253h1v1h-1zM583 254h1v1h-1zM602 254h1v1h-1zM609 254h1v1h-1zM622 254h1v1h-1zM628 254h1v1h-1zM647 254h1v1h-1zM583 255h1v1h-1zM602 255h1v1h-1zM609 255h1v1h-1zM622 255h1v1h-1zM628 255h1v1h-1zM647 255h1v1h-1zM786 255h4v1h-4zM602 256h1v1h-1zM608 256h1v1h-1zM622 256h1v1h-1zM628 256h1v1h-1zM783 256h3v1h-3zM602 257h1v1h-1zM608 257h1v1h-1zM622 257h1v1h-1zM628 257h1v1h-1zM781 257h2v1h-2zM602 258h1v1h-1zM608 258h1v1h-1zM622 258h1v1h-1zM627 258h1v1h-1zM636 258h3v1h-3zM780 258h1v1h-1zM603 259h1v1h-1zM608 259h1v1h-1zM622 259h1v1h-1zM627 259h1v1h-1zM635 259h1v1h-1zM639 259h1v1h-1zM779 259h1v1h-1zM603 260h1v1h-1zM608 260h1v1h-1zM623 260h1v1h-1zM626 260h1v1h-1zM634 260h1v1h-1zM640 260h1v1h-1zM778 260h1v1h-1zM604 261h1v1h-1zM607 261h1v1h-1zM623 261h1v1h-1zM626 261h1v1h-1zM634 261h1v1h-1zM640 261h1v1h-1zM777 261h1v1h-1zM794 261h2v1h-2zM605 262h2v1h-2zM623 262h1v1h-1zM625 262h1v1h-1zM635 262h1v1h-1zM639 262h1v1h-1zM777 262h1v1h-1zM793 262h1v1h-1zM796 262h1v1h-1zM605 263h2v1h-2zM624 263h1v1h-1zM636 263h3v1h-3zM777 263h1v1h-1zM792 263h1v1h-1zM797 263h1v1h-1zM605 264h2v1h-2zM624 264h2v1h-2zM776 264h1v1h-1zM792 264h1v1h-1zM797 264h1v1h-1zM776 265h1v1h-1zM792 265h1v1h-1zM797 265h1v1h-1zM776 266h1v1h-1zM793 266h1v1h-1zM796 266h1v1h-1zM776 267h1v1h-1zM794 267h2v1h-2zM776 268h1v1h-1zM776 269h1v1h-1zM776 270h1v1h-1zM776 271h1v1h-1zM776 272h1v1h-1zM777 273h1v1h-1zM777 274h1v1h-1zM786 274h6v1h-6zM778 275h1v1h-1zM784 275h2v1h-2zM792 275h2v1h-2zM778 276h1v1h-1zM782 276h2v1h-2zM794 276h2v1h-2zM779 277h1v1h-1zM781 277h1v1h-1zM796 277h1v1h-1zM798 277h1v1h-1zM779 278h3v1h-3zM797 278h2v1h-2zM778 279h1v1h-1zM782 279h2v1h-2zM794 279h3v1h-3zM778 280h1v1h-1zM784 280h10v1h-10zM777 281h1v1h-1zM776 282h1v1h-1zM776 283h1v1h-1zM776 284h1v1h-1zM776 285h1v1h-1zM776 286h1v1h-1zM776 287h1v1h-1zM776 288h1v1h-1zM776 289h1v1h-1zM776 290h1v1h-1zM776 291h1v1h-1zM777 292h1v1h-1zM777 293h1v1h-1zM788 293h2v1h-2zM778 294h1v1h-1zM785 294h3v1h-3zM790 294h5v1h-5zM778 295h1v1h-1zM782 295h3v1h-3zM795 295h1v1h-1zM779 296h1v1h-1zM781 296h1v1h-1zM796 296h3v1h-3zM779 297h3v1h-3zM796 297h3v1h-3zM778 298h1v1h-1zM782 298h1v1h-1zM795 298h1v1h-1zM778 299h1v1h-1zM783 299h4v1h-4zM793 299h2v1h-2zM777 300h1v1h-1zM787 300h6v1h-6zM777 301h1v1h-1zM776 302h1v1h-1zM776 303h1v1h-1zM776 304h1v1h-1zM776 305h1v1h-1zM776 306h1v1h-1zM776 307h1v1h-1zM776 308h1v1h-1zM776 309h1v1h-1zM776 310h1v1h-1zM777 311h1v1h-1zM777 312h1v1h-1zM778 313h1v1h-1zM778 314h1v1h-1zM779 315h1v1h-1zM780 316h1v1h-1zM781 317h1v1h-1zM782 318h3v1h-3zM785 319h5v1h-5z" fill="#000080"/>
</svg>
<div class="t" style="left:530px;top:132px;font-size:19.3px;font-weight:bold;color:#000">D1</div>
<div class="t" style="left:510px;top:179px;font-size:19.3px;font-weight:bold;color:#000">1N5819</div>
<div class="t" style="left:370px;top:259px;font-size:19.3px;font-weight:bold;color:#000">V2</div>
<div class="t" style="left:371px;top:329px;font-size:19.3px;font-weight:bold;color:#000">10</div>
<div class="t" style="left:460px;top:259px;font-size:19.3px;font-weight:bold;color:#000">V1</div>
<div class="t" style="left:602px;top:222px;font-size:19.3px;font-weight:bold;color:#000">L1</div>
<div class="t" style="left:563px;top:265px;font-size:19.3px;font-weight:bold;color:#000">C1</div>
<div class="t" style="left:593px;top:265px;font-size:19.3px;font-weight:bold;color:#000">576µ</div>
<div class="t" style="left:667px;top:265px;font-size:19.3px;font-weight:bold;color:#000">C2</div>
<div class="t" style="left:564px;top:310px;font-size:19.3px;font-weight:bold;color:#000">1p</div>
<div class="t" style="left:668px;top:310px;font-size:19.3px;font-weight:bold;color:#000">110n</div>
<div class="t" style="left:460px;top:328px;font-size:19.3px;font-weight:bold;color:#000">PULSE(-10 10 24µ 1µ 1µ 24µ 50µ)</div>
<div class="t" style="left:659px;top:220px;font-size:19.3px;font-weight:bold;color:#000">K1 L1 L2 0.1</div>
<div class="t" style="left:461px;top:352px;font-size:19.3px;font-weight:bold;color:#000">AC 1</div>
<div class="t" style="left:486px;top:374px;font-size:19.3px;font-weight:bold;color:#000">;tran 0 11m 10m 100n</div>
<div class="t" style="left:499px;top:407px;font-size:19.3px;font-weight:bold;color:#000">.ac oct 1000 17.5K 22.5K</div>
<div class="t" style="left:370px;top:399px;font-size:19.3px;font-weight:bold;color:#000">V3</div>
<div class="t" style="left:371px;top:470px;font-size:19.3px;font-weight:bold;color:#000">10</div>
<div class="t" style="left:518px;top:454px;font-size:19.3px;font-weight:bold;color:#000">D2</div>
<div class="t" style="left:498px;top:500px;font-size:19.3px;font-weight:bold;color:#000">1N5819</div>
<div class="t" style="left:749px;top:259px;font-size:19.3px;font-weight:bold;color:#000">L2</div>
<div class="t" style="left:729px;top:290px;font-size:19.3px;font-weight:bold;color:#000">576µ</div>
<div class="t" style="left:846px;top:252px;font-size:19.3px;font-weight:bold;color:#000">C3</div>
<div class="t" style="left:907px;top:265px;font-size:19.3px;font-weight:bold;color:#000">R1</div>
<div class="t" style="left:847px;top:297px;font-size:19.3px;font-weight:bold;color:#000">110n</div>
<div class="t" style="left:908px;top:294px;font-size:19.3px;font-weight:bold;color:#000">10e6</div>
<div class="t" style="left:851px;top:166px;font-size:19.3px;font-weight:bold;color:#000;transform:rotate(-90deg);transform-origin:14px 9px">out</div>
<div style="position:absolute;left:2px;top:535px;width:1276px;height:438px;background:#D4D0C8;"></div>
<div style="position:absolute;left:2px;top:535px;width:1276px;height:1px;background:#D4D0C8;"></div>
<div style="position:absolute;left:2px;top:535px;width:1px;height:438px;background:#D4D0C8;"></div>
<div style="position:absolute;left:3px;top:536px;width:1274px;height:1px;background:#fff;"></div>
<div style="position:absolute;left:3px;top:536px;width:1px;height:436px;background:#fff;"></div>
<div style="position:absolute;left:2px;top:972px;width:1276px;height:1px;background:#404040;"></div>
<div style="position:absolute;left:1277px;top:535px;width:1px;height:438px;background:#404040;"></div>
<div style="position:absolute;left:3px;top:971px;width:1274px;height:1px;background:#808080;"></div>
<div style="position:absolute;left:1276px;top:536px;width:1px;height:436px;background:#808080;"></div>
<div style="position:absolute;left:6px;top:539px;width:1268px;height:18px;background:linear-gradient(to right,#0A246A,#A6CAF0);"></div>
<svg style="position:absolute;left:7px;top:540px" width="18" height="17"><path d="M0 0h1v1h-1zM1 0h1v1h-1zM2 0h1v1h-1zM0 1h1v1h-1zM2 1h1v1h-1zM0 2h1v1h-1zM1 2h1v1h-1zM2 2h1v1h-1zM0 3h1v1h-1zM2 3h1v1h-1zM0 4h1v1h-1zM1 4h1v1h-1zM2 4h1v1h-1zM0 5h1v1h-1zM2 5h1v1h-1zM0 6h1v1h-1zM1 6h1v1h-1zM2 6h1v1h-1zM0 7h1v1h-1zM2 7h1v1h-1zM0 8h1v1h-1zM1 8h1v1h-1zM2 8h1v1h-1zM0 9h1v1h-1zM2 9h1v1h-1zM0 10h1v1h-1zM1 10h1v1h-1zM2 10h1v1h-1zM0 11h1v1h-1zM2 11h1v1h-1zM0 12h1v1h-1zM1 12h1v1h-1zM2 12h1v1h-1zM3 12h1v1h-1zM4 12h1v1h-1zM5 12h1v1h-1zM6 12h1v1h-1zM7 12h1v1h-1zM8 12h1v1h-1zM9 12h1v1h-1zM10 12h1v1h-1zM11 12h1v1h-1zM12 12h1v1h-1zM13 12h1v1h-1zM14 12h1v1h-1zM15 12h1v1h-1zM16 12h1v1h-1zM0 13h1v1h-1zM2 13h1v1h-1zM3 13h1v1h-1zM5 13h1v1h-1zM6 13h1v1h-1zM8 13h1v1h-1zM9 13h1v1h-1zM11 13h1v1h-1zM12 13h1v1h-1zM14 13h1v1h-1zM15 13h1v1h-1zM0 14h1v1h-1zM1 14h1v1h-1zM2 14h1v1h-1zM3 14h1v1h-1zM4 14h1v1h-1zM5 14h1v1h-1zM6 14h1v1h-1zM7 14h1v1h-1zM8 14h1v1h-1zM9 14h1v1h-1zM10 14h1v1h-1zM11 14h1v1h-1zM12 14h1v1h-1zM13 14h1v1h-1zM14 14h1v1h-1zM15 14h1v1h-1zM16 14h1v1h-1z" fill="#000000" shape-rendering="crispEdges"/><path d="M3 0h1v1h-1zM4 0h1v1h-1zM5 0h1v1h-1zM6 0h1v1h-1zM7 0h1v1h-1zM8 0h1v1h-1zM9 0h1v1h-1zM10 0h1v1h-1zM11 0h1v1h-1zM12 0h1v1h-1zM13 0h1v1h-1zM14 0h1v1h-1zM15 0h1v1h-1zM3 1h1v1h-1zM5 1h1v1h-1zM6 1h1v1h-1zM8 1h1v1h-1zM9 1h1v1h-1zM11 1h1v1h-1zM12 1h1v1h-1zM14 1h1v1h-1zM15 1h1v1h-1zM3 2h1v1h-1zM4 2h1v1h-1zM5 2h1v1h-1zM6 2h1v1h-1zM7 2h1v1h-1zM8 2h1v1h-1zM9 2h1v1h-1zM10 2h1v1h-1zM11 2h1v1h-1zM12 2h1v1h-1zM13 2h1v1h-1zM15 2h1v1h-1zM3 3h1v1h-1zM5 3h1v1h-1zM6 3h1v1h-1zM8 3h1v1h-1zM9 3h1v1h-1zM11 3h1v1h-1zM12 3h1v1h-1zM15 3h1v1h-1zM3 4h1v1h-1zM4 4h1v1h-1zM5 4h1v1h-1zM8 4h1v1h-1zM9 4h1v1h-1zM10 4h1v1h-1zM11 4h1v1h-1zM14 4h1v1h-1zM15 4h1v1h-1zM3 5h1v1h-1zM9 5h1v1h-1zM14 5h1v1h-1zM15 5h1v1h-1zM3 6h1v1h-1zM6 6h1v1h-1zM7 6h1v1h-1zM12 6h1v1h-1zM13 6h1v1h-1zM14 6h1v1h-1zM15 6h1v1h-1zM5 7h1v1h-1zM6 7h1v1h-1zM8 7h1v1h-1zM12 7h1v1h-1zM14 7h1v1h-1zM15 7h1v1h-1zM4 8h1v1h-1zM5 8h1v1h-1zM6 8h1v1h-1zM7 8h1v1h-1zM8 8h1v1h-1zM9 8h1v1h-1zM10 8h1v1h-1zM11 8h1v1h-1zM12 8h1v1h-1zM13 8h1v1h-1zM14 8h1v1h-1zM15 8h1v1h-1zM3 9h1v1h-1zM5 9h1v1h-1zM6 9h1v1h-1zM8 9h1v1h-1zM9 9h1v1h-1zM11 9h1v1h-1zM12 9h1v1h-1zM14 9h1v1h-1zM15 9h1v1h-1zM3 10h1v1h-1zM4 10h1v1h-1zM5 10h1v1h-1zM6 10h1v1h-1zM7 10h1v1h-1zM8 10h1v1h-1zM9 10h1v1h-1zM10 10h1v1h-1zM11 10h1v1h-1zM12 10h1v1h-1zM13 10h1v1h-1zM14 10h1v1h-1zM15 10h1v1h-1zM3 11h1v1h-1zM5 11h1v1h-1zM6 11h1v1h-1zM8 11h1v1h-1zM9 11h1v1h-1zM11 11h1v1h-1zM12 11h1v1h-1zM14 11h1v1h-1zM15 11h1v1h-1z" fill="#C0C0C0" shape-rendering="crispEdges"/><path d="M1 1h1v1h-1zM1 3h1v1h-1zM1 5h1v1h-1zM1 7h1v1h-1zM1 9h1v1h-1zM1 11h1v1h-1zM1 13h1v1h-1zM4 13h1v1h-1zM7 13h1v1h-1zM10 13h1v1h-1zM13 13h1v1h-1zM16 13h1v1h-1z" fill="#FFFFFF" shape-rendering="crispEdges"/><path d="M4 1h1v1h-1zM7 1h1v1h-1zM10 1h1v1h-1zM13 1h1v1h-1zM4 3h1v1h-1zM7 3h1v1h-1zM10 3h1v1h-1zM4 5h1v1h-1zM10 5h1v1h-1zM13 5h1v1h-1zM7 7h1v1h-1zM11 7h1v1h-1zM13 7h1v1h-1zM4 9h1v1h-1zM7 9h1v1h-1zM10 9h1v1h-1zM13 9h1v1h-1zM4 11h1v1h-1zM7 11h1v1h-1zM10 11h1v1h-1zM13 11h1v1h-1z" fill="#808080" shape-rendering="crispEdges"/><path d="M14 2h1v1h-1zM13 3h1v1h-1zM14 3h1v1h-1zM6 4h1v1h-1zM7 4h1v1h-1zM12 4h1v1h-1zM13 4h1v1h-1zM5 5h1v1h-1zM6 5h1v1h-1zM7 5h1v1h-1zM8 5h1v1h-1zM11 5h1v1h-1zM12 5h1v1h-1zM4 6h1v1h-1zM5 6h1v1h-1zM8 6h1v1h-1zM9 6h1v1h-1zM10 6h1v1h-1zM11 6h1v1h-1zM3 7h1v1h-1zM4 7h1v1h-1zM9 7h1v1h-1zM10 7h1v1h-1zM3 8h1v1h-1z" fill="#FF0000" shape-rendering="crispEdges"/></svg>
<div class="t" style="left:25px;top:544px;font-size:11.5px;color:#fff;font-weight:bold;letter-spacing:0.15px">wirelPo.raw</div>
<div style="position:absolute;left:1222px;top:541px;width:16px;height:14px;background:#D4D0C8;"></div>
<div style="position:absolute;left:1222px;top:541px;width:16px;height:1px;background:#fff;"></div>
<div style="position:absolute;left:1222px;top:541px;width:1px;height:14px;background:#fff;"></div>
<div style="position:absolute;left:1222px;top:554px;width:16px;height:1px;background:#404040;"></div>
<div style="position:absolute;left:1237px;top:541px;width:1px;height:14px;background:#404040;"></div>
<div style="position:absolute;left:1223px;top:553px;width:14px;height:1px;background:#808080;"></div>
<div style="position:absolute;left:1236px;top:542px;width:1px;height:12px;background:#808080;"></div>
<div style="position:absolute;left:1226px;top:550px;width:6px;height:2px;background:#000;"></div>
<div style="position:absolute;left:1238px;top:541px;width:16px;height:14px;background:#D4D0C8;"></div>
<div style="position:absolute;left:1238px;top:541px;width:16px;height:1px;background:#fff;"></div>
<div style="position:absolute;left:1238px;top:541px;width:1px;height:14px;background:#fff;"></div>
<div style="position:absolute;left:1238px;top:554px;width:16px;height:1px;background:#404040;"></div>
<div style="position:absolute;left:1253px;top:541px;width:1px;height:14px;background:#404040;"></div>
<div style="position:absolute;left:1239px;top:553px;width:14px;height:1px;background:#808080;"></div>
<div style="position:absolute;left:1252px;top:542px;width:1px;height:12px;background:#808080;"></div>
<div style="position:absolute;left:1241px;top:543px;width:9px;height:9px;background:none;border:1px solid #000;border-top-width:2px;box-sizing:border-box"></div>
<div style="position:absolute;left:1256px;top:541px;width:16px;height:14px;background:#D4D0C8;"></div>
<div style="position:absolute;left:1256px;top:541px;width:16px;height:1px;background:#fff;"></div>
<div style="position:absolute;left:1256px;top:541px;width:1px;height:14px;background:#fff;"></div>
<div style="position:absolute;left:1256px;top:554px;width:16px;height:1px;background:#404040;"></div>
<div style="position:absolute;left:1271px;top:541px;width:1px;height:14px;background:#404040;"></div>
<div style="position:absolute;left:1257px;top:553px;width:14px;height:1px;background:#808080;"></div>
<div style="position:absolute;left:1270px;top:542px;width:1px;height:12px;background:#808080;"></div>
<svg style="position:absolute;left:1260px;top:544px" width="8" height="7" shape-rendering="crispEdges"><path d="M0 0h1v1h-1zM1 0h1v1h-1zM6 0h1v1h-1zM7 0h1v1h-1zM1 1h1v1h-1zM2 1h1v1h-1zM5 1h1v1h-1zM6 1h1v1h-1zM2 2h1v1h-1zM3 2h1v1h-1zM4 2h1v1h-1zM5 2h1v1h-1zM3 3h1v1h-1zM4 3h1v1h-1zM2 4h1v1h-1zM3 4h1v1h-1zM4 4h1v1h-1zM5 4h1v1h-1zM1 5h1v1h-1zM2 5h1v1h-1zM5 5h1v1h-1zM6 5h1v1h-1zM0 6h1v1h-1zM1 6h1v1h-1zM6 6h1v1h-1zM7 6h1v1h-1z" fill="#000"/></svg>
<div style="position:absolute;left:6px;top:558px;width:1268px;height:1px;background:#808080;"></div>
<div style="position:absolute;left:6px;top:558px;width:1px;height:411px;background:#808080;"></div>
<div style="position:absolute;left:7px;top:559px;width:1266px;height:1px;background:#404040;"></div>
<div style="position:absolute;left:7px;top:559px;width:1px;height:409px;background:#404040;"></div>
<div style="position:absolute;left:6px;top:968px;width:1268px;height:1px;background:#fff;"></div>
<div style="position:absolute;left:1273px;top:558px;width:1px;height:411px;background:#fff;"></div>
<div style="position:absolute;left:7px;top:967px;width:1266px;height:1px;background:#D4D0C8;"></div>
<div style="position:absolute;left:1272px;top:559px;width:1px;height:409px;background:#D4D0C8;"></div>
<div style="position:absolute;left:8px;top:560px;width:1264px;height:407px;background:#000;"></div>
<svg style="position:absolute;left:0;top:0" width="1280" height="998">
<path d="M54 578.5H1224M54 941.5H1231M54.5 578V949M1223.5 578V949" stroke="#C0C0C0" shape-rendering="crispEdges"/>
<path d="M47 578.5H54" stroke="#C0C0C0" shape-rendering="crispEdges"/>
<path d="M47 611.5H54" stroke="#C0C0C0" shape-rendering="crispEdges"/>
<path d="M47 644.5H54" stroke="#C0C0C0" shape-rendering="crispEdges"/>
<path d="M47 677.5H54" stroke="#C0C0C0" shape-rendering="crispEdges"/>
<path d="M47 710.5H54" stroke="#C0C0C0" shape-rendering="crispEdges"/>
<path d="M47 743.5H54" stroke="#C0C0C0" shape-rendering="crispEdges"/>
<path d="M47 776.5H54" stroke="#C0C0C0" shape-rendering="crispEdges"/>
<path d="M47 809.5H54" stroke="#C0C0C0" shape-rendering="crispEdges"/>
<path d="M47 842.5H54" stroke="#C0C0C0" shape-rendering="crispEdges"/>
<path d="M47 875.5H54" stroke="#C0C0C0" shape-rendering="crispEdges"/>
<path d="M47 908.5H54" stroke="#C0C0C0" shape-rendering="crispEdges"/>
<path d="M47 941.5H54" stroke="#C0C0C0" shape-rendering="crispEdges"/>
<path d="M1223 578.5H1231" stroke="#C0C0C0" shape-rendering="crispEdges"/>
<path d="M1223 608.5H1231" stroke="#C0C0C0" shape-rendering="crispEdges"/>
<path d="M1223 638.5H1231" stroke="#C0C0C0" shape-rendering="crispEdges"/>
<path d="M1223 669.5H1231" stroke="#C0C0C0" shape-rendering="crispEdges"/>
<path d="M1223 699.5H1231" stroke="#C0C0C0" shape-rendering="crispEdges"/>
<path d="M1223 729.5H1231" stroke="#C0C0C0" shape-rendering="crispEdges"/>
<path d="M1223 760.5H1231" stroke="#C0C0C0" shape-rendering="crispEdges"/>
<path d="M1223 790.5H1231" stroke="#C0C0C0" shape-rendering="crispEdges"/>
<path d="M1223 820.5H1231" stroke="#C0C0C0" shape-rendering="crispEdges"/>
<path d="M1223 850.5H1231" stroke="#C0C0C0" shape-rendering="crispEdges"/>
<path d="M1223 880.5H1231" stroke="#C0C0C0" shape-rendering="crispEdges"/>
<path d="M1223 911.5H1231" stroke="#C0C0C0" shape-rendering="crispEdges"/>
<path d="M1223 941.5H1231" stroke="#C0C0C0" shape-rendering="crispEdges"/>
<path d="M185.5 941V949" stroke="#C0C0C0" shape-rendering="crispEdges"/>
<path d="M312.5 941V949" stroke="#C0C0C0" shape-rendering="crispEdges"/>
<path d="M437.5 941V949" stroke="#C0C0C0" shape-rendering="crispEdges"/>
<path d="M557.5 941V949" stroke="#C0C0C0" shape-rendering="crispEdges"/>
<path d="M675.5 941V949" stroke="#C0C0C0" shape-rendering="crispEdges"/>
<path d="M790.5 941V949" stroke="#C0C0C0" shape-rendering="crispEdges"/>
<path d="M902.5 941V949" stroke="#C0C0C0" shape-rendering="crispEdges"/>
<path d="M1012.5 941V949" stroke="#C0C0C0" shape-rendering="crispEdges"/>
<path d="M1118.5 941V949" stroke="#C0C0C0" shape-rendering="crispEdges"/>
<path d="M881 586h26v1h-26zM868 587h13v1h-13zM907 587h10v1h-10zM862 588h6v1h-6zM917 588h6v1h-6zM852 589h10v1h-10zM923 589h4v1h-4zM459 590h42v1h-42zM846 590h6v1h-6zM927 590h6v1h-6zM449 591h10v1h-10zM501 591h10v1h-10zM839 591h7v1h-7zM933 591h3v1h-3zM443 592h6v1h-6zM511 592h9v1h-9zM833 592h6v1h-6zM936 592h7v1h-7zM436 593h7v1h-7zM520 593h10v1h-10zM827 593h6v1h-6zM943 593h3v1h-3zM433 594h3v1h-3zM530 594h10v1h-10zM817 594h10v1h-10zM946 594h3v1h-3zM427 595h6v1h-6zM540 595h6v1h-6zM810 595h7v1h-7zM949 595h3v1h-3zM424 596h3v1h-3zM546 596h10v1h-10zM804 596h6v1h-6zM952 596h4v1h-4zM417 597h7v1h-7zM556 597h9v1h-9zM794 597h10v1h-10zM956 597h3v1h-3zM414 598h3v1h-3zM565 598h10v1h-10zM785 598h9v1h-9zM959 598h3v1h-3zM411 599h3v1h-3zM575 599h10v1h-10zM775 599h10v1h-10zM962 599h6v1h-6zM407 600h4v1h-4zM585 600h13v1h-13zM762 600h13v1h-13zM968 600h4v1h-4zM401 601h6v1h-6zM598 601h13v1h-13zM749 601h13v1h-13zM972 601h3v1h-3zM398 602h3v1h-3zM611 602h19v1h-19zM730 602h19v1h-19zM975 602h3v1h-3zM395 603h3v1h-3zM630 603h32v1h-32zM701 603h29v1h-29zM978 603h3v1h-3zM391 604h4v1h-4zM662 604h39v1h-39zM981 604h4v1h-4zM388 605h3v1h-3zM985 605h3v1h-3zM382 606h6v1h-6zM988 606h3v1h-3zM378 607h4v1h-4zM991 607h3v1h-3zM375 608h3v1h-3zM994 608h3v1h-3zM372 609h3v1h-3zM997 609h7v1h-7zM369 610h3v1h-3zM1004 610h3v1h-3zM362 611h7v1h-7zM1007 611h3v1h-3zM359 612h3v1h-3zM1010 612h4v1h-4zM356 613h3v1h-3zM1014 613h3v1h-3zM353 614h3v1h-3zM1017 614h3v1h-3zM346 615h7v1h-7zM1020 615h6v1h-6zM343 616h3v1h-3zM1026 616h4v1h-4zM340 617h3v1h-3zM1030 617h3v1h-3zM337 618h3v1h-3zM1033 618h3v1h-3zM330 619h7v1h-7zM1036 619h7v1h-7zM327 620h3v1h-3zM1043 620h3v1h-3zM324 621h3v1h-3zM1046 621h3v1h-3zM317 622h7v1h-7zM1049 622h7v1h-7zM314 623h3v1h-3zM1056 623h3v1h-3zM307 624h7v1h-7zM1059 624h3v1h-3zM304 625h3v1h-3zM1062 625h6v1h-6zM298 626h6v1h-6zM1068 626h4v1h-4zM295 627h3v1h-3zM1072 627h6v1h-6zM288 628h7v1h-7zM1078 628h3v1h-3zM285 629h3v1h-3zM1081 629h7v1h-7zM278 630h7v1h-7zM1088 630h3v1h-3zM275 631h3v1h-3zM1091 631h6v1h-6zM269 632h6v1h-6zM1097 632h4v1h-4zM262 633h7v1h-7zM1101 633h6v1h-6zM259 634h3v1h-3zM1107 634h7v1h-7zM253 635h6v1h-6zM1114 635h3v1h-3zM246 636h7v1h-7zM1117 636h6v1h-6zM243 637h3v1h-3zM1123 637h7v1h-7zM237 638h6v1h-6zM1130 638h6v1h-6zM230 639h7v1h-7zM1136 639h3v1h-3zM224 640h6v1h-6zM1139 640h7v1h-7zM217 641h7v1h-7zM1146 641h6v1h-6zM211 642h6v1h-6zM1152 642h7v1h-7zM204 643h7v1h-7zM1159 643h6v1h-6zM198 644h6v1h-6zM1165 644h7v1h-7zM191 645h7v1h-7zM1172 645h6v1h-6zM185 646h6v1h-6zM1178 646h6v1h-6zM179 647h6v1h-6zM1184 647h7v1h-7zM172 648h7v1h-7zM1191 648h6v1h-6zM166 649h6v1h-6zM1197 649h7v1h-7zM159 650h7v1h-7zM1204 650h6v1h-6zM153 651h6v1h-6zM1210 651h7v1h-7zM143 652h10v1h-10zM1217 652h5v1h-5zM137 653h6v1h-6zM130 654h7v1h-7zM120 655h10v1h-10zM114 656h6v1h-6zM104 657h10v1h-10zM98 658h6v1h-6zM88 659h10v1h-10zM82 660h6v1h-6zM72 661h10v1h-10zM66 662h6v1h-6zM56 663h10v1h-10zM54 664h2v1h-2z" fill="#00FF00" shape-rendering="crispEdges"/>
<path d="M54 598h3v1h-3zM60 598h3v1h-3zM66 598h3v1h-3zM72 599h3v1h-3zM78 599h3v1h-3zM84 599h3v1h-3zM90 599h3v1h-3zM96 600h3v1h-3zM102 600h3v1h-3zM108 600h3v1h-3zM114 600h3v1h-3zM120 601h3v1h-3zM126 601h3v1h-3zM132 601h3v1h-3zM138 601h3v1h-3zM144 602h3v1h-3zM150 602h3v1h-3zM156 602h3v1h-3zM162 603h3v1h-3zM168 603h3v1h-3zM174 603h3v1h-3zM180 604h3v1h-3zM186 604h3v1h-3zM192 604h3v1h-3zM198 605h3v1h-3zM204 605h3v1h-3zM210 605h1v1h-1zM211 606h2v1h-2zM216 606h3v1h-3zM222 606h2v1h-2zM224 607h1v1h-1zM228 607h3v1h-3zM234 607h3v1h-3zM240 608h3v1h-3zM246 609h3v1h-3zM252 609h3v1h-3zM258 610h3v1h-3zM264 610h2v1h-2zM266 611h1v1h-1zM270 611h3v1h-3zM276 612h3v1h-3zM282 613h3v1h-3zM288 613h3v1h-3zM294 614h3v1h-3zM300 615h3v1h-3zM306 616h3v1h-3zM312 617h3v1h-3zM318 618h2v1h-2zM320 619h1v1h-1zM324 619h3v1h-3zM330 620h3v1h-3zM336 621h1v1h-1zM337 622h2v1h-2zM342 623h3v1h-3zM348 624h1v1h-1zM349 625h2v1h-2zM354 626h2v1h-2zM356 627h1v1h-1zM360 627h2v1h-2zM362 628h1v1h-1zM366 629h3v1h-3zM372 631h2v1h-2zM374 632h1v1h-1zM378 634h3v1h-3zM384 635h1v1h-1zM385 636h2v1h-2zM390 638h2v1h-2zM392 639h1v1h-1zM396 640h1v1h-1zM397 641h2v1h-2zM402 643h1v1h-1zM403 644h2v1h-2zM408 646h2v1h-2zM410 647h1v1h-1zM414 649h1v1h-1zM415 650h2v1h-2zM420 652h1v1h-1zM421 653h2v1h-2zM426 656h2v1h-2zM428 657h1v1h-1zM432 660h2v1h-2zM434 661h1v1h-1zM438 664h1v1h-1zM439 665h2v1h-2zM444 668h1v1h-1zM445 669h2v1h-2zM450 672h1v1h-1zM451 673h1v1h-1zM452 674h1v1h-1zM456 676h1v1h-1zM457 677h1v1h-1zM458 678h1v1h-1zM462 681h1v1h-1zM463 682h1v1h-1zM464 683h1v1h-1zM468 686h2v1h-2zM470 687h1v1h-1zM474 690h1v1h-1zM475 691h1v1h-1zM476 692h1v1h-1zM480 694h1v1h-1zM481 695h2v1h-2zM486 699h1v1h-1zM487 700h2v1h-2zM492 703h1v1h-1zM493 704h2v1h-2zM498 706h1v1h-1zM499 707h1v1h-1zM500 708h1v1h-1zM504 710h1v1h-1zM505 711h1v1h-1zM506 712h1v1h-1zM510 714h2v1h-2zM512 715h1v1h-1zM516 717h2v1h-2zM518 718h1v1h-1zM522 720h2v1h-2zM524 721h1v1h-1zM528 723h2v1h-2zM530 724h1v1h-1zM534 726h2v1h-2zM536 727h1v1h-1zM540 728h2v1h-2zM542 729h1v1h-1zM546 731h3v1h-3zM552 732h1v1h-1zM553 733h2v1h-2zM558 734h1v1h-1zM559 735h2v1h-2zM564 736h1v1h-1zM565 737h2v1h-2zM570 738h2v1h-2zM572 739h1v1h-1zM576 740h2v1h-2zM578 741h1v1h-1zM582 742h3v1h-3zM588 744h3v1h-3zM594 745h3v1h-3zM600 746h3v1h-3zM606 747h1v1h-1zM607 748h2v1h-2zM612 749h3v1h-3zM618 750h3v1h-3zM624 751h3v1h-3zM630 752h3v1h-3zM636 753h3v1h-3zM642 754h1v1h-1zM643 755h2v1h-2zM648 755h1v1h-1zM649 756h2v1h-2zM654 756h2v1h-2zM656 757h1v1h-1zM660 757h2v1h-2zM662 758h1v1h-1zM666 758h3v1h-3zM672 759h3v1h-3zM678 760h3v1h-3zM684 761h3v1h-3zM690 762h3v1h-3zM696 763h3v1h-3zM702 764h3v1h-3zM708 765h3v1h-3zM714 766h3v1h-3zM720 767h3v1h-3zM726 768h3v1h-3zM732 769h3v1h-3zM738 770h3v1h-3zM744 771h2v1h-2zM746 772h1v1h-1zM750 772h2v1h-2zM752 773h1v1h-1zM756 774h3v1h-3zM762 775h3v1h-3zM768 776h3v1h-3zM774 777h1v1h-1zM775 778h2v1h-2zM780 778h1v1h-1zM781 779h2v1h-2zM786 780h2v1h-2zM788 781h1v1h-1zM792 782h2v1h-2zM794 783h1v1h-1zM798 784h3v1h-3zM804 785h3v1h-3zM810 787h1v1h-1zM811 788h2v1h-2zM816 789h1v1h-1zM817 790h2v1h-2zM822 791h1v1h-1zM823 792h2v1h-2zM828 793h1v1h-1zM829 794h2v1h-2zM834 796h1v1h-1zM835 797h2v1h-2zM840 799h2v1h-2zM842 800h1v1h-1zM846 802h2v1h-2zM848 803h1v1h-1zM852 805h1v1h-1zM853 806h2v1h-2zM858 809h2v1h-2zM860 810h1v1h-1zM864 813h2v1h-2zM866 814h1v1h-1zM870 816h1v1h-1zM871 817h2v1h-2zM876 820h1v1h-1zM877 821h1v1h-1zM878 822h1v1h-1zM882 825h2v1h-2zM884 826h1v1h-1zM888 829h1v1h-1zM889 830h1v1h-1zM890 831h1v1h-1zM894 835h2v1h-2zM896 836h1v1h-1zM900 839h1v1h-1zM901 840h1v1h-1zM902 841h1v1h-1zM906 845h2v1h-2zM908 846h1v1h-1zM912 849h1v1h-1zM913 850h1v1h-1zM914 851h1v1h-1zM918 854h1v1h-1zM919 855h1v1h-1zM920 856h1v1h-1zM924 859h1v1h-1zM925 860h1v1h-1zM926 861h1v1h-1zM930 863h1v1h-1zM931 864h1v1h-1zM932 865h1v1h-1zM936 868h1v1h-1zM937 869h1v1h-1zM938 870h1v1h-1zM942 872h2v1h-2zM944 873h1v1h-1zM948 876h2v1h-2zM950 877h1v1h-1zM954 879h1v1h-1zM955 880h2v1h-2zM960 883h1v1h-1zM961 884h2v1h-2zM966 886h1v1h-1zM967 887h2v1h-2zM972 889h3v1h-3zM978 891h1v1h-1zM979 892h2v1h-2zM984 893h1v1h-1zM985 894h2v1h-2zM990 896h2v1h-2zM992 897h1v1h-1zM996 898h1v1h-1zM997 899h2v1h-2zM1002 900h2v1h-2zM1004 901h1v1h-1zM1008 902h3v1h-3zM1014 903h3v1h-3zM1020 905h3v1h-3zM1026 906h3v1h-3zM1032 907h1v1h-1zM1033 908h2v1h-2zM1038 908h1v1h-1zM1039 909h2v1h-2zM1044 909h2v1h-2zM1046 910h1v1h-1zM1050 911h3v1h-3zM1056 912h3v1h-3zM1062 913h3v1h-3zM1068 914h3v1h-3zM1074 914h3v1h-3zM1080 915h3v1h-3zM1086 916h3v1h-3zM1092 916h2v1h-2zM1094 917h1v1h-1zM1098 917h3v1h-3zM1104 918h3v1h-3zM1110 918h3v1h-3zM1116 919h3v1h-3zM1122 919h1v1h-1zM1123 920h2v1h-2zM1128 920h3v1h-3zM1134 920h2v1h-2zM1136 921h1v1h-1zM1140 921h3v1h-3zM1146 921h3v1h-3zM1152 922h3v1h-3zM1158 922h3v1h-3zM1164 922h1v1h-1zM1165 923h2v1h-2zM1170 923h3v1h-3zM1176 923h3v1h-3zM1182 924h3v1h-3zM1188 924h3v1h-3zM1194 924h3v1h-3zM1200 925h3v1h-3zM1206 925h3v1h-3zM1212 925h3v1h-3zM1218 925h2v1h-2zM1220 926h1v1h-1z" fill="#00FF00" shape-rendering="crispEdges"/>
<path d="M901 723h32v1h-32zM891 724h10v1h-10zM933 724h10v1h-10zM888 725h3v1h-3zM943 725h6v1h-6zM881 726h7v1h-7zM949 726h7v1h-7zM878 727h3v1h-3zM956 727h6v1h-6zM872 728h6v1h-6zM962 728h6v1h-6zM433 729h29v1h-29zM868 729h4v1h-4zM968 729h4v1h-4zM424 730h9v1h-9zM462 730h10v1h-10zM865 730h3v1h-3zM972 730h6v1h-6zM414 731h10v1h-10zM472 731h6v1h-6zM862 731h3v1h-3zM978 731h7v1h-7zM404 732h10v1h-10zM478 732h7v1h-7zM859 732h3v1h-3zM985 732h3v1h-3zM398 733h6v1h-6zM485 733h3v1h-3zM856 733h3v1h-3zM988 733h6v1h-6zM391 734h7v1h-7zM488 734h6v1h-6zM852 734h4v1h-4zM994 734h7v1h-7zM385 735h6v1h-6zM494 735h4v1h-4zM849 735h3v1h-3zM1001 735h6v1h-6zM378 736h7v1h-7zM498 736h3v1h-3zM846 736h3v1h-3zM1007 736h3v1h-3zM372 737h6v1h-6zM501 737h3v1h-3zM843 737h3v1h-3zM1010 737h7v1h-7zM366 738h6v1h-6zM504 738h3v1h-3zM839 738h4v1h-4zM1017 738h6v1h-6zM359 739h7v1h-7zM507 739h7v1h-7zM836 739h3v1h-3zM1023 739h7v1h-7zM353 740h6v1h-6zM514 740h3v1h-3zM833 740h3v1h-3zM1030 740h6v1h-6zM343 741h10v1h-10zM517 741h3v1h-3zM831 741h2v1h-2zM1036 741h7v1h-7zM337 742h6v1h-6zM520 742h3v1h-3zM829 742h2v1h-2zM1043 742h6v1h-6zM330 743h7v1h-7zM523 743h2v1h-2zM827 743h2v1h-2zM1049 743h7v1h-7zM324 744h6v1h-6zM525 744h2v1h-2zM823 744h4v1h-4zM1056 744h6v1h-6zM317 745h7v1h-7zM527 745h3v1h-3zM820 745h3v1h-3zM1062 745h10v1h-10zM307 746h10v1h-10zM530 746h3v1h-3zM817 746h3v1h-3zM1072 746h6v1h-6zM301 747h6v1h-6zM533 747h3v1h-3zM814 747h3v1h-3zM1078 747h10v1h-10zM291 748h10v1h-10zM536 748h4v1h-4zM810 748h4v1h-4zM1088 748h6v1h-6zM285 749h6v1h-6zM540 749h3v1h-3zM808 749h2v1h-2zM1094 749h10v1h-10zM275 750h10v1h-10zM543 750h3v1h-3zM806 750h2v1h-2zM1104 750h6v1h-6zM266 751h9v1h-9zM546 751h2v1h-2zM804 751h2v1h-2zM1110 751h10v1h-10zM256 752h10v1h-10zM548 752h2v1h-2zM801 752h3v1h-3zM1120 752h10v1h-10zM246 753h10v1h-10zM550 753h3v1h-3zM798 753h3v1h-3zM1130 753h9v1h-9zM237 754h9v1h-9zM553 754h3v1h-3zM794 754h4v1h-4zM1139 754h10v1h-10zM227 755h10v1h-10zM556 755h3v1h-3zM792 755h2v1h-2zM1149 755h10v1h-10zM217 756h10v1h-10zM559 756h3v1h-3zM790 756h2v1h-2zM1159 756h9v1h-9zM204 757h13v1h-13zM562 757h2v1h-2zM788 757h2v1h-2zM1168 757h13v1h-13zM195 758h9v1h-9zM564 758h2v1h-2zM785 758h3v1h-3zM1181 758h10v1h-10zM182 759h13v1h-13zM566 759h3v1h-3zM781 759h4v1h-4zM1191 759h13v1h-13zM172 760h10v1h-10zM569 760h3v1h-3zM779 760h2v1h-2zM1204 760h13v1h-13zM159 761h13v1h-13zM572 761h2v1h-2zM777 761h2v1h-2zM1217 761h5v1h-5zM146 762h13v1h-13zM574 762h2v1h-2zM775 762h2v1h-2zM130 763h16v1h-16zM576 763h2v1h-2zM772 763h3v1h-3zM117 764h13v1h-13zM578 764h4v1h-4zM770 764h2v1h-2zM104 765h13v1h-13zM582 765h2v1h-2zM768 765h2v1h-2zM88 766h16v1h-16zM584 766h2v1h-2zM765 766h3v1h-3zM72 767h16v1h-16zM586 767h2v1h-2zM763 767h2v1h-2zM56 768h16v1h-16zM588 768h2v1h-2zM761 768h2v1h-2zM54 769h2v1h-2zM590 769h2v1h-2zM759 769h2v1h-2zM592 770h2v1h-2zM757 770h2v1h-2zM594 771h3v1h-3zM755 771h2v1h-2zM597 772h2v1h-2zM752 772h3v1h-3zM599 773h1v1h-1zM750 773h2v1h-2zM600 774h2v1h-2zM748 774h2v1h-2zM602 775h2v1h-2zM746 775h2v1h-2zM604 776h2v1h-2zM744 776h2v1h-2zM606 777h2v1h-2zM742 777h2v1h-2zM608 778h2v1h-2zM741 778h1v1h-1zM610 779h2v1h-2zM739 779h2v1h-2zM612 780h1v1h-1zM737 780h2v1h-2zM613 781h2v1h-2zM735 781h2v1h-2zM615 782h1v1h-1zM734 782h1v1h-1zM616 783h2v1h-2zM732 783h2v1h-2zM618 784h1v1h-1zM731 784h1v1h-1zM619 785h2v1h-2zM729 785h2v1h-2zM621 786h1v1h-1zM728 786h1v1h-1zM622 787h2v1h-2zM726 787h2v1h-2zM624 788h2v1h-2zM724 788h2v1h-2zM626 789h2v1h-2zM722 789h2v1h-2zM628 790h1v1h-1zM721 790h1v1h-1zM629 791h1v1h-1zM719 791h2v1h-2zM630 792h1v1h-1zM718 792h1v1h-1zM631 793h1v1h-1zM717 793h1v1h-1zM632 794h1v1h-1zM716 794h1v1h-1zM633 795h1v1h-1zM715 795h1v1h-1zM634 796h1v1h-1zM713 796h2v1h-2zM635 797h2v1h-2zM712 797h1v1h-1zM637 798h2v1h-2zM711 798h1v1h-1zM639 799h1v1h-1zM710 799h1v1h-1zM640 800h1v1h-1zM709 800h1v1h-1zM641 801h1v1h-1zM708 801h1v1h-1zM642 802h1v1h-1zM707 802h1v1h-1zM643 803h1v1h-1zM706 803h1v1h-1zM643 804h1v1h-1zM705 804h1v1h-1zM644 805h1v1h-1zM704 805h1v1h-1zM645 806h1v1h-1zM703 806h1v1h-1zM646 807h1v1h-1zM702 807h1v1h-1zM646 808h1v1h-1zM701 808h1v1h-1zM647 809h1v1h-1zM701 809h1v1h-1zM648 810h1v1h-1zM700 810h1v1h-1zM649 811h1v1h-1zM699 811h1v1h-1zM649 812h1v1h-1zM698 812h1v1h-1zM650 813h1v1h-1zM698 813h1v1h-1zM651 814h1v1h-1zM697 814h1v1h-1zM652 815h1v1h-1zM696 815h1v1h-1zM652 816h1v1h-1zM695 816h1v1h-1zM653 817h1v1h-1zM695 817h1v1h-1zM654 818h1v1h-1zM694 818h1v1h-1zM655 819h1v1h-1zM693 819h1v1h-1zM655 820h1v1h-1zM693 820h1v1h-1zM656 821h1v1h-1zM692 821h1v1h-1zM656 822h1v1h-1zM692 822h1v1h-1zM657 823h1v1h-1zM691 823h1v1h-1zM657 824h1v1h-1zM691 824h1v1h-1zM658 825h1v1h-1zM690 825h1v1h-1zM658 826h1v1h-1zM690 826h1v1h-1zM659 827h1v1h-1zM689 827h1v1h-1zM659 828h1v1h-1zM689 828h1v1h-1zM660 829h1v1h-1zM688 829h1v1h-1zM660 830h1v1h-1zM688 830h1v1h-1zM660 831h1v1h-1zM687 831h1v1h-1zM661 832h1v1h-1zM687 832h1v1h-1zM661 833h1v1h-1zM686 833h1v1h-1zM661 834h1v1h-1zM686 834h1v1h-1zM662 835h1v1h-1zM686 835h1v1h-1zM662 836h1v1h-1zM685 836h1v1h-1zM662 837h1v1h-1zM685 837h1v1h-1zM663 838h1v1h-1zM685 838h1v1h-1zM663 839h1v1h-1zM685 839h1v1h-1zM663 840h1v1h-1zM684 840h1v1h-1zM664 841h1v1h-1zM684 841h1v1h-1zM664 842h1v1h-1zM684 842h1v1h-1zM664 843h1v1h-1zM683 843h1v1h-1zM665 844h1v1h-1zM683 844h1v1h-1zM665 845h1v1h-1zM683 845h1v1h-1zM666 846h1v1h-1zM682 846h1v1h-1zM666 847h1v1h-1zM682 847h1v1h-1zM666 848h1v1h-1zM682 848h1v1h-1zM667 849h1v1h-1zM682 849h1v1h-1zM667 850h1v1h-1zM681 850h1v1h-1zM667 851h1v1h-1zM681 851h1v1h-1zM667 852h1v1h-1zM681 852h1v1h-1zM667 853h1v1h-1zM681 853h1v1h-1zM668 854h1v1h-1zM680 854h1v1h-1zM668 855h1v1h-1zM680 855h1v1h-1zM668 856h1v1h-1zM680 856h1v1h-1zM668 857h1v1h-1zM680 857h1v1h-1zM668 858h1v1h-1zM679 858h1v1h-1zM668 859h1v1h-1zM679 859h1v1h-1zM669 860h1v1h-1zM679 860h1v1h-1zM669 861h1v1h-1zM679 861h1v1h-1zM669 862h1v1h-1zM679 862h1v1h-1zM669 863h1v1h-1zM679 863h1v1h-1zM669 864h1v1h-1zM678 864h1v1h-1zM669 865h1v1h-1zM678 865h1v1h-1zM670 866h1v1h-1zM678 866h1v1h-1zM670 867h1v1h-1zM678 867h1v1h-1zM670 868h1v1h-1zM678 868h1v1h-1zM670 869h1v1h-1zM678 869h1v1h-1zM670 870h1v1h-1zM678 870h1v1h-1zM670 871h1v1h-1zM678 871h1v1h-1zM670 872h1v1h-1zM678 872h1v1h-1zM670 873h1v1h-1zM677 873h1v1h-1zM670 874h1v1h-1zM677 874h1v1h-1zM670 875h1v1h-1zM677 875h1v1h-1zM670 876h1v1h-1zM677 876h1v1h-1zM670 877h1v1h-1zM677 877h1v1h-1zM671 878h1v1h-1zM677 878h1v1h-1zM671 879h1v1h-1zM677 879h1v1h-1zM671 880h1v1h-1zM677 880h1v1h-1zM671 881h1v1h-1zM677 881h1v1h-1zM671 882h1v1h-1zM676 882h1v1h-1zM671 883h1v1h-1zM676 883h1v1h-1zM671 884h1v1h-1zM676 884h1v1h-1zM671 885h1v1h-1zM676 885h1v1h-1zM671 886h1v1h-1zM676 886h1v1h-1zM671 887h1v1h-1zM676 887h1v1h-1zM671 888h1v1h-1zM676 888h1v1h-1zM671 889h1v1h-1zM676 889h1v1h-1zM671 890h1v1h-1zM676 890h1v1h-1zM671 891h1v1h-1zM676 891h1v1h-1zM671 892h1v1h-1zM675 892h1v1h-1zM671 893h1v1h-1zM675 893h1v1h-1zM671 894h1v1h-1zM675 894h1v1h-1zM672 895h1v1h-1zM675 895h1v1h-1zM672 896h1v1h-1zM675 896h1v1h-1zM672 897h1v1h-1zM675 897h1v1h-1zM672 898h1v1h-1zM675 898h1v1h-1zM672 899h1v1h-1zM675 899h1v1h-1zM672 900h1v1h-1zM675 900h1v1h-1zM672 901h1v1h-1zM675 901h1v1h-1zM672 902h1v1h-1zM675 902h1v1h-1zM672 903h1v1h-1zM675 903h1v1h-1zM672 904h1v1h-1zM674 904h1v1h-1zM672 905h1v1h-1zM674 905h1v1h-1zM672 906h1v1h-1zM674 906h1v1h-1zM672 907h1v1h-1zM674 907h1v1h-1zM672 908h1v1h-1zM674 908h1v1h-1zM672 909h1v1h-1zM674 909h1v1h-1zM672 910h1v1h-1zM674 910h1v1h-1zM672 911h1v1h-1zM674 911h1v1h-1zM673 912h2v1h-2zM673 913h2v1h-2zM673 914h2v1h-2zM673 915h1v1h-1zM673 916h1v1h-1zM673 917h1v1h-1zM673 918h1v1h-1zM673 919h1v1h-1zM673 920h1v1h-1z" fill="#FF0000" shape-rendering="crispEdges"/>
<path d="M678 670h3v1h-3zM684 670h1v1h-1zM685 671h2v1h-2zM690 671h1v1h-1zM676 672h1v1h-1zM691 672h2v1h-2zM696 672h2v1h-2zM676 673h1v1h-1zM698 673h1v1h-1zM702 673h2v1h-2zM676 674h1v1h-1zM704 674h1v1h-1zM708 674h3v1h-3zM714 675h3v1h-3zM720 676h3v1h-3zM726 677h1v1h-1zM676 678h1v1h-1zM727 678h2v1h-2zM732 678h1v1h-1zM676 679h1v1h-1zM733 679h2v1h-2zM738 679h2v1h-2zM676 680h1v1h-1zM740 680h1v1h-1zM744 680h2v1h-2zM746 681h1v1h-1zM750 682h3v1h-3zM756 683h3v1h-3zM676 684h1v1h-1zM762 684h3v1h-3zM676 685h1v1h-1zM768 685h1v1h-1zM676 686h1v1h-1zM769 686h2v1h-2zM774 686h1v1h-1zM775 687h2v1h-2zM780 688h1v1h-1zM54 689h3v1h-3zM60 689h3v1h-3zM66 689h3v1h-3zM72 689h3v1h-3zM781 689h2v1h-2zM786 689h2v1h-2zM78 690h3v1h-3zM84 690h3v1h-3zM90 690h3v1h-3zM96 690h3v1h-3zM676 690h1v1h-1zM788 690h1v1h-1zM102 691h3v1h-3zM108 691h3v1h-3zM114 691h3v1h-3zM120 691h3v1h-3zM126 691h1v1h-1zM676 691h1v1h-1zM792 691h2v1h-2zM127 692h2v1h-2zM132 692h3v1h-3zM138 692h3v1h-3zM144 692h2v1h-2zM676 692h1v1h-1zM794 692h1v1h-1zM146 693h1v1h-1zM150 693h3v1h-3zM156 693h3v1h-3zM162 693h3v1h-3zM798 693h3v1h-3zM168 694h3v1h-3zM174 694h3v1h-3zM180 694h3v1h-3zM186 695h3v1h-3zM192 695h3v1h-3zM198 695h3v1h-3zM804 695h3v1h-3zM204 696h3v1h-3zM210 696h3v1h-3zM676 696h1v1h-1zM216 697h3v1h-3zM222 697h3v1h-3zM676 697h1v1h-1zM810 697h3v1h-3zM228 698h3v1h-3zM234 698h3v1h-3zM676 698h1v1h-1zM816 698h1v1h-1zM240 699h3v1h-3zM246 699h3v1h-3zM817 699h2v1h-2zM252 700h3v1h-3zM258 700h1v1h-1zM822 700h1v1h-1zM259 701h2v1h-2zM264 701h3v1h-3zM823 701h2v1h-2zM270 702h3v1h-3zM675 702h1v1h-1zM276 703h3v1h-3zM282 703h3v1h-3zM675 703h1v1h-1zM828 703h2v1h-2zM288 704h3v1h-3zM675 704h1v1h-1zM830 704h1v1h-1zM294 705h3v1h-3zM834 705h1v1h-1zM300 706h3v1h-3zM835 706h2v1h-2zM306 707h3v1h-3zM312 708h3v1h-3zM675 708h1v1h-1zM840 708h2v1h-2zM318 709h3v1h-3zM675 709h1v1h-1zM842 709h1v1h-1zM324 710h3v1h-3zM675 710h1v1h-1zM330 711h3v1h-3zM846 711h1v1h-1zM336 712h1v1h-1zM847 712h2v1h-2zM337 713h2v1h-2zM342 713h1v1h-1zM343 714h2v1h-2zM675 714h1v1h-1zM852 714h1v1h-1zM348 715h1v1h-1zM675 715h1v1h-1zM853 715h2v1h-2zM349 716h2v1h-2zM354 716h2v1h-2zM675 716h1v1h-1zM356 717h1v1h-1zM360 718h2v1h-2zM858 718h2v1h-2zM362 719h1v1h-1zM860 719h1v1h-1zM366 720h3v1h-3zM675 720h1v1h-1zM675 721h1v1h-1zM372 722h3v1h-3zM675 722h1v1h-1zM864 722h2v1h-2zM866 723h1v1h-1zM378 724h3v1h-3zM870 725h1v1h-1zM384 726h1v1h-1zM675 726h1v1h-1zM871 726h2v1h-2zM385 727h2v1h-2zM675 727h1v1h-1zM390 728h1v1h-1zM675 728h1v1h-1zM391 729h2v1h-2zM876 730h1v1h-1zM396 731h2v1h-2zM877 731h2v1h-2zM398 732h1v1h-1zM675 732h1v1h-1zM675 733h1v1h-1zM402 734h2v1h-2zM675 734h1v1h-1zM882 734h2v1h-2zM404 735h1v1h-1zM884 735h1v1h-1zM408 737h2v1h-2zM410 738h1v1h-1zM675 738h1v1h-1zM675 739h1v1h-1zM888 739h1v1h-1zM414 740h2v1h-2zM675 740h1v1h-1zM889 740h1v1h-1zM416 741h1v1h-1zM890 741h1v1h-1zM420 743h1v1h-1zM421 744h2v1h-2zM675 744h1v1h-1zM894 744h2v1h-2zM675 745h1v1h-1zM896 745h1v1h-1zM675 746h1v1h-1zM426 747h2v1h-2zM428 748h1v1h-1zM900 748h1v1h-1zM901 749h1v1h-1zM675 750h1v1h-1zM902 750h1v1h-1zM432 751h2v1h-2zM675 751h1v1h-1zM434 752h1v1h-1zM675 752h1v1h-1zM438 754h1v1h-1zM906 754h1v1h-1zM439 755h2v1h-2zM907 755h1v1h-1zM675 756h1v1h-1zM908 756h1v1h-1zM675 757h1v1h-1zM675 758h1v1h-1zM912 758h1v1h-1zM444 759h1v1h-1zM913 759h1v1h-1zM445 760h2v1h-2zM914 760h1v1h-1zM674 762h1v1h-1zM450 763h2v1h-2zM674 763h1v1h-1zM452 764h1v1h-1zM674 764h1v1h-1zM918 764h1v1h-1zM919 765h2v1h-2zM456 767h1v1h-1zM457 768h1v1h-1zM674 768h1v1h-1zM924 768h1v1h-1zM458 769h1v1h-1zM674 769h1v1h-1zM925 769h1v1h-1zM674 770h1v1h-1zM926 770h1v1h-1zM462 772h1v1h-1zM463 773h1v1h-1zM930 773h1v1h-1zM464 774h1v1h-1zM674 774h1v1h-1zM931 774h1v1h-1zM674 775h1v1h-1zM932 775h1v1h-1zM468 776h1v1h-1zM674 776h1v1h-1zM469 777h1v1h-1zM936 777h1v1h-1zM470 778h1v1h-1zM937 778h1v1h-1zM938 779h1v1h-1zM674 780h1v1h-1zM474 781h2v1h-2zM674 781h1v1h-1zM476 782h1v1h-1zM674 782h1v1h-1zM942 782h2v1h-2zM944 783h1v1h-1zM480 785h1v1h-1zM481 786h2v1h-2zM674 786h1v1h-1zM948 786h2v1h-2zM674 787h1v1h-1zM950 787h1v1h-1zM674 788h1v1h-1zM486 789h1v1h-1zM954 789h2v1h-2zM487 790h1v1h-1zM956 790h1v1h-1zM488 791h1v1h-1zM674 792h1v1h-1zM960 792h1v1h-1zM674 793h1v1h-1zM961 793h2v1h-2zM492 794h1v1h-1zM674 794h1v1h-1zM493 795h2v1h-2zM966 795h1v1h-1zM967 796h2v1h-2zM498 797h1v1h-1zM499 798h1v1h-1zM674 798h1v1h-1zM972 798h2v1h-2zM500 799h1v1h-1zM674 799h1v1h-1zM974 799h1v1h-1zM674 800h1v1h-1zM504 801h1v1h-1zM978 801h3v1h-3zM505 802h1v1h-1zM506 803h1v1h-1zM984 803h2v1h-2zM510 804h1v1h-1zM674 804h1v1h-1zM986 804h1v1h-1zM511 805h2v1h-2zM674 805h1v1h-1zM990 805h1v1h-1zM674 806h1v1h-1zM991 806h2v1h-2zM996 807h1v1h-1zM516 808h2v1h-2zM997 808h2v1h-2zM518 809h1v1h-1zM1002 809h2v1h-2zM522 810h1v1h-1zM674 810h1v1h-1zM1004 810h1v1h-1zM523 811h2v1h-2zM674 811h1v1h-1zM1008 811h2v1h-2zM674 812h1v1h-1zM1010 812h1v1h-1zM1014 812h3v1h-3zM528 814h2v1h-2zM1020 814h3v1h-3zM530 815h1v1h-1zM534 816h1v1h-1zM674 816h1v1h-1zM1026 816h3v1h-3zM1032 816h1v1h-1zM535 817h2v1h-2zM674 817h1v1h-1zM1033 817h2v1h-2zM1038 817h1v1h-1zM673 818h1v1h-1zM1039 818h2v1h-2zM540 819h3v1h-3zM1044 819h3v1h-3zM1050 820h3v1h-3zM546 821h1v1h-1zM1056 821h3v1h-3zM547 822h2v1h-2zM673 822h1v1h-1zM1062 822h3v1h-3zM552 823h1v1h-1zM673 823h1v1h-1zM1068 823h3v1h-3zM1074 823h1v1h-1zM553 824h2v1h-2zM673 824h1v1h-1zM1075 824h2v1h-2zM1080 824h3v1h-3zM558 825h1v1h-1zM1086 825h3v1h-3zM559 826h2v1h-2zM1092 826h3v1h-3zM1098 826h3v1h-3zM564 827h1v1h-1zM1104 827h3v1h-3zM565 828h2v1h-2zM673 828h1v1h-1zM1110 828h3v1h-3zM1116 828h3v1h-3zM570 829h2v1h-2zM673 829h1v1h-1zM1122 829h3v1h-3zM1128 829h3v1h-3zM572 830h1v1h-1zM673 830h1v1h-1zM1134 830h3v1h-3zM1140 830h3v1h-3zM576 831h2v1h-2zM1146 831h3v1h-3zM1152 831h3v1h-3zM1158 831h3v1h-3zM578 832h1v1h-1zM1164 832h3v1h-3zM1170 832h3v1h-3zM582 833h3v1h-3zM1176 833h3v1h-3zM1182 833h3v1h-3zM1188 833h3v1h-3zM588 834h3v1h-3zM673 834h1v1h-1zM1194 834h3v1h-3zM1200 834h3v1h-3zM1206 834h3v1h-3zM1212 834h1v1h-1zM673 835h1v1h-1zM1213 835h2v1h-2zM1218 835h3v1h-3zM594 836h3v1h-3zM600 836h1v1h-1zM673 836h1v1h-1zM601 837h2v1h-2zM606 838h1v1h-1zM607 839h2v1h-2zM612 839h2v1h-2zM614 840h1v1h-1zM673 840h1v1h-1zM618 841h3v1h-3zM673 841h1v1h-1zM624 842h3v1h-3zM673 842h1v1h-1zM630 843h3v1h-3zM636 844h3v1h-3zM642 845h3v1h-3zM648 846h3v1h-3zM673 846h1v1h-1zM654 847h3v1h-3zM673 847h1v1h-1zM660 848h3v1h-3zM672 848h1v1h-1zM666 849h3v1h-3z" fill="#FF0000" shape-rendering="crispEdges"/>
</svg>
<div class="t" style="left:-13px;width:60px;text-align:right;top:571px;font-size:14px;letter-spacing:0.4px;color:#C0C0C0">27dB</div>
<div class="t" style="left:-13px;width:60px;text-align:right;top:604px;font-size:14px;letter-spacing:0.4px;color:#C0C0C0">18dB</div>
<div class="t" style="left:-13px;width:60px;text-align:right;top:637px;font-size:14px;letter-spacing:0.4px;color:#C0C0C0">9dB</div>
<div class="t" style="left:-13px;width:60px;text-align:right;top:670px;font-size:14px;letter-spacing:0.4px;color:#C0C0C0">0dB</div>
<div class="t" style="left:-13px;width:60px;text-align:right;top:703px;font-size:14px;letter-spacing:0.4px;color:#C0C0C0">-9dB</div>
<div class="t" style="left:-13px;width:60px;text-align:right;top:736px;font-size:14px;letter-spacing:0.4px;color:#C0C0C0">-18dB</div>
<div class="t" style="left:-13px;width:60px;text-align:right;top:769px;font-size:14px;letter-spacing:0.4px;color:#C0C0C0">-27dB</div>
<div class="t" style="left:-13px;width:60px;text-align:right;top:802px;font-size:14px;letter-spacing:0.4px;color:#C0C0C0">-36dB</div>
<div class="t" style="left:-13px;width:60px;text-align:right;top:835px;font-size:14px;letter-spacing:0.4px;color:#C0C0C0">-45dB</div>
<div class="t" style="left:-13px;width:60px;text-align:right;top:868px;font-size:14px;letter-spacing:0.4px;color:#C0C0C0">-54dB</div>
<div class="t" style="left:-13px;width:60px;text-align:right;top:901px;font-size:14px;letter-spacing:0.4px;color:#C0C0C0">-63dB</div>
<div class="t" style="left:-13px;width:60px;text-align:right;top:934px;font-size:14px;letter-spacing:0.4px;color:#C0C0C0">-72dB</div>
<div class="t" style="left:1168px;width:100px;text-align:right;top:571px;font-size:14px;letter-spacing:0.4px;color:#C0C0C0">0°</div>
<div class="t" style="left:1168px;width:100px;text-align:right;top:601px;font-size:14px;letter-spacing:0.4px;color:#C0C0C0">-30°</div>
<div class="t" style="left:1168px;width:100px;text-align:right;top:631px;font-size:14px;letter-spacing:0.4px;color:#C0C0C0">-60°</div>
<div class="t" style="left:1168px;width:100px;text-align:right;top:662px;font-size:14px;letter-spacing:0.4px;color:#C0C0C0">-90°</div>
<div class="t" style="left:1168px;width:100px;text-align:right;top:692px;font-size:14px;letter-spacing:0.4px;color:#C0C0C0">-120°</div>
<div class="t" style="left:1168px;width:100px;text-align:right;top:722px;font-size:14px;letter-spacing:0.4px;color:#C0C0C0">-150°</div>
<div class="t" style="left:1168px;width:100px;text-align:right;top:753px;font-size:14px;letter-spacing:0.4px;color:#C0C0C0">-180°</div>
<div class="t" style="left:1168px;width:100px;text-align:right;top:783px;font-size:14px;letter-spacing:0.4px;color:#C0C0C0">-210°</div>
<div class="t" style="left:1168px;width:100px;text-align:right;top:813px;font-size:14px;letter-spacing:0.4px;color:#C0C0C0">-240°</div>
<div class="t" style="left:1168px;width:100px;text-align:right;top:843px;font-size:14px;letter-spacing:0.4px;color:#C0C0C0">-270°</div>
<div class="t" style="left:1168px;width:100px;text-align:right;top:873px;font-size:14px;letter-spacing:0.4px;color:#C0C0C0">-300°</div>
<div class="t" style="left:1168px;width:100px;text-align:right;top:904px;font-size:14px;letter-spacing:0.4px;color:#C0C0C0">-330°</div>
<div class="t" style="left:1168px;width:100px;text-align:right;top:934px;font-size:14px;letter-spacing:0.4px;color:#C0C0C0">-360°</div>
<div class="t" style="left:14px;width:80px;text-align:center;top:950px;font-size:14px;letter-spacing:0.4px;color:#C0C0C0">17.5KHz</div>
<div class="t" style="left:145px;width:80px;text-align:center;top:950px;font-size:14px;letter-spacing:0.4px;color:#C0C0C0">18.0KHz</div>
<div class="t" style="left:272px;width:80px;text-align:center;top:950px;font-size:14px;letter-spacing:0.4px;color:#C0C0C0">18.5KHz</div>
<div class="t" style="left:397px;width:80px;text-align:center;top:950px;font-size:14px;letter-spacing:0.4px;color:#C0C0C0">19.0KHz</div>
<div class="t" style="left:517px;width:80px;text-align:center;top:950px;font-size:14px;letter-spacing:0.4px;color:#C0C0C0">19.5KHz</div>
<div class="t" style="left:635px;width:80px;text-align:center;top:950px;font-size:14px;letter-spacing:0.4px;color:#C0C0C0">20.0KHz</div>
<div class="t" style="left:750px;width:80px;text-align:center;top:950px;font-size:14px;letter-spacing:0.4px;color:#C0C0C0">20.5KHz</div>
<div class="t" style="left:862px;width:80px;text-align:center;top:950px;font-size:14px;letter-spacing:0.4px;color:#C0C0C0">21.0KHz</div>
<div class="t" style="left:972px;width:80px;text-align:center;top:950px;font-size:14px;letter-spacing:0.4px;color:#C0C0C0">21.5KHz</div>
<div class="t" style="left:1078px;width:80px;text-align:center;top:950px;font-size:14px;letter-spacing:0.4px;color:#C0C0C0">22.0KHz</div>
<div class="t" style="left:1183px;width:80px;text-align:center;top:950px;font-size:14px;letter-spacing:0.4px;color:#C0C0C0">22.5KHz</div>
<div class="t" style="left:328px;top:562px;font-size:14px;color:#00FF00">V(out)</div>
<div class="t" style="left:915px;top:562px;font-size:14px;color:#FF0000">I(V1)</div>
<div style="position:absolute;left:0px;top:975px;width:1280px;height:1px;background:#fff;"></div>
<div style="position:absolute;left:0px;top:995px;width:1280px;height:1px;background:#fff;"></div>
<div class="t" style="left:1px;top:981px;font-size:11px;color:#000;font-weight:normal;">Left-Click to redraw I(V1)[dB],  Right-Click to edit expression. Control-Left Click to integrate</div>
<div style="position:absolute;left:1229px;top:978px;width:50px;height:1px;background:#808080;"></div>
<div style="position:absolute;left:1229px;top:978px;width:1px;height:16px;background:#808080;"></div>
<div style="position:absolute;left:1229px;top:993px;width:50px;height:1px;background:#fff;"></div>
<div style="position:absolute;left:1278px;top:978px;width:1px;height:16px;background:#fff;"></div>
<div class="t" style="left:1231px;top:981px;font-size:11px;color:#000;font-weight:normal;">Alternate</div></body></html>
